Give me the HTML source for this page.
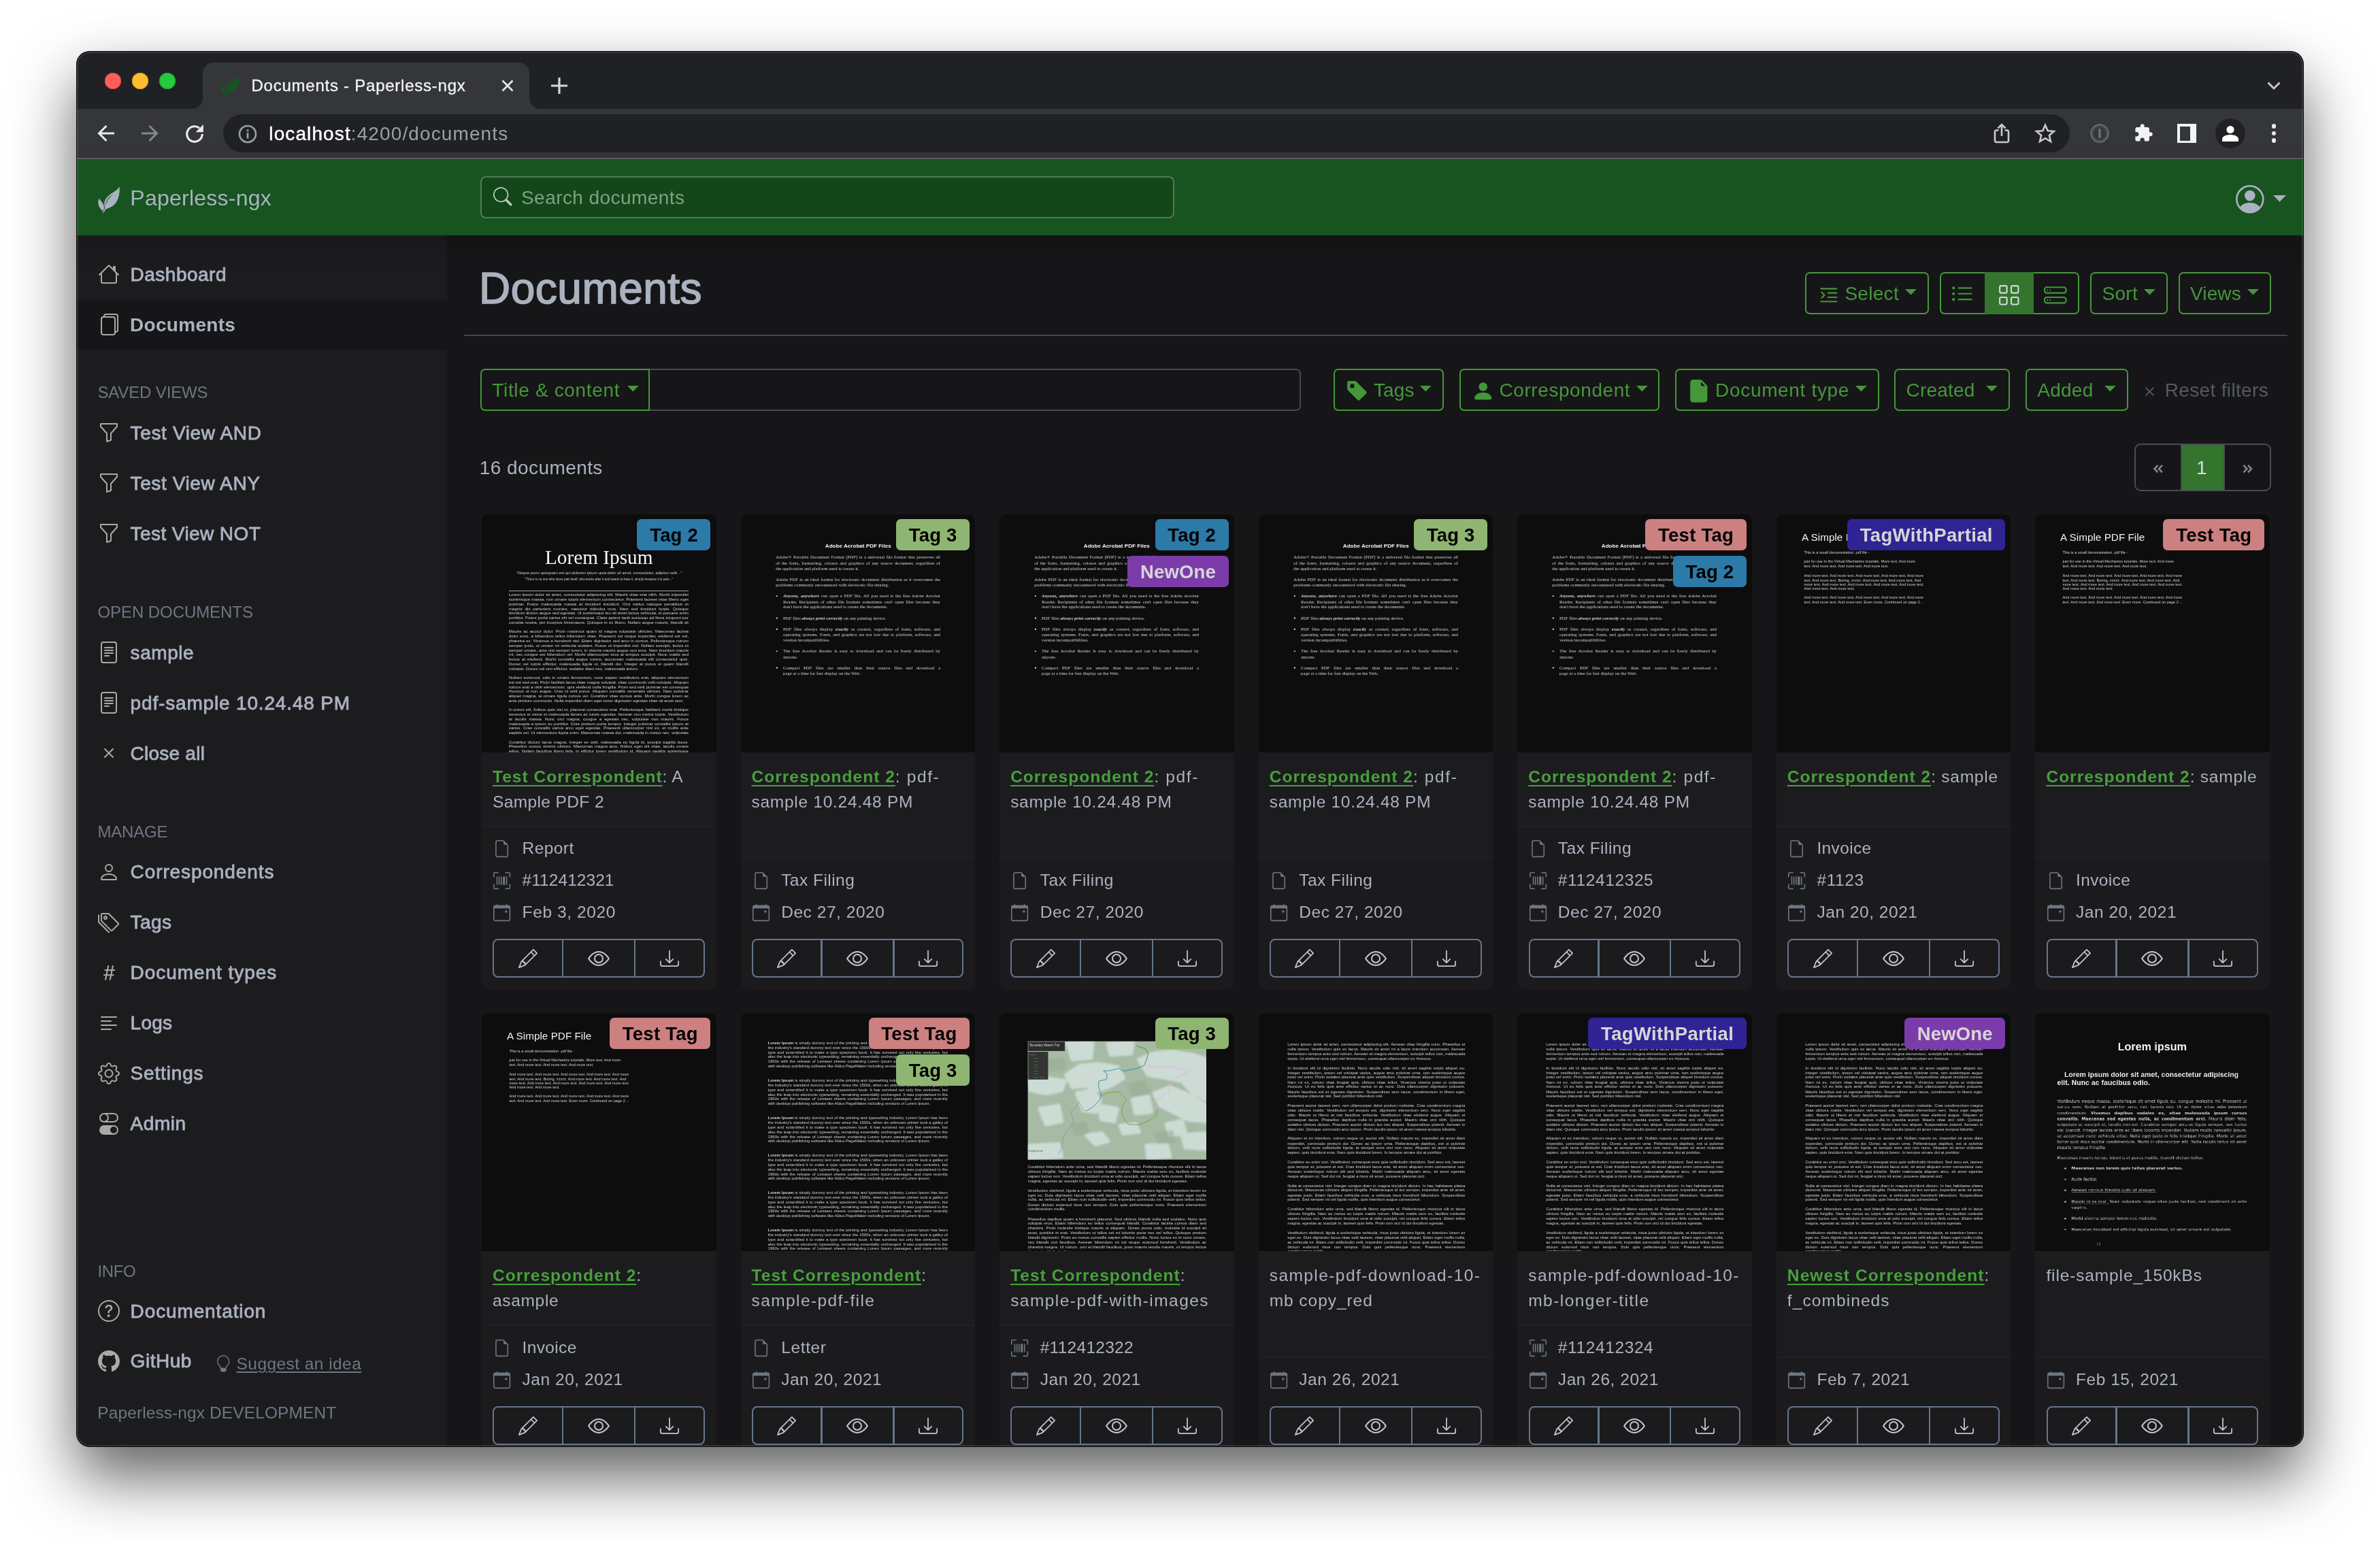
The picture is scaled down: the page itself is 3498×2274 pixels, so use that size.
<!DOCTYPE html>
<html lang="en"><head><meta charset="utf-8"><title>Documents - Paperless-ngx</title>
<style>
html,body{margin:0;padding:0}
body{width:3498px;height:2274px;overflow:hidden;background:#fff;position:relative;font-family:"Liberation Sans", sans-serif;}
#win{position:absolute;left:112px;top:75px;width:3274px;height:2052px;border-radius:20px;overflow:hidden;background:#161618;}
#shadow{position:absolute;left:112px;top:75px;width:3274px;height:2052px;border-radius:20px;box-shadow:0 44px 92px rgba(0,0,0,.62);}
#pg{will-change:transform;position:absolute;left:-112px;top:-75px;width:3498px;height:2274px;}
svg{display:block;overflow:visible}
.th{position:absolute;overflow:hidden;background:#0d0d0d}
.pgc{position:absolute;left:0;top:0;transform-origin:0 0;color:#d2d2d2}
.pgc p{margin:0;text-align:justify}
</style></head><body>
<div id="shadow"></div>
<div id="win"><div id="pg">
<div style="position:absolute;left:112px;top:75px;width:3274px;height:85px;background:#202124"></div><div style="position:absolute;left:112px;top:160px;width:3274px;height:72px;background:#35363a"></div><div style="position:absolute;left:112px;top:232px;width:3274px;height:2px;background:#5b5c60"></div><div style="position:absolute;left:298px;top:92px;width:480px;height:68px;background:#35363a;border-radius:16px 16px 0 0"></div><div style="position:absolute;left:282px;top:144px;width:16px;height:16px;background:radial-gradient(circle at 0 0, rgba(53,54,58,0) 15.5px, #35363a 16.5px)"></div><div style="position:absolute;left:778px;top:144px;width:16px;height:16px;background:radial-gradient(circle at 100% 0, rgba(53,54,58,0) 15.5px, #35363a 16.5px)"></div><div style="position:absolute;left:153.75px;top:106.75px;width:24.5px;height:24.5px;border-radius:50%;background:#fe5f57;box-shadow:inset 0 0 0 1px #e0443e"></div><div style="position:absolute;left:193.75px;top:106.75px;width:24.5px;height:24.5px;border-radius:50%;background:#febc2e;box-shadow:inset 0 0 0 1px #dea123"></div><div style="position:absolute;left:233.75px;top:106.75px;width:24.5px;height:24.5px;border-radius:50%;background:#28c840;box-shadow:inset 0 0 0 1px #1aab29"></div><svg style="position:absolute;left:324px;top:110.8px" width="28" height="31" viewBox="285 390 665 810" preserveAspectRatio="none"><path d="M940 395 C900 470 800 540 700 600 C590 670 500 760 480 880 C470 950 485 1000 497 1045 L428 1195 L447 1197 L532 1072 C620 1050 740 1000 820 900 C900 800 955 620 940 395 Z M320 750 C290 820 280 900 310 980 C340 1050 390 1100 432 1150 L470 1062 C480 1000 450 920 400 860 C370 820 340 780 320 750 Z" fill="#17541f"/><path d="M728 642 C620 700 532 800 520 965 C548 830 630 720 728 642 Z" fill="#35363a" stroke="#35363a" stroke-width="6"/></svg><div style="position:absolute;left:369.5px;top:109.70px;font-size:24px;line-height:31px;color:#f1f3f4;white-space:nowrap;letter-spacing:0.755px;-webkit-text-stroke:.35px #f1f3f4;">Documents - Paperless-ngx</div><svg style="position:absolute;left:736.8px;top:117px" width="18" height="18" viewBox="0 0 18 18" stroke="#e8eaed" stroke-width="2.6" fill="none"><path d="M1.5 1.5 L16.5 16.5 M16.5 1.5 L1.5 16.5"/></svg><svg style="position:absolute;left:810px;top:114px" width="24" height="24" viewBox="0 0 24 24" stroke="#d5d7da" stroke-width="3.2" fill="none"><path d="M12 0 V24 M0 12 H24"/></svg><svg style="position:absolute;left:3332px;top:120.3px" width="20" height="12" viewBox="0 0 20 12" stroke="#c4c6c9" stroke-width="3" fill="none"><path d="M1.5 1.5 L10 10 L18.5 1.5"/></svg><svg style="position:absolute;left:143px;top:183px" width="26" height="26" viewBox="0 0 26 26" stroke="#e8eaed" stroke-width="3" fill="none"><g ><path d="M25 13 H3 M13.5 2 L2.5 13 L13.5 24"/></g></svg><svg style="position:absolute;left:207.2px;top:183px" width="26" height="26" viewBox="0 0 26 26" stroke="#85878b" stroke-width="3" fill="none"><g transform="translate(26 0) scale(-1 1)"><path d="M25 13 H3 M13.5 2 L2.5 13 L13.5 24"/></g></svg><svg style="position:absolute;left:270.5px;top:181.5px" width="30" height="30" viewBox="0 0 28 28" fill="none"><path d="M24.5 14 A10.5 10.5 0 1 1 20.5 5.8" stroke="#e8eaed" stroke-width="2.9"/><path d="M26 1 V11.5 H15.5 Z" fill="#e8eaed"/></svg><div style="position:absolute;left:328px;top:168px;width:2714px;height:56px;background:#202124;border-radius:28px"></div><svg style="position:absolute;left:350.4px;top:182.5px" width="28" height="28" viewBox="0 0 28 28" fill="none"><circle cx="14" cy="14" r="12" stroke="#9aa0a6" stroke-width="2.6"/><rect x="12.6" y="12.2" width="2.8" height="8.4" fill="#9aa0a6"/><rect x="12.6" y="7.4" width="2.8" height="2.9" fill="#9aa0a6"/></svg><div style="position:absolute;left:395.3px;top:178.50px;font-size:28px;line-height:35px;color:#9aa0a6;white-space:nowrap;letter-spacing:1.11px;"><span style="color:#fff;-webkit-text-stroke:.45px #fff">localhost</span>:4200/documents</div><svg style="position:absolute;left:2930px;top:181px" width="24" height="30" viewBox="0 0 24 30" fill="none" stroke="#c8cacd" stroke-width="2.6"><path d="M7.5 10.5 H4.5 Q2 10.5 2 13 V25.5 Q2 28 4.5 28 H19.5 Q22 28 22 25.5 V13 Q22 10.5 19.5 10.5 H16.5 M12 19 V2.5 M6.5 7.5 L12 2 L17.5 7.5"/></svg><svg style="position:absolute;left:2991px;top:181px" width="30" height="30" viewBox="0 0 30 30" fill="none" stroke="#c8cacd" stroke-width="2.6" stroke-linejoin="miter"><path d="M15 2.8 L18.7 11.2 L27.8 12 L20.9 18 L23 27 L15 22.2 L7 27 L9.1 18 L2.2 12 L11.3 11.2 Z"/></svg><svg style="position:absolute;left:3071.6px;top:182px" width="28" height="28" viewBox="0 0 28 28" fill="none"><circle cx="14" cy="14" r="12.6" stroke="#6b6d71" stroke-width="2.2"/><circle cx="14" cy="14" r="10" stroke="#55575b" stroke-width="1.2"/><rect x="12.2" y="7" width="3.6" height="14" rx="1.5" fill="#6b6d71"/></svg><svg style="position:absolute;left:3136.4px;top:181px" width="29" height="29" viewBox="0 0 24 24" fill="#f1f3f4"><path d="M20.5 11H19V7c0-1.1-.9-2-2-2h-4V3.5C13 2.12 11.88 1 10.5 1S8 2.12 8 3.5V5H4c-1.1 0-1.99.9-1.99 2v3.8H3.5c1.49 0 2.7 1.21 2.7 2.7s-1.21 2.7-2.7 2.7H2V20c0 1.1.9 2 2 2h3.8v-1.5c0-1.49 1.21-2.7 2.7-2.7 1.49 0 2.7 1.21 2.7 2.7V22H17c1.1 0 2-.9 2-2v-4h1.5c1.38 0 2.500-1.120 2.500-2.500S21.880 11 20.500 11z"/></svg><div style="position:absolute;left:3200px;top:182px;width:28px;height:28px;background:#f1f3f4"></div><div style="position:absolute;left:3204px;top:185.5px;width:14.5px;height:21px;background:#35363a"></div><div style="position:absolute;left:3255.7px;top:174px;width:44px;height:44px;background:#202124;border-radius:50%"></div><svg style="position:absolute;left:3264.7px;top:183px" width="26" height="26" viewBox="0 0 26 26" fill="#fff"><circle cx="13" cy="7.5" r="5.6"/><path d="M1 25 V21.500 C1 17 8 15 13 15 S25 17 25 21.500 V25 Z"/></svg><div style="position:absolute;left:3338.6px;top:181.9px;width:6.8px;height:6.8px;background:#e8eaed;border-radius:50%"></div><div style="position:absolute;left:3338.6px;top:192.6px;width:6.8px;height:6.8px;background:#e8eaed;border-radius:50%"></div><div style="position:absolute;left:3338.6px;top:202.79999999999998px;width:6.8px;height:6.8px;background:#e8eaed;border-radius:50%"></div><div style="position:absolute;left:112px;top:346px;width:545.67px;height:1779px;background:#1c1c1f;box-shadow:inset -2px 0 0 rgba(0,0,0,.12)"></div><div style="position:absolute;left:112px;top:440px;width:545.67px;height:74px;background:#161618"></div><svg style="position:absolute;left:144px;top:387.0px;" width="32" height="32" viewBox="0 0 16 16" fill="#a9a9a9"><path fill-rule="evenodd" d="M2 13.5V7h1v6.5a.5.5 0 0 0 .5.5h9a.5.5 0 0 0 .5-.5V7h1v6.5a1.5 1.5 0 0 1-1.5 1.5h-9A1.5 1.5 0 0 1 2 13.5zm11-11V6l-2-2V2.5a.5.5 0 0 1 .5-.5h1a.5.5 0 0 1 .5.5z"/><path fill-rule="evenodd" d="M7.293 1.5a1 1 0 0 1 1.414 0l6.647 6.646a.5.5 0 0 1-.708.708L8 2.207 1.354 8.854a.5.5 0 1 1-.708-.708L7.293 1.5z"/></svg><div style="position:absolute;left:191.60000000000002px;top:385.80px;font-size:28px;line-height:35px;color:#abb2bf;white-space:nowrap;letter-spacing:0.491px;-webkit-text-stroke:.8px #abb2bf;">Dashboard</div><svg style="position:absolute;left:144px;top:461.0px;" width="32" height="32" viewBox="0 0 16 16" fill="#a9a9a9"><path d="M13 0H6a2 2 0 0 0-2 2 2 2 0 0 0-2 2v10a2 2 0 0 0 2 2h7a2 2 0 0 0 2-2 2 2 0 0 0 2-2V2a2 2 0 0 0-2-2zm0 13V4a2 2 0 0 0-2-2H5a1 1 0 0 1 1-1h7a1 1 0 0 1 1 1v10a1 1 0 0 1-1 1zM3 4a1 1 0 0 1 1-1h7a1 1 0 0 1 1 1v10a1 1 0 0 1-1 1H4a1 1 0 0 1-1-1V4z"/></svg><div style="position:absolute;left:191.10000000000002px;top:459.80px;font-size:28px;line-height:35px;color:#abb2bf;white-space:nowrap;font-weight:bold;letter-spacing:0.281px;">Documents</div><div style="position:absolute;left:143.4px;top:560.80px;font-size:24px;line-height:31px;color:#6d7783;white-space:nowrap;letter-spacing:-0.145px;">SAVED VIEWS</div><svg style="position:absolute;left:144px;top:619.7px;" width="32" height="32" viewBox="0 0 16 16" fill="#a9a9a9"><path d="M1.5 1.5A.5.5 0 0 1 2 1h12a.5.5 0 0 1 .5.5v2a.5.5 0 0 1-.128.334L10 8.692V13.5a.5.5 0 0 1-.342.474l-3 1A.5.5 0 0 1 6 14.5V8.692L1.628 3.834A.5.5 0 0 1 1.5 3.5v-2zm1 .5v1.308l4.372 4.858A.5.5 0 0 1 7 8.5v5.306l2-.666V8.5a.5.5 0 0 1 .128-.334L13.5 3.308V2h-11z"/></svg><div style="position:absolute;left:191.60000000000002px;top:618.50px;font-size:28px;line-height:35px;color:#abb2bf;white-space:nowrap;letter-spacing:0.633px;-webkit-text-stroke:.8px #abb2bf;">Test View AND</div><svg style="position:absolute;left:144px;top:693.7px;" width="32" height="32" viewBox="0 0 16 16" fill="#a9a9a9"><path d="M1.5 1.5A.5.5 0 0 1 2 1h12a.5.5 0 0 1 .5.5v2a.5.5 0 0 1-.128.334L10 8.692V13.5a.5.5 0 0 1-.342.474l-3 1A.5.5 0 0 1 6 14.5V8.692L1.628 3.834A.5.5 0 0 1 1.5 3.5v-2zm1 .5v1.308l4.372 4.858A.5.5 0 0 1 7 8.5v5.306l2-.666V8.5a.5.5 0 0 1 .128-.334L13.5 3.308V2h-11z"/></svg><div style="position:absolute;left:191.60000000000002px;top:692.50px;font-size:28px;line-height:35px;color:#abb2bf;white-space:nowrap;letter-spacing:0.598px;-webkit-text-stroke:.8px #abb2bf;">Test View ANY</div><svg style="position:absolute;left:144px;top:767.7px;" width="32" height="32" viewBox="0 0 16 16" fill="#a9a9a9"><path d="M1.5 1.5A.5.5 0 0 1 2 1h12a.5.5 0 0 1 .5.5v2a.5.5 0 0 1-.128.334L10 8.692V13.5a.5.5 0 0 1-.342.474l-3 1A.5.5 0 0 1 6 14.5V8.692L1.628 3.834A.5.5 0 0 1 1.5 3.5v-2zm1 .5v1.308l4.372 4.858A.5.5 0 0 1 7 8.5v5.306l2-.666V8.5a.5.5 0 0 1 .128-.334L13.5 3.308V2h-11z"/></svg><div style="position:absolute;left:191.60000000000002px;top:766.50px;font-size:28px;line-height:35px;color:#abb2bf;white-space:nowrap;letter-spacing:0.415px;-webkit-text-stroke:.8px #abb2bf;">Test View NOT</div><div style="position:absolute;left:143.4px;top:884.40px;font-size:24px;line-height:31px;color:#6d7783;white-space:nowrap;letter-spacing:-0.061px;">OPEN DOCUMENTS</div><svg style="position:absolute;left:144px;top:943.0px;" width="32" height="32" viewBox="0 0 16 16" fill="#a9a9a9"><path d="M5 4a.5.5 0 0 0 0 1h6a.5.5 0 0 0 0-1H5zm-.5 2.5A.5.5 0 0 1 5 6h6a.5.5 0 0 1 0 1H5a.5.5 0 0 1-.5-.5zM5 8a.5.5 0 0 0 0 1h6a.5.5 0 0 0 0-1H5zm0 2a.5.5 0 0 0 0 1h3a.5.5 0 0 0 0-1H5z"/><path d="M2 2a2 2 0 0 1 2-2h8a2 2 0 0 1 2 2v12a2 2 0 0 1-2 2H4a2 2 0 0 1-2-2V2zm10-1H4a1 1 0 0 0-1 1v12a1 1 0 0 0 1 1h8a1 1 0 0 0 1-1V2a1 1 0 0 0-1-1z"/></svg><div style="position:absolute;left:191.60000000000002px;top:941.80px;font-size:28px;line-height:35px;color:#abb2bf;white-space:nowrap;letter-spacing:0.556px;-webkit-text-stroke:.8px #abb2bf;">sample</div><svg style="position:absolute;left:144px;top:1017.0px;" width="32" height="32" viewBox="0 0 16 16" fill="#a9a9a9"><path d="M5 4a.5.5 0 0 0 0 1h6a.5.5 0 0 0 0-1H5zm-.5 2.5A.5.5 0 0 1 5 6h6a.5.5 0 0 1 0 1H5a.5.5 0 0 1-.5-.5zM5 8a.5.5 0 0 0 0 1h6a.5.5 0 0 0 0-1H5zm0 2a.5.5 0 0 0 0 1h3a.5.5 0 0 0 0-1H5z"/><path d="M2 2a2 2 0 0 1 2-2h8a2 2 0 0 1 2 2v12a2 2 0 0 1-2 2H4a2 2 0 0 1-2-2V2zm10-1H4a1 1 0 0 0-1 1v12a1 1 0 0 0 1 1h8a1 1 0 0 0 1-1V2a1 1 0 0 0-1-1z"/></svg><div style="position:absolute;left:191.60000000000002px;top:1015.80px;font-size:28px;line-height:35px;color:#abb2bf;white-space:nowrap;letter-spacing:0.833px;-webkit-text-stroke:.8px #abb2bf;">pdf-sample 10.24.48 PM</div><svg style="position:absolute;left:144px;top:1091.0px;" width="32" height="32" viewBox="0 0 16 16" fill="#a9a9a9"><path d="M4.646 4.646a.5.5 0 0 1 .708 0L8 7.293l2.646-2.647a.5.5 0 0 1 .708.708L8.707 8l2.647 2.646a.5.5 0 0 1-.708.708L8 8.707l-2.646 2.647a.5.5 0 0 1-.708-.708L7.293 8 4.646 5.354a.5.5 0 0 1 0-.708z"/></svg><div style="position:absolute;left:191.60000000000002px;top:1089.80px;font-size:28px;line-height:35px;color:#abb2bf;white-space:nowrap;letter-spacing:0.235px;-webkit-text-stroke:.8px #abb2bf;">Close all</div><div style="position:absolute;left:143.4px;top:1207.00px;font-size:24px;line-height:31px;color:#6d7783;white-space:nowrap;letter-spacing:-0.187px;">MANAGE</div><svg style="position:absolute;left:144px;top:1265.5px;" width="32" height="32" viewBox="0 0 16 16" fill="#a9a9a9"><path d="M8 8a3 3 0 1 0 0-6 3 3 0 0 0 0 6zm2-3a2 2 0 1 1-4 0 2 2 0 0 1 4 0zm4 8c0 1-1 1-1 1H3s-1 0-1-1 1-4 6-4 6 3 6 4zm-1-.004c-.001-.246-.154-.986-.832-1.664C11.516 10.68 10.289 10 8 10c-2.29 0-3.516.68-4.168 1.332-.678.678-.83 1.418-.832 1.664h10z"/></svg><div style="position:absolute;left:191.60000000000002px;top:1264.30px;font-size:28px;line-height:35px;color:#abb2bf;white-space:nowrap;letter-spacing:0.890px;-webkit-text-stroke:.8px #abb2bf;">Correspondents</div><svg style="position:absolute;left:144px;top:1339.6px;" width="32" height="32" viewBox="0 0 16 16" fill="#a9a9a9"><path d="M3 2v4.586l7 7L14.586 9l-7-7H3zM2 2a1 1 0 0 1 1-1h4.586a1 1 0 0 1 .707.293l7 7a1 1 0 0 1 0 1.414l-4.586 4.586a1 1 0 0 1-1.414 0l-7-7A1 1 0 0 1 2 6.586V2z"/><path d="M5.5 5a.5.5 0 1 1 0-1 .5.5 0 0 1 0 1zm0 1a1.5 1.5 0 1 0 0-3 1.5 1.5 0 0 0 0 3zM1 7.086a1 1 0 0 0 .293.707L8.75 15.25l-.043.043a1 1 0 0 1-1.414 0l-7-7A1 1 0 0 1 0 7.586V3a1 1 0 0 1 1-1v5.086z"/></svg><div style="position:absolute;left:191.60000000000002px;top:1338.40px;font-size:28px;line-height:35px;color:#abb2bf;white-space:nowrap;letter-spacing:0.389px;-webkit-text-stroke:.8px #abb2bf;">Tags</div><svg style="position:absolute;left:144px;top:1413.6px;" width="32" height="32" viewBox="0 0 16 16" fill="#a9a9a9"><path d="M8.39 12.648a1.32 1.32 0 0 0-.015.18c0 .305.21.508.5.508.266 0 .492-.172.555-.477l.554-2.703h1.204c.421 0 .617-.234.617-.547 0-.312-.188-.53-.617-.53h-.985l.516-2.524h1.265c.43 0 .618-.227.618-.547 0-.313-.188-.524-.618-.524h-1.046l.476-2.304a1.06 1.06 0 0 0 .016-.164.51.51 0 0 0-.516-.516.54.54 0 0 0-.539.43l-.523 2.554H7.617l.477-2.304c.008-.04.015-.118.015-.164a.512.512 0 0 0-.523-.516.539.539 0 0 0-.531.43L6.53 5.484H5.414c-.43 0-.617.22-.617.532 0 .312.187.539.617.539h.906l-.515 2.523H4.609c-.421 0-.609.219-.609.531 0 .313.188.547.61.547h.976l-.516 2.492c-.008.04-.015.125-.015.18 0 .305.21.508.5.508.265 0 .492-.172.554-.477l.555-2.703h2.242l-.515 2.492zm-1-6.109h2.266l-.515 2.563H6.859l.532-2.563z"/></svg><div style="position:absolute;left:191.60000000000002px;top:1412.40px;font-size:28px;line-height:35px;color:#abb2bf;white-space:nowrap;letter-spacing:0.949px;-webkit-text-stroke:.8px #abb2bf;">Document types</div><svg style="position:absolute;left:144px;top:1487.6px;" width="32" height="32" viewBox="0 0 16 16" fill="#a9a9a9"><path fill-rule="evenodd" d="M2 12.5a.5.5 0 0 1 .5-.5h7a.5.5 0 0 1 0 1h-7a.5.5 0 0 1-.5-.5zm0-3a.5.5 0 0 1 .5-.5h11a.5.5 0 0 1 0 1h-11a.5.5 0 0 1-.5-.5zm0-3a.5.5 0 0 1 .5-.5h7a.5.5 0 0 1 0 1h-7a.5.5 0 0 1-.5-.5zm0-3a.5.5 0 0 1 .5-.5h11a.5.5 0 0 1 0 1h-11a.5.5 0 0 1-.5-.5z"/></svg><div style="position:absolute;left:191.60000000000002px;top:1486.40px;font-size:28px;line-height:35px;color:#abb2bf;white-space:nowrap;letter-spacing:0.220px;-webkit-text-stroke:.8px #abb2bf;">Logs</div><svg style="position:absolute;left:144px;top:1561.6px;" width="32" height="32" viewBox="0 0 16 16" fill="#a9a9a9"><path d="M8 4.754a3.246 3.246 0 1 0 0 6.492 3.246 3.246 0 0 0 0-6.492zM5.754 8a2.246 2.246 0 1 1 4.492 0 2.246 2.246 0 0 1-4.492 0z"/><path d="M9.796 1.343c-.527-1.79-3.065-1.79-3.592 0l-.094.319a.873.873 0 0 1-1.255.52l-.292-.16c-1.64-.892-3.433.902-2.54 2.541l.159.292a.873.873 0 0 1-.52 1.255l-.319.094c-1.79.527-1.79 3.065 0 3.592l.319.094a.873.873 0 0 1 .52 1.255l-.16.292c-.892 1.64.901 3.434 2.541 2.54l.292-.159a.873.873 0 0 1 1.255.52l.094.319c.527 1.79 3.065 1.79 3.592 0l.094-.319a.873.873 0 0 1 1.255-.52l.292.16c1.64.893 3.434-.902 2.54-2.541l-.159-.292a.873.873 0 0 1 .52-1.255l.319-.094c1.79-.527 1.79-3.065 0-3.592l-.319-.094a.873.873 0 0 1-.52-1.255l.16-.292c.893-1.64-.902-3.433-2.541-2.54l-.292.159a.873.873 0 0 1-1.255-.52l-.094-.319zm-2.633.283c.246-.835 1.428-.835 1.674 0l.094.319a1.873 1.873 0 0 0 2.693 1.115l.291-.16c.764-.415 1.6.42 1.184 1.185l-.159.292a1.873 1.873 0 0 0 1.116 2.692l.318.094c.835.246.835 1.428 0 1.674l-.319.094a1.873 1.873 0 0 0-1.115 2.693l.16.291c.415.764-.42 1.6-1.185 1.184l-.291-.159a1.873 1.873 0 0 0-2.693 1.116l-.094.318c-.246.835-1.428.835-1.674 0l-.094-.319a1.873 1.873 0 0 0-2.692-1.115l-.292.16c-.764.415-1.6-.42-1.184-1.185l.159-.291A1.873 1.873 0 0 0 1.945 8.93l-.319-.094c-.835-.246-.835-1.428 0-1.674l.319-.094A1.873 1.873 0 0 0 3.06 4.377l-.16-.292c-.415-.764.42-1.6 1.185-1.184l.292.159a1.873 1.873 0 0 0 2.692-1.115l.094-.319z"/></svg><div style="position:absolute;left:191.60000000000002px;top:1560.40px;font-size:28px;line-height:35px;color:#abb2bf;white-space:nowrap;letter-spacing:0.828px;-webkit-text-stroke:.8px #abb2bf;">Settings</div><svg style="position:absolute;left:144px;top:1635.6px;" width="32" height="32" viewBox="0 0 16 16" fill="#a9a9a9"><path d="M4.5 9a3.5 3.5 0 1 0 0 7h7a3.5 3.5 0 1 0 0-7h-7zm7 6a2.5 2.5 0 1 1 0-5 2.5 2.5 0 0 1 0 5zm-7-14a2.5 2.5 0 1 0 0 5 2.5 2.5 0 0 0 0-5zm2.45 0A3.49 3.49 0 0 1 8 3.5 3.49 3.49 0 0 1 6.95 6h4.55a2.5 2.5 0 0 0 0-5H6.95zM4.5 0h7a3.5 3.5 0 1 1 0 7h-7a3.5 3.5 0 1 1 0-7z"/></svg><div style="position:absolute;left:191.60000000000002px;top:1634.40px;font-size:28px;line-height:35px;color:#abb2bf;white-space:nowrap;letter-spacing:0.546px;-webkit-text-stroke:.8px #abb2bf;">Admin</div><div style="position:absolute;left:143.4px;top:1853.10px;font-size:24px;line-height:31px;color:#6d7783;white-space:nowrap;letter-spacing:-0.357px;">INFO</div><svg style="position:absolute;left:144px;top:1910.9px;" width="32" height="32" viewBox="0 0 16 16" fill="#a9a9a9"><path d="M8 15A7 7 0 1 1 8 1a7 7 0 0 1 0 14zm0 1A8 8 0 1 0 8 0a8 8 0 0 0 0 16z"/><path d="M5.255 5.786a.237.237 0 0 0 .241.247h.825c.138 0 .248-.113.266-.25.09-.656.54-1.134 1.342-1.134.686 0 1.314.343 1.314 1.168 0 .635-.374.927-.965 1.371-.673.489-1.206 1.06-1.168 1.987l.003.217a.25.25 0 0 0 .25.246h.811a.25.25 0 0 0 .25-.25v-.105c0-.718.273-.927 1.01-1.486.609-.463 1.244-.977 1.244-2.056 0-1.511-1.276-2.241-2.673-2.241-1.267 0-2.655.59-2.75 2.286zm1.557 5.763c0 .533.425.927 1.01.927.609 0 1.028-.394 1.028-.927 0-.552-.42-.94-1.029-.94-.584 0-1.009.388-1.009.94z"/></svg><div style="position:absolute;left:191.60000000000002px;top:1909.70px;font-size:28px;line-height:35px;color:#abb2bf;white-space:nowrap;letter-spacing:0.874px;-webkit-text-stroke:.8px #abb2bf;">Documentation</div><svg style="position:absolute;left:144px;top:1984.6px;" width="32" height="32" viewBox="0 0 16 16" fill="#a9a9a9"><path d="M8 0C3.58 0 0 3.58 0 8c0 3.54 2.29 6.53 5.47 7.59.4.07.55-.17.55-.38 0-.19-.01-.82-.01-1.49-2.01.37-2.53-.49-2.69-.94-.09-.23-.48-.94-.82-1.13-.28-.15-.68-.52-.01-.53.63-.01 1.08.58 1.23.82.72 1.21 1.87.87 2.33.66.07-.52.28-.87.51-1.07-1.78-.2-3.64-.89-3.64-3.95 0-.87.31-1.59.82-2.15-.08-.2-.36-1.02.08-2.12 0 0 .67-.21 2.2.82.64-.18 1.32-.27 2-.27.68 0 1.36.09 2 .27 1.53-1.04 2.2-.82 2.2-.82.44 1.1.16 1.92.08 2.12.51.56.82 1.27.82 2.15 0 3.07-1.87 3.75-3.65 3.95.29.25.54.73.54 1.48 0 1.07-.01 1.93-.01 2.2 0 .21.15.46.55.38A8.012 8.012 0 0 0 16 8c0-4.42-3.58-8-8-8z"/></svg><div style="position:absolute;left:191.60000000000002px;top:1983.40px;font-size:28px;line-height:35px;color:#abb2bf;white-space:nowrap;letter-spacing:0.526px;-webkit-text-stroke:.8px #abb2bf;">GitHub</div><svg style="position:absolute;left:315.5px;top:1992.0px;" width="24.5" height="24.5" viewBox="0 0 16 16" fill="#6d7783"><path d="M2 6a6 6 0 1 1 10.174 4.31c-.203.196-.359.4-.453.619l-.762 1.769A.5.5 0 0 1 10.5 13a.5.5 0 0 1 0 1 .5.5 0 0 1 0 1l-.224.447a1 1 0 0 1-.894.553H6.618a1 1 0 0 1-.894-.553L5.5 15a.5.5 0 0 1 0-1 .5.5 0 0 1 0-1 .5.5 0 0 1-.46-.302l-.761-1.77a1.964 1.964 0 0 0-.453-.618A5.984 5.984 0 0 1 2 6zm6-5a5 5 0 0 0-3.479 8.592c.263.254.514.564.676.941L5.83 12h4.342l.632-1.467c.162-.377.413-.687.676-.941A5 5 0 0 0 8 1z"/></svg><div style="position:absolute;left:347.6px;top:1989.00px;font-size:24.5px;line-height:31px;color:#6d7783;white-space:nowrap;letter-spacing:0.434px;text-decoration:underline;text-decoration-thickness:2px;text-underline-offset:3px;">Suggest an idea</div><div style="position:absolute;left:143.3px;top:2060.60px;font-size:24.5px;line-height:31px;color:#6d7783;white-space:nowrap;letter-spacing:0.097px;">Paperless-ngx DEVELOPMENT</div><div style="position:absolute;left:112px;top:234px;width:3274px;height:112px;background:#17541f;box-shadow:0 16px 32px rgba(0,0,0,.15)"></div><svg style="position:absolute;left:143.8px;top:273.9px" width="32.2" height="39.3" viewBox="285 390 665 810" preserveAspectRatio="none"><path d="M940 395 C900 470 800 540 700 600 C590 670 500 760 480 880 C470 950 485 1000 497 1045 L428 1195 L447 1197 L532 1072 C620 1050 740 1000 820 900 C900 800 955 620 940 395 Z M320 750 C290 820 280 900 310 980 C340 1050 390 1100 432 1150 L470 1062 C480 1000 450 920 400 860 C370 820 340 780 320 750 Z" fill="#abb2bf"/><path d="M728 642 C620 700 532 800 520 965 C548 830 630 720 728 642 Z" fill="#17541f" stroke="#17541f" stroke-width="6"/></svg><div style="position:absolute;left:191.3px;top:270.70px;font-size:32px;line-height:40px;color:#abb2bf;white-space:nowrap;letter-spacing:0.242px;">Paperless-ngx</div><div style="position:absolute;left:706px;top:259px;width:1020px;height:62px;box-sizing:border-box;border:2px solid rgba(255,255,255,.27);border-radius:8px;background:rgba(0,0,0,.15)"></div><svg style="position:absolute;left:725.3px;top:274.7px;" width="27.5" height="27.5" viewBox="0 0 16 16" fill="#bccabd"><path d="M11.742 10.344a6.5 6.5 0 1 0-1.397 1.398h-.001c.03.04.062.078.098.115l3.85 3.85a1 1 0 0 0 1.415-1.414l-3.85-3.85a1.007 1.007 0 0 0-.115-.1zM12 6.5a5.5 5.5 0 1 1-11 0 5.5 5.5 0 0 1 11 0z"/></svg><div style="position:absolute;left:766.0px;top:272.60px;font-size:28px;line-height:35px;color:#7fa081;white-space:nowrap;letter-spacing:0.440px;">Search documents</div><svg style="position:absolute;left:3285.8999999999996px;top:272.4px;" width="41.6" height="41.6" viewBox="0 0 16 16" fill="#abb2bf"><path d="M11 6a3 3 0 1 1-6 0 3 3 0 0 1 6 0z"/><path fill-rule="evenodd" d="M0 8a8 8 0 1 1 16 0A8 8 0 0 1 0 8zm8-7a7 7 0 0 0-5.468 11.37C3.242 11.226 4.805 10 8 10s4.757 1.225 5.468 2.37A7 7 0 0 0 8 1z"/></svg><svg style="position:absolute;left:3340.7px;top:286.9px" width="19" height="9.6" viewBox="0 0 19 9.6" fill="#abb2bf"><path d="M0 0 H19 L9.5 9.6 Z"/></svg><div style="position:absolute;left:704.0999999999999px;top:385.80px;font-size:64px;line-height:76px;color:#abb2bf;white-space:nowrap;letter-spacing:0.478px;-webkit-text-stroke:1.6px #abb2bf;">Documents</div><div style="position:absolute;left:682px;top:492px;width:2680px;height:2px;background:#43454b"></div><div style="position:absolute;left:2653px;top:400.3px;width:182.0999999999999px;height:61.39999999999998px;box-sizing:border-box;border:2px solid #45973a;border-radius:7px;"></div><svg style="position:absolute;left:2670.6px;top:417.2px;" width="33.6" height="33.6" viewBox="0 0 16 16" fill="#45973a"><path d="M2 3.5a.5.5 0 0 1 .5-.5h11a.5.5 0 0 1 0 1h-11a.5.5 0 0 1-.5-.5zm.646 2.146a.5.5 0 0 1 .708 0l2 2a.5.5 0 0 1 0 .708l-2 2a.5.5 0 0 1-.708-.708L4.293 8 2.646 6.354a.5.5 0 0 1 0-.708zM7 6.5a.5.5 0 0 1 .5-.5h6a.5.5 0 0 1 0 1h-6a.5.5 0 0 1-.5-.5zm0 3a.5.5 0 0 1 .5-.5h6a.5.5 0 0 1 0 1h-6a.5.5 0 0 1-.5-.5zm-5 3a.5.5 0 0 1 .5-.5h11a.5.5 0 0 1 0 1h-11a.5.5 0 0 1-.5-.5z"/></svg><div style="position:absolute;left:2711.4px;top:414.40px;font-size:28px;line-height:35px;color:#45973a;white-space:nowrap;letter-spacing:0.296px;">Select</div><svg style="position:absolute;left:2800.3px;top:425.4px" width="16.8" height="8.4" viewBox="0 0 16.8 8.4" fill="#45973a"><path d="M0 0 H16.8 L8.4 8.4 Z"/></svg><div style="position:absolute;left:2851.2px;top:400.3px;width:204.80000000000018px;height:61.39999999999998px;box-sizing:border-box;border:2px solid #45973a;border-radius:7px;"></div><div style="position:absolute;left:2917.3px;top:400.3px;width:71.6px;height:61.39999999999998px;background:#34752e"></div><svg style="position:absolute;left:2867.0px;top:416.0px;" width="33.6" height="33.6" viewBox="0 0 16 16" fill="#45973a"><path fill-rule="evenodd" d="M5 11.5a.5.5 0 0 1 .5-.5h9a.5.5 0 0 1 0 1h-9a.5.5 0 0 1-.5-.5zm0-4a.5.5 0 0 1 .5-.5h9a.5.5 0 0 1 0 1h-9a.5.5 0 0 1-.5-.5zm0-4a.5.5 0 0 1 .5-.5h9a.5.5 0 0 1 0 1h-9a.5.5 0 0 1-.5-.5zm-3 1a1 1 0 1 0 0-2 1 1 0 0 0 0 2zm0 4a1 1 0 1 0 0-2 1 1 0 0 0 0 2zm0 4a1 1 0 1 0 0-2 1 1 0 0 0 0 2z"/></svg><svg style="position:absolute;left:2936.2999999999997px;top:416.59999999999997px;" width="33.6" height="33.6" viewBox="0 0 16 16" fill="#d3d8de"><path d="M1 2.5A1.5 1.5 0 0 1 2.5 1h3A1.5 1.5 0 0 1 7 2.5v3A1.5 1.5 0 0 1 5.5 7h-3A1.5 1.5 0 0 1 1 5.5v-3zM2.5 2a.5.5 0 0 0-.5.5v3a.5.5 0 0 0 .5.5h3a.5.5 0 0 0 .5-.5v-3a.5.5 0 0 0-.5-.5h-3zm6.5.5A1.5 1.5 0 0 1 10.5 1h3A1.5 1.5 0 0 1 15 2.5v3A1.5 1.5 0 0 1 13.5 7h-3A1.5 1.5 0 0 1 9 5.5v-3zm1.5-.5a.5.5 0 0 0-.5.5v3a.5.5 0 0 0 .5.5h3a.5.5 0 0 0 .5-.5v-3a.5.5 0 0 0-.5-.5h-3zM1 10.5A1.5 1.5 0 0 1 2.5 9h3A1.5 1.5 0 0 1 7 10.5v3A1.5 1.5 0 0 1 5.5 15h-3A1.5 1.5 0 0 1 1 13.5v-3zm1.5-.5a.5.5 0 0 0-.5.5v3a.5.5 0 0 0 .5.5h3a.5.5 0 0 0 .5-.5v-3a.5.5 0 0 0-.5-.5h-3zm6.5.5A1.5 1.5 0 0 1 10.5 9h3a1.5 1.5 0 0 1 1.5 1.5v3a1.5 1.5 0 0 1-1.5 1.5h-3A1.5 1.5 0 0 1 9 13.5v-3zm1.5-.5a.5.5 0 0 0-.5.5v3a.5.5 0 0 0 .5.5h3a.5.5 0 0 0 .5-.5v-3a.5.5 0 0 0-.5-.5h-3z"/></svg><svg style="position:absolute;left:3004.3999999999996px;top:416.59999999999997px;" width="33.6" height="33.6" viewBox="0 0 16 16" fill="#45973a"><path d="M14 10a1 1 0 0 1 1 1v1a1 1 0 0 1-1 1H2a1 1 0 0 1-1-1v-1a1 1 0 0 1 1-1h12zM2 9a2 2 0 0 0-2 2v1a2 2 0 0 0 2 2h12a2 2 0 0 0 2-2v-1a2 2 0 0 0-2-2H2z"/><path d="M5 11.5a.5.5 0 1 1-1 0 .5.5 0 0 1 1 0zm-2 0a.5.5 0 1 1-1 0 .5.5 0 0 1 1 0zM14 3a1 1 0 0 1 1 1v1a1 1 0 0 1-1 1H2a1 1 0 0 1-1-1V4a1 1 0 0 1 1-1h12zM2 2a2 2 0 0 0-2 2v1a2 2 0 0 0 2 2h12a2 2 0 0 0 2-2V4a2 2 0 0 0-2-2H2z"/><path d="M5 4.5a.5.5 0 1 1-1 0 .5.5 0 0 1 1 0zm-2 0a.5.5 0 1 1-1 0 .5.5 0 0 1 1 0z"/></svg><div style="position:absolute;left:3072px;top:400.3px;width:114px;height:61.39999999999998px;box-sizing:border-box;border:2px solid #45973a;border-radius:7px;"></div><div style="position:absolute;left:3089.6000000000004px;top:414.40px;font-size:28px;line-height:35px;color:#45973a;white-space:nowrap;letter-spacing:0.237px;">Sort</div><svg style="position:absolute;left:3151.3px;top:425.4px" width="16.8" height="8.4" viewBox="0 0 16.8 8.4" fill="#45973a"><path d="M0 0 H16.8 L8.4 8.4 Z"/></svg><div style="position:absolute;left:3202.1px;top:400.3px;width:135.80000000000018px;height:61.39999999999998px;box-sizing:border-box;border:2px solid #45973a;border-radius:7px;"></div><div style="position:absolute;left:3219.0px;top:414.40px;font-size:28px;line-height:35px;color:#45973a;white-space:nowrap;letter-spacing:0.123px;">Views</div><svg style="position:absolute;left:3302.5px;top:425.4px" width="16.8" height="8.4" viewBox="0 0 16.8 8.4" fill="#45973a"><path d="M0 0 H16.8 L8.4 8.4 Z"/></svg><div style="position:absolute;left:706.4px;top:542.2px;width:248.3px;height:61.39999999999998px;box-sizing:border-box;border:2px solid #45973a;border-radius:7px 0 0 7px"></div><div style="position:absolute;left:723.3px;top:555.80px;font-size:28px;line-height:35px;color:#45973a;white-space:nowrap;letter-spacing:0.657px;">Title &amp; content</div><svg style="position:absolute;left:921.8px;top:567px" width="16.8" height="8.4" viewBox="0 0 16.8 8.4" fill="#45973a"><path d="M0 0 H16.8 L8.4 8.4 Z"/></svg><div style="position:absolute;left:954.7px;top:542.2px;width:957.3px;height:61.39999999999998px;box-sizing:border-box;border:2px solid #47494f;border-left:none;border-radius:0 7px 7px 0"></div><div style="position:absolute;left:1960.3px;top:542.2px;width:161.50000000000023px;height:61.39999999999998px;box-sizing:border-box;border:2px solid #45973a;border-radius:7px;"></div><svg style="position:absolute;left:1978.3px;top:558.2px;" width="33.6" height="33.6" viewBox="0 0 16 16" fill="#45973a"><path d="M2 1a1 1 0 0 0-1 1v4.586a1 1 0 0 0 .293.707l7 7a1 1 0 0 0 1.414 0l4.586-4.586a1 1 0 0 0 0-1.414l-7-7A1 1 0 0 0 6.586 1H2zm4 3.5a1.5 1.5 0 1 1-3 0 1.5 1.5 0 0 1 3 0z"/></svg><div style="position:absolute;left:2019.0px;top:555.90px;font-size:28px;line-height:35px;color:#45973a;white-space:nowrap;letter-spacing:0.114px;">Tags</div><svg style="position:absolute;left:2087.3px;top:567px" width="16.8" height="8.4" viewBox="0 0 16.8 8.4" fill="#45973a"><path d="M0 0 H16.8 L8.4 8.4 Z"/></svg><div style="position:absolute;left:2145.1px;top:542.2px;width:294.4000000000001px;height:61.39999999999998px;box-sizing:border-box;border:2px solid #45973a;border-radius:7px;"></div><svg style="position:absolute;left:2163.1px;top:558.2px;" width="33.6" height="33.6" viewBox="0 0 16 16" fill="#45973a"><path d="M3 14s-1 0-1-1 1-4 6-4 6 3 6 4-1 1-1 1H3zm5-6a3 3 0 1 0 0-6 3 3 0 0 0 0 6z"/></svg><div style="position:absolute;left:2203.5px;top:555.90px;font-size:28px;line-height:35px;color:#45973a;white-space:nowrap;letter-spacing:0.574px;">Correspondent</div><svg style="position:absolute;left:2405.3px;top:567px" width="16.8" height="8.4" viewBox="0 0 16.8 8.4" fill="#45973a"><path d="M0 0 H16.8 L8.4 8.4 Z"/></svg><div style="position:absolute;left:2462.4px;top:542.2px;width:299.1999999999998px;height:61.39999999999998px;box-sizing:border-box;border:2px solid #45973a;border-radius:7px;"></div><svg style="position:absolute;left:2480.4px;top:558.2px;" width="33.6" height="33.6" viewBox="0 0 16 16" fill="#45973a"><path d="M4 0h5.293A1 1 0 0 1 10 .293L13.707 4a1 1 0 0 1 .293.707V14a2 2 0 0 1-2 2H4a2 2 0 0 1-2-2V2a2 2 0 0 1 2-2zm5.5 1.5v2a1 1 0 0 0 1 1h2l-3-3z"/></svg><div style="position:absolute;left:2521.1000000000004px;top:555.90px;font-size:28px;line-height:35px;color:#45973a;white-space:nowrap;letter-spacing:0.668px;">Document type</div><svg style="position:absolute;left:2727.4px;top:567px" width="16.8" height="8.4" viewBox="0 0 16.8 8.4" fill="#45973a"><path d="M0 0 H16.8 L8.4 8.4 Z"/></svg><div style="position:absolute;left:2784.3px;top:542.2px;width:169.39999999999964px;height:61.39999999999998px;box-sizing:border-box;border:2px solid #45973a;border-radius:7px;"></div><div style="position:absolute;left:2801.6000000000004px;top:555.90px;font-size:28px;line-height:35px;color:#45973a;white-space:nowrap;letter-spacing:0.198px;">Created</div><svg style="position:absolute;left:2918.9px;top:567px" width="16.8" height="8.4" viewBox="0 0 16.8 8.4" fill="#45973a"><path d="M0 0 H16.8 L8.4 8.4 Z"/></svg><div style="position:absolute;left:2977.3px;top:542.2px;width:150.39999999999964px;height:61.39999999999998px;box-sizing:border-box;border:2px solid #45973a;border-radius:7px;"></div><div style="position:absolute;left:2994.3px;top:555.90px;font-size:28px;line-height:35px;color:#45973a;white-space:nowrap;letter-spacing:0.246px;">Added</div><svg style="position:absolute;left:3092.9px;top:567px" width="16.8" height="8.4" viewBox="0 0 16.8 8.4" fill="#45973a"><path d="M0 0 H16.8 L8.4 8.4 Z"/></svg><svg style="position:absolute;left:3145.3999999999996px;top:561.0px;" width="29" height="29" viewBox="0 0 16 16" fill="#555962"><path d="M4.646 4.646a.5.5 0 0 1 .708 0L8 7.293l2.646-2.647a.5.5 0 0 1 .708.708L8.707 8l2.647 2.646a.5.5 0 0 1-.708.708L8 8.707l-2.646 2.647a.5.5 0 0 1-.708-.708L7.293 8 4.646 5.354a.5.5 0 0 1 0-.708z"/></svg><div style="position:absolute;left:3181.8px;top:555.90px;font-size:28px;line-height:35px;color:#555962;white-space:nowrap;letter-spacing:0.337px;">Reset filters</div><div style="position:absolute;left:704.8px;top:669.60px;font-size:28px;line-height:35px;color:#abb2bf;white-space:nowrap;letter-spacing:0.426px;">16 documents</div><div style="position:absolute;left:3137.2px;top:652.1px;width:200.9px;height:69.7px;box-sizing:border-box;border:2px solid #4a4c53;border-radius:9px"></div><div style="position:absolute;left:3205px;top:654.1px;width:2px;height:65.7px;background:#4a4c53"></div><div style="position:absolute;left:3268.2px;top:654.1px;width:2px;height:65.7px;background:#4a4c53"></div><div style="position:absolute;left:3207px;top:654.1px;width:61.2px;height:65.7px;background:#34752e"></div><div style="position:absolute;left:3228.0px;top:670.30px;font-size:28px;line-height:35px;color:#d8dde2;white-space:nowrap;">1</div><svg style="position:absolute;left:3164.75px;top:682.8px" width="14.5" height="12.4" viewBox="0 0 14.5 12.4" fill="none" stroke="#7c8591" stroke-width="2.6"><path d="M6.500 1 L1.500 6.2 L6.500 11.4 M13 1 L8 6.2 L13 11.4"/></svg><svg style="position:absolute;left:3295.55px;top:682.8px" width="14.5" height="12.4" viewBox="0 0 14.5 12.4" fill="none" stroke="#7c8591" stroke-width="2.6"><path d="M1.5 1 L6.5 6.2 L1.5 11.4 M8 1 L13 6.2 L8 11.4"/></svg><div style="position:absolute;left:708.00px;top:756px;width:344.57px;height:698.3px;background:#1c1c1f;border-radius:9px;overflow:hidden"><div class="th" style="left:0;top:0;width:344.57px;height:350px"><div class="pgc" style="width:612px;height:640px;transform:scale(0.5629)"><div style="position:absolute;left:0;top:81.2px;width:612px;text-align:center;font-family:'Liberation Serif',serif;font-size:52px;line-height:64px;color:#f4f4f4">Lorem Ipsum</div><div style="position:absolute;left:0;top:148.4px;width:612px;text-align:center;font-style:italic;font-size:10.3px;line-height:12px">"Neque porro quisquam est qui dolorem ipsum quia dolor sit amet, consectetur, adipisci velit..."</div><div style="position:absolute;left:0;top:164.8px;width:612px;text-align:center;font-size:8.3px;line-height:10px">"There is no one who loves pain itself, who seeks after it and wants to have it, simply because it is pain..."</div><div style="position:absolute;left:70.7px;top:199.0px;width:469.4px;height:1.6px;background:#999"></div><div style="position:absolute;left:70.7px;top:203.8px;width:469.4px;height:83.9px;overflow:hidden;font-size:11px;line-height:11.99px;text-align:justify">Lorem ipsum dolor sit amet, consectetur adipiscing elit. Mauris vitae erat nibh. Morbi imperdiet scelerisque massa, non ornare turpis elementum consectetur. Praesent laoreet vitae libero eget pulvinar. Fusce malesuada massa at tincidunt tincidunt. Orci varius natoque penatibus et magnis dis parturient montes, nascetur ridiculus mus. Nam sed tincidunt turpis. Quisque tincidunt dictum augue sed egestas. Ut scelerisque leo sit amet lectus vehicula, et posuere enim porttitor. Fusce porta varius elit vel consequat. Class aptent taciti sociosqu ad litora torquent per conubia nostra, per inceptos himenaeos. Quisque in ex libero. Nullam augue mauris, blandit sit amet neque eu, viverra congue est.</div><div style="position:absolute;left:70.7px;top:299.7px;width:469.4px;height:107.9px;overflow:hidden;font-size:11px;line-height:11.99px;text-align:justify">Mauris ac auctor dolor. Proin maximus quam id magna vulputate ultricies. Maecenas lacinia dolor eros, a bibendum tellus bibendum vitae. Praesent vel neque imperdiet, eleifend est vel, pharetra ex. Vivamus a hendrerit nisl. Etiam dignissim sed arcu in cursus. Pellentesque rutrum semper justo, ut ornare mi vehicula sodales. Fusce ut imperdiet nisl. Nullam suscipit, lectus et semper ornare, ante nisi semper lorem, in viverra mauris augue non eros. Nam tincidunt mauris mi, nec congue est bibendum vel. Morbi ullamcorper eros at tempus suscipit. Nunc mattis sed lectus at eleifend. Morbi convallis augue metus, accumsan malesuada elit consectetur quis. Donec vel turpis efficitur, malesuada ligula ut, blandit dui. Integer at purus et quam blandit volutpat. Donec vel orci efficitur, sodales diam nec, malesuada ipsum.</div><div style="position:absolute;left:70.7px;top:419.7px;width:469.4px;height:71.9px;overflow:hidden;font-size:11px;line-height:11.99px;text-align:justify">Nullam euismod, odio in ornare fermentum, nunc sapien vestibulum erat, aliquam elementum est est sed erat. Proin facilisis lacus vitae magna volutpat, vitae commodo velit volutpat. Aliquam rutrum erat a nibh elementum, quis eleifend nulla fringilla. Proin sed velit pulvinar est consequat rhoncus ut non augue. Cras id velit purus. Aliquam convallis venenatis ultrices. Nam pulvinar aliquet magna, at ornare ligula cursus vel. Curabitur vitae cursus ante. Morbi congue lorem ac ante pretium commodo. Nulla imperdiet diam eget tortor dignissim egestas vitae sit amet sem.</div><div style="position:absolute;left:70.7px;top:503.6px;width:469.4px;height:71.9px;overflow:hidden;font-size:11px;line-height:11.99px;text-align:justify">In purus elit, finibus quis nisi ut, placerat consectetur erat. Pellentesque habitant morbi tristique senectus et netus et malesuada fames ac turpis egestas. Aenean non metus turpis. Vestibulum at iaculis massa. Nunc orci magna, congue a egestas nec, vulputate non mauris. Fusce malesuada a ipsum eu porttitor. Cras pretium porta tempor. Integer pulvinar convallis ipsum at varius. Cras convallis varius arcu eget egestas. Praesent ullamcorper nisl ex, et mollis ante sagittis vel. Ut elementum ligula enim. Maecenas massa dui, malesuada in metus nec, vulputate efficitur nibh.</div><div style="position:absolute;left:70.7px;top:587.5px;width:469.4px;height:48.0px;overflow:hidden;font-size:11px;line-height:11.99px;text-align:justify">Curabitur dictum lacus magna. Integer ex velit, malesuada eu ligula id, suscipit sagittis lacus. Phasellus cursus viverra ultrices. Maecenas magna arcu, finibus eget elit vitae, iaculis ornare tellus. Nullam faucibus libero felis, in efficitur lorem vestibulum id. Aliquam sagittis scelerisque tellus, a</div></div></div><div style="position:absolute;left:228.47px;top:7.2px;width:108.00px;height:45.8px;border-radius:7px;background:#2c7aa8;color:#000;font-weight:bold;font-size:27.5px;line-height:45.8px;text-align:center;letter-spacing:0.163px;white-space:nowrap;text-indent:0.163px"><span style="position:relative;top:.6px">Tag 2</span></div><div style="position:absolute;left:16px;top:370.30px;font-size:24.5px;line-height:31px;white-space:nowrap;color:#abb2bf"><span style="font-weight:bold;color:#48a03c;text-decoration:underline;text-decoration-thickness:2px;text-underline-offset:3.5px;letter-spacing:1.035px">Test Correspondent</span><span style="letter-spacing:0.699px">: A</span></div><div style="position:absolute;left:16px;top:407.10px;font-size:24.5px;line-height:31px;white-space:nowrap;color:#abb2bf"><span style="letter-spacing:0.382px">Sample PDF 2</span></div><div style="position:absolute;left:0;top:457.5px;width:344.57px;height:240.8px;background:rgba(0,0,0,.035);border-top:2px solid rgba(255,255,255,.022)"></div><svg style="position:absolute;left:17.3px;top:479.0px;" width="25.2" height="25.2" viewBox="0 0 16 16" fill="#6d7783"><path d="M14 4.5V14a2 2 0 0 1-2 2H4a2 2 0 0 1-2-2V2a2 2 0 0 1 2-2h5.5L14 4.5zm-3 0A1.5 1.5 0 0 1 9.5 3V1H4a1 1 0 0 0-1 1v12a1 1 0 0 0 1 1h8a1 1 0 0 0 1-1V4.5h-2z"/></svg><div style="position:absolute;left:59.6px;top:475.10px;font-size:24.5px;line-height:31px;white-space:nowrap;color:#abb2bf;letter-spacing:0.427px">Report</div><svg style="position:absolute;left:17.3px;top:525.9px;" width="25.2" height="25.2" viewBox="0 0 16 16" fill="#6d7783"><path d="M1.5 1a.5.5 0 0 0-.5.5v3a.5.5 0 0 1-1 0v-3A1.5 1.5 0 0 1 1.5 0h3a.5.5 0 0 1 0 1h-3zM11 .5a.5.5 0 0 1 .5-.5h3A1.5 1.5 0 0 1 16 1.5v3a.5.5 0 0 1-1 0v-3a.5.5 0 0 0-.5-.5h-3a.5.5 0 0 1-.5-.5zM.5 11a.5.5 0 0 1 .5.5v3a.5.5 0 0 0 .5.5h3a.5.5 0 0 1 0 1h-3A1.5 1.5 0 0 1 0 14.5v-3a.5.5 0 0 1 .5-.5zm15 0a.5.5 0 0 1 .5.5v3a1.5 1.5 0 0 1-1.5 1.5h-3a.5.5 0 0 1 0-1h3a.5.5 0 0 0 .5-.5v-3a.5.5 0 0 1 .5-.5zM3 4.5a.5.5 0 0 1 1 0v7a.5.5 0 0 1-1 0v-7zm2 0a.5.5 0 0 1 1 0v7a.5.5 0 0 1-1 0v-7zm2 0a.5.5 0 0 1 1 0v7a.5.5 0 0 1-1 0v-7zm2 0a.5.5 0 0 1 .5-.5h1a.5.5 0 0 1 .5.5v7a.5.5 0 0 1-.5.5h-1a.5.5 0 0 1-.5-.5v-7zm3 0a.5.5 0 0 1 1 0v7a.5.5 0 0 1-1 0v-7z"/></svg><div style="position:absolute;left:59.6px;top:522.00px;font-size:24.5px;line-height:31px;white-space:nowrap;color:#abb2bf;letter-spacing:0.046px">#112412321</div><svg style="position:absolute;left:17.3px;top:572.8px;" width="25.2" height="25.2" viewBox="0 0 16 16" fill="#6d7783"><path d="M11 6.5a.5.5 0 0 1 .5-.5h1a.5.5 0 0 1 .5.5v1a.5.5 0 0 1-.5.5h-1a.5.5 0 0 1-.5-.5v-1z"/><path d="M3.5 0a.5.5 0 0 1 .5.5V1h8V.5a.5.5 0 0 1 1 0V1h1a2 2 0 0 1 2 2v11a2 2 0 0 1-2 2H2a2 2 0 0 1-2-2V3a2 2 0 0 1 2-2h1V.5a.5.5 0 0 1 .5-.5zM1 4v10a1 1 0 0 0 1 1h12a1 1 0 0 0 1-1V4H1z"/></svg><div style="position:absolute;left:59.6px;top:568.90px;font-size:24.5px;line-height:31px;white-space:nowrap;color:#abb2bf;letter-spacing:0.603px">Feb 3, 2020</div><div style="position:absolute;left:16.3px;top:624.4px;width:311.6px;height:56.5px;box-sizing:border-box;border:2px solid #67758b;border-radius:8px"></div><div style="position:absolute;left:117.9px;top:624.4px;width:2.4px;height:56.5px;background:#67758b"></div><div style="position:absolute;left:223.8px;top:624.4px;width:2.4px;height:56.5px;background:#67758b"></div><svg style="position:absolute;left:53.7px;top:638.9000000000001px;" width="28" height="28" viewBox="0 0 16 16" fill="#c3c7cd"><path d="M12.146.146a.5.5 0 0 1 .708 0l3 3a.5.5 0 0 1 0 .708l-10 10a.5.5 0 0 1-.168.11l-5 2a.5.5 0 0 1-.65-.65l2-5a.5.5 0 0 1 .11-.168l10-10zM11.207 2.5 13.5 4.793 14.793 3.5 12.5 1.207 11.207 2.5zm1.586 3L10.5 3.207 4 9.707V10h.5a.5.5 0 0 1 .5.5v.5h.5a.5.5 0 0 1 .5.5v.5h.293l6.5-6.5zm-9.761 5.175-.106.106-1.528 3.821 3.821-1.528.106-.106A.5.5 0 0 1 5 12.5V12h-.5a.5.5 0 0 1-.5-.5V11h-.5a.5.5 0 0 1-.468-.325z"/></svg><svg style="position:absolute;left:155.8px;top:636.9000000000001px;" width="32" height="32" viewBox="0 0 16 16" fill="#c3c7cd"><path d="M16 8s-3-5.5-8-5.5S0 8 0 8s3 5.5 8 5.5S16 8 16 8zM1.173 8a13.133 13.133 0 0 1 1.66-2.043C4.12 4.668 5.88 3.5 8 3.5c2.12 0 3.879 1.168 5.168 2.457A13.133 13.133 0 0 1 14.828 8c-.058.087-.122.183-.195.288-.335.48-.83 1.12-1.465 1.755C11.879 11.332 10.119 12.5 8 12.5c-2.12 0-3.879-1.168-5.168-2.457A13.134 13.134 0 0 1 1.172 8z"/><path d="M8 5.5a2.5 2.5 0 1 0 0 5 2.5 2.5 0 0 0 0-5zM4.5 8a3.5 3.5 0 1 1 7 0 3.5 3.5 0 0 1-7 0z"/></svg><svg style="position:absolute;left:261.9px;top:638.9000000000001px;" width="28" height="28" viewBox="0 0 16 16" fill="#c3c7cd"><path d="M.5 9.9a.5.5 0 0 1 .5.5v2.5a1 1 0 0 0 1 1h12a1 1 0 0 0 1-1v-2.5a.5.5 0 0 1 1 0v2.5a2 2 0 0 1-2 2H2a2 2 0 0 1-2-2v-2.5a.5.5 0 0 1 .5-.5z"/><path d="M7.646 11.854a.5.5 0 0 0 .708 0l3-3a.5.5 0 0 0-.708-.708L8.500 10.293V1.5a.5.5 0 0 0-1 0v8.793L5.354 8.146a.5.5 0 1 0-.708.708l3 3z"/></svg></div><div style="position:absolute;left:1088.57px;top:756px;width:344.57px;height:698.3px;background:#1c1c1f;border-radius:9px;overflow:hidden"><div class="th" style="left:0;top:0;width:344.57px;height:350px"><div class="pgc" style="width:612px;height:640px;transform:scale(0.5629)"><div style="position:absolute;left:0;top:73.7px;width:612px;text-align:center;font-weight:bold;font-size:14.4px;line-height:16px;color:#f4f4f4">Adobe Acrobat PDF Files</div><div style="position:absolute;left:91.1px;top:105.2px;width:429.4px;font-family:'Liberation Serif',serif;font-size:12px;line-height:14.42px;white-space:nowrap;text-align:justify;text-align-last:justify;">Adobe® Portable Document Format (PDF) is a universal file format that preserves all</div><div style="position:absolute;left:91.1px;top:119.7px;width:429.4px;font-family:'Liberation Serif',serif;font-size:12px;line-height:14.42px;white-space:nowrap;text-align:justify;text-align-last:justify;">of the fonts, formatting, colours and graphics of any source document, regardless of</div><div style="position:absolute;left:91.1px;top:134.1px;width:429.4px;font-family:'Liberation Serif',serif;font-size:12px;line-height:14.42px;white-space:nowrap;">the application and platform used to create it.</div><div style="position:absolute;left:91.1px;top:162.9px;width:429.4px;font-family:'Liberation Serif',serif;font-size:12px;line-height:14.42px;white-space:nowrap;text-align:justify;text-align-last:justify;">Adobe PDF is an ideal format for electronic document distribution as it overcomes the</div><div style="position:absolute;left:91.1px;top:177.3px;width:429.4px;font-family:'Liberation Serif',serif;font-size:12px;line-height:14.42px;white-space:nowrap;">problems commonly encountered with electronic file sharing.</div><div style="position:absolute;left:110.3px;top:206.2px;width:410.2px;font-family:'Liberation Serif',serif;font-size:12px;line-height:14.42px;white-space:nowrap;text-align:justify;text-align-last:justify;"><b><i>Anyone, anywhere</i></b> can open a PDF file. All you need is the free Adobe Acrobat</div><div style="position:absolute;left:92.1px;top:211.8px;width:3.6px;height:3.6px;border-radius:50%;background:#ddd"></div><div style="position:absolute;left:110.3px;top:220.6px;width:410.2px;font-family:'Liberation Serif',serif;font-size:12px;line-height:14.42px;white-space:nowrap;text-align:justify;text-align-last:justify;">Reader. Recipients of other file formats sometimes can't open files because they</div><div style="position:absolute;left:110.3px;top:235.0px;width:410.2px;font-family:'Liberation Serif',serif;font-size:12px;line-height:14.42px;white-space:nowrap;">don't have the applications used to create the documents.</div><div style="position:absolute;left:110.3px;top:263.8px;width:410.2px;font-family:'Liberation Serif',serif;font-size:12px;line-height:14.42px;white-space:nowrap;">PDF files <b><i>always print correctly</i></b> on any printing device.</div><div style="position:absolute;left:92.1px;top:269.4px;width:3.6px;height:3.6px;border-radius:50%;background:#ddd"></div><div style="position:absolute;left:110.3px;top:292.7px;width:410.2px;font-family:'Liberation Serif',serif;font-size:12px;line-height:14.42px;white-space:nowrap;text-align:justify;text-align-last:justify;">PDF files always display <b><i>exactly</i></b> as created, regardless of fonts, software, and</div><div style="position:absolute;left:92.1px;top:298.3px;width:3.6px;height:3.6px;border-radius:50%;background:#ddd"></div><div style="position:absolute;left:110.3px;top:307.1px;width:410.2px;font-family:'Liberation Serif',serif;font-size:12px;line-height:14.42px;white-space:nowrap;text-align:justify;text-align-last:justify;">operating systems. Fonts, and graphics are not lost due to platform, software, and</div><div style="position:absolute;left:110.3px;top:321.5px;width:410.2px;font-family:'Liberation Serif',serif;font-size:12px;line-height:14.42px;white-space:nowrap;">version incompatibilities.</div><div style="position:absolute;left:110.3px;top:350.3px;width:410.2px;font-family:'Liberation Serif',serif;font-size:12px;line-height:14.42px;white-space:nowrap;text-align:justify;text-align-last:justify;">The free Acrobat Reader is easy to download and can be freely distributed by</div><div style="position:absolute;left:92.1px;top:355.9px;width:3.6px;height:3.6px;border-radius:50%;background:#ddd"></div><div style="position:absolute;left:110.3px;top:364.7px;width:410.2px;font-family:'Liberation Serif',serif;font-size:12px;line-height:14.42px;white-space:nowrap;">anyone.</div><div style="position:absolute;left:110.3px;top:393.6px;width:410.2px;font-family:'Liberation Serif',serif;font-size:12px;line-height:14.42px;white-space:nowrap;text-align:justify;text-align-last:justify;">Compact PDF files are smaller than their source files and download a</div><div style="position:absolute;left:92.1px;top:399.2px;width:3.6px;height:3.6px;border-radius:50%;background:#ddd"></div><div style="position:absolute;left:110.3px;top:408.0px;width:410.2px;font-family:'Liberation Serif',serif;font-size:12px;line-height:14.42px;white-space:nowrap;">page at a time for fast display on the Web.</div></div></div><div style="position:absolute;left:228.47px;top:7.2px;width:108.00px;height:45.8px;border-radius:7px;background:#8fb572;color:#000;font-weight:bold;font-size:27.5px;line-height:45.8px;text-align:center;letter-spacing:0.163px;white-space:nowrap;text-indent:0.163px"><span style="position:relative;top:.6px">Tag 3</span></div><div style="position:absolute;left:16px;top:370.30px;font-size:24.5px;line-height:31px;white-space:nowrap;color:#abb2bf"><span style="font-weight:bold;color:#48a03c;text-decoration:underline;text-decoration-thickness:2px;text-underline-offset:3.5px;letter-spacing:1.018px">Correspondent 2</span><span style="letter-spacing:1.611px">: pdf-</span></div><div style="position:absolute;left:16px;top:407.10px;font-size:24.5px;line-height:31px;white-space:nowrap;color:#abb2bf"><span style="letter-spacing:0.716px">sample 10.24.48 PM</span></div><div style="position:absolute;left:0;top:504.4px;width:344.57px;height:193.9px;background:rgba(0,0,0,.035);border-top:2px solid rgba(255,255,255,.022)"></div><svg style="position:absolute;left:17.3px;top:525.9px;" width="25.2" height="25.2" viewBox="0 0 16 16" fill="#6d7783"><path d="M14 4.5V14a2 2 0 0 1-2 2H4a2 2 0 0 1-2-2V2a2 2 0 0 1 2-2h5.5L14 4.5zm-3 0A1.5 1.5 0 0 1 9.5 3V1H4a1 1 0 0 0-1 1v12a1 1 0 0 0 1 1h8a1 1 0 0 0 1-1V4.5h-2z"/></svg><div style="position:absolute;left:59.6px;top:522.00px;font-size:24.5px;line-height:31px;white-space:nowrap;color:#abb2bf;letter-spacing:0.466px">Tax Filing</div><svg style="position:absolute;left:17.3px;top:572.8px;" width="25.2" height="25.2" viewBox="0 0 16 16" fill="#6d7783"><path d="M11 6.5a.5.5 0 0 1 .5-.5h1a.5.5 0 0 1 .5.5v1a.5.5 0 0 1-.5.5h-1a.5.5 0 0 1-.5-.5v-1z"/><path d="M3.5 0a.5.5 0 0 1 .5.5V1h8V.5a.5.5 0 0 1 1 0V1h1a2 2 0 0 1 2 2v11a2 2 0 0 1-2 2H2a2 2 0 0 1-2-2V3a2 2 0 0 1 2-2h1V.5a.5.5 0 0 1 .5-.5zM1 4v10a1 1 0 0 0 1 1h12a1 1 0 0 0 1-1V4H1z"/></svg><div style="position:absolute;left:59.6px;top:568.90px;font-size:24.5px;line-height:31px;white-space:nowrap;color:#abb2bf;letter-spacing:0.547px">Dec 27, 2020</div><div style="position:absolute;left:16.3px;top:624.4px;width:311.6px;height:56.5px;box-sizing:border-box;border:2px solid #67758b;border-radius:8px"></div><div style="position:absolute;left:117.9px;top:624.4px;width:2.4px;height:56.5px;background:#67758b"></div><div style="position:absolute;left:223.8px;top:624.4px;width:2.4px;height:56.5px;background:#67758b"></div><svg style="position:absolute;left:53.7px;top:638.9px;" width="28" height="28" viewBox="0 0 16 16" fill="#c3c7cd"><path d="M12.146.146a.5.5 0 0 1 .708 0l3 3a.5.5 0 0 1 0 .708l-10 10a.5.5 0 0 1-.168.11l-5 2a.5.5 0 0 1-.65-.65l2-5a.5.5 0 0 1 .11-.168l10-10zM11.207 2.5 13.5 4.793 14.793 3.5 12.5 1.207 11.207 2.5zm1.586 3L10.5 3.207 4 9.707V10h.5a.5.5 0 0 1 .5.5v.5h.5a.5.5 0 0 1 .5.5v.5h.293l6.5-6.5zm-9.761 5.175-.106.106-1.528 3.821 3.821-1.528.106-.106A.5.5 0 0 1 5 12.5V12h-.5a.5.5 0 0 1-.5-.5V11h-.5a.5.5 0 0 1-.468-.325z"/></svg><svg style="position:absolute;left:155.8px;top:636.9px;" width="32" height="32" viewBox="0 0 16 16" fill="#c3c7cd"><path d="M16 8s-3-5.5-8-5.5S0 8 0 8s3 5.5 8 5.5S16 8 16 8zM1.173 8a13.133 13.133 0 0 1 1.66-2.043C4.12 4.668 5.88 3.5 8 3.5c2.12 0 3.879 1.168 5.168 2.457A13.133 13.133 0 0 1 14.828 8c-.058.087-.122.183-.195.288-.335.48-.83 1.12-1.465 1.755C11.879 11.332 10.119 12.5 8 12.5c-2.12 0-3.879-1.168-5.168-2.457A13.134 13.134 0 0 1 1.172 8z"/><path d="M8 5.5a2.5 2.5 0 1 0 0 5 2.5 2.5 0 0 0 0-5zM4.5 8a3.5 3.5 0 1 1 7 0 3.5 3.5 0 0 1-7 0z"/></svg><svg style="position:absolute;left:261.9px;top:638.9px;" width="28" height="28" viewBox="0 0 16 16" fill="#c3c7cd"><path d="M.5 9.9a.5.5 0 0 1 .5.5v2.5a1 1 0 0 0 1 1h12a1 1 0 0 0 1-1v-2.5a.5.5 0 0 1 1 0v2.5a2 2 0 0 1-2 2H2a2 2 0 0 1-2-2v-2.5a.5.5 0 0 1 .5-.5z"/><path d="M7.646 11.854a.5.5 0 0 0 .708 0l3-3a.5.5 0 0 0-.708-.708L8.500 10.293V1.5a.5.5 0 0 0-1 0v8.793L5.354 8.146a.5.5 0 1 0-.708.708l3 3z"/></svg></div><div style="position:absolute;left:1469.14px;top:756px;width:344.57px;height:698.3px;background:#1c1c1f;border-radius:9px;overflow:hidden"><div class="th" style="left:0;top:0;width:344.57px;height:350px"><div class="pgc" style="width:612px;height:640px;transform:scale(0.5629)"><div style="position:absolute;left:0;top:73.7px;width:612px;text-align:center;font-weight:bold;font-size:14.4px;line-height:16px;color:#f4f4f4">Adobe Acrobat PDF Files</div><div style="position:absolute;left:91.1px;top:105.2px;width:429.4px;font-family:'Liberation Serif',serif;font-size:12px;line-height:14.42px;white-space:nowrap;text-align:justify;text-align-last:justify;">Adobe® Portable Document Format (PDF) is a universal file format that preserves all</div><div style="position:absolute;left:91.1px;top:119.7px;width:429.4px;font-family:'Liberation Serif',serif;font-size:12px;line-height:14.42px;white-space:nowrap;text-align:justify;text-align-last:justify;">of the fonts, formatting, colours and graphics of any source document, regardless of</div><div style="position:absolute;left:91.1px;top:134.1px;width:429.4px;font-family:'Liberation Serif',serif;font-size:12px;line-height:14.42px;white-space:nowrap;">the application and platform used to create it.</div><div style="position:absolute;left:91.1px;top:162.9px;width:429.4px;font-family:'Liberation Serif',serif;font-size:12px;line-height:14.42px;white-space:nowrap;text-align:justify;text-align-last:justify;">Adobe PDF is an ideal format for electronic document distribution as it overcomes the</div><div style="position:absolute;left:91.1px;top:177.3px;width:429.4px;font-family:'Liberation Serif',serif;font-size:12px;line-height:14.42px;white-space:nowrap;">problems commonly encountered with electronic file sharing.</div><div style="position:absolute;left:110.3px;top:206.2px;width:410.2px;font-family:'Liberation Serif',serif;font-size:12px;line-height:14.42px;white-space:nowrap;text-align:justify;text-align-last:justify;"><b><i>Anyone, anywhere</i></b> can open a PDF file. All you need is the free Adobe Acrobat</div><div style="position:absolute;left:92.1px;top:211.8px;width:3.6px;height:3.6px;border-radius:50%;background:#ddd"></div><div style="position:absolute;left:110.3px;top:220.6px;width:410.2px;font-family:'Liberation Serif',serif;font-size:12px;line-height:14.42px;white-space:nowrap;text-align:justify;text-align-last:justify;">Reader. Recipients of other file formats sometimes can't open files because they</div><div style="position:absolute;left:110.3px;top:235.0px;width:410.2px;font-family:'Liberation Serif',serif;font-size:12px;line-height:14.42px;white-space:nowrap;">don't have the applications used to create the documents.</div><div style="position:absolute;left:110.3px;top:263.8px;width:410.2px;font-family:'Liberation Serif',serif;font-size:12px;line-height:14.42px;white-space:nowrap;">PDF files <b><i>always print correctly</i></b> on any printing device.</div><div style="position:absolute;left:92.1px;top:269.4px;width:3.6px;height:3.6px;border-radius:50%;background:#ddd"></div><div style="position:absolute;left:110.3px;top:292.7px;width:410.2px;font-family:'Liberation Serif',serif;font-size:12px;line-height:14.42px;white-space:nowrap;text-align:justify;text-align-last:justify;">PDF files always display <b><i>exactly</i></b> as created, regardless of fonts, software, and</div><div style="position:absolute;left:92.1px;top:298.3px;width:3.6px;height:3.6px;border-radius:50%;background:#ddd"></div><div style="position:absolute;left:110.3px;top:307.1px;width:410.2px;font-family:'Liberation Serif',serif;font-size:12px;line-height:14.42px;white-space:nowrap;text-align:justify;text-align-last:justify;">operating systems. Fonts, and graphics are not lost due to platform, software, and</div><div style="position:absolute;left:110.3px;top:321.5px;width:410.2px;font-family:'Liberation Serif',serif;font-size:12px;line-height:14.42px;white-space:nowrap;">version incompatibilities.</div><div style="position:absolute;left:110.3px;top:350.3px;width:410.2px;font-family:'Liberation Serif',serif;font-size:12px;line-height:14.42px;white-space:nowrap;text-align:justify;text-align-last:justify;">The free Acrobat Reader is easy to download and can be freely distributed by</div><div style="position:absolute;left:92.1px;top:355.9px;width:3.6px;height:3.6px;border-radius:50%;background:#ddd"></div><div style="position:absolute;left:110.3px;top:364.7px;width:410.2px;font-family:'Liberation Serif',serif;font-size:12px;line-height:14.42px;white-space:nowrap;">anyone.</div><div style="position:absolute;left:110.3px;top:393.6px;width:410.2px;font-family:'Liberation Serif',serif;font-size:12px;line-height:14.42px;white-space:nowrap;text-align:justify;text-align-last:justify;">Compact PDF files are smaller than their source files and download a</div><div style="position:absolute;left:92.1px;top:399.2px;width:3.6px;height:3.6px;border-radius:50%;background:#ddd"></div><div style="position:absolute;left:110.3px;top:408.0px;width:410.2px;font-family:'Liberation Serif',serif;font-size:12px;line-height:14.42px;white-space:nowrap;">page at a time for fast display on the Web.</div></div></div><div style="position:absolute;left:228.47px;top:7.2px;width:108.00px;height:45.8px;border-radius:7px;background:#2c7aa8;color:#000;font-weight:bold;font-size:27.5px;line-height:45.8px;text-align:center;letter-spacing:0.163px;white-space:nowrap;text-indent:0.163px"><span style="position:relative;top:.6px">Tag 2</span></div><div style="position:absolute;left:188.17px;top:61.1px;width:148.30px;height:45.8px;border-radius:7px;background:#7b3caa;color:#d6d6d6;font-weight:bold;font-size:27.5px;line-height:45.8px;text-align:center;letter-spacing:0.145px;white-space:nowrap;text-indent:0.145px"><span style="position:relative;top:.6px">NewOne</span></div><div style="position:absolute;left:16px;top:370.30px;font-size:24.5px;line-height:31px;white-space:nowrap;color:#abb2bf"><span style="font-weight:bold;color:#48a03c;text-decoration:underline;text-decoration-thickness:2px;text-underline-offset:3.5px;letter-spacing:1.018px">Correspondent 2</span><span style="letter-spacing:1.611px">: pdf-</span></div><div style="position:absolute;left:16px;top:407.10px;font-size:24.5px;line-height:31px;white-space:nowrap;color:#abb2bf"><span style="letter-spacing:0.716px">sample 10.24.48 PM</span></div><div style="position:absolute;left:0;top:504.4px;width:344.57px;height:193.9px;background:rgba(0,0,0,.035);border-top:2px solid rgba(255,255,255,.022)"></div><svg style="position:absolute;left:17.3px;top:525.9px;" width="25.2" height="25.2" viewBox="0 0 16 16" fill="#6d7783"><path d="M14 4.5V14a2 2 0 0 1-2 2H4a2 2 0 0 1-2-2V2a2 2 0 0 1 2-2h5.5L14 4.5zm-3 0A1.5 1.5 0 0 1 9.5 3V1H4a1 1 0 0 0-1 1v12a1 1 0 0 0 1 1h8a1 1 0 0 0 1-1V4.5h-2z"/></svg><div style="position:absolute;left:59.6px;top:522.00px;font-size:24.5px;line-height:31px;white-space:nowrap;color:#abb2bf;letter-spacing:0.466px">Tax Filing</div><svg style="position:absolute;left:17.3px;top:572.8px;" width="25.2" height="25.2" viewBox="0 0 16 16" fill="#6d7783"><path d="M11 6.5a.5.5 0 0 1 .5-.5h1a.5.5 0 0 1 .5.5v1a.5.5 0 0 1-.5.5h-1a.5.5 0 0 1-.5-.5v-1z"/><path d="M3.5 0a.5.5 0 0 1 .5.5V1h8V.5a.5.5 0 0 1 1 0V1h1a2 2 0 0 1 2 2v11a2 2 0 0 1-2 2H2a2 2 0 0 1-2-2V3a2 2 0 0 1 2-2h1V.5a.5.5 0 0 1 .5-.5zM1 4v10a1 1 0 0 0 1 1h12a1 1 0 0 0 1-1V4H1z"/></svg><div style="position:absolute;left:59.6px;top:568.90px;font-size:24.5px;line-height:31px;white-space:nowrap;color:#abb2bf;letter-spacing:0.547px">Dec 27, 2020</div><div style="position:absolute;left:16.3px;top:624.4px;width:311.6px;height:56.5px;box-sizing:border-box;border:2px solid #67758b;border-radius:8px"></div><div style="position:absolute;left:117.9px;top:624.4px;width:2.4px;height:56.5px;background:#67758b"></div><div style="position:absolute;left:223.8px;top:624.4px;width:2.4px;height:56.5px;background:#67758b"></div><svg style="position:absolute;left:53.7px;top:638.9px;" width="28" height="28" viewBox="0 0 16 16" fill="#c3c7cd"><path d="M12.146.146a.5.5 0 0 1 .708 0l3 3a.5.5 0 0 1 0 .708l-10 10a.5.5 0 0 1-.168.11l-5 2a.5.5 0 0 1-.65-.65l2-5a.5.5 0 0 1 .11-.168l10-10zM11.207 2.5 13.5 4.793 14.793 3.5 12.5 1.207 11.207 2.5zm1.586 3L10.5 3.207 4 9.707V10h.5a.5.5 0 0 1 .5.5v.5h.5a.5.5 0 0 1 .5.5v.5h.293l6.5-6.5zm-9.761 5.175-.106.106-1.528 3.821 3.821-1.528.106-.106A.5.5 0 0 1 5 12.5V12h-.5a.5.5 0 0 1-.5-.5V11h-.5a.5.5 0 0 1-.468-.325z"/></svg><svg style="position:absolute;left:155.8px;top:636.9px;" width="32" height="32" viewBox="0 0 16 16" fill="#c3c7cd"><path d="M16 8s-3-5.5-8-5.5S0 8 0 8s3 5.5 8 5.5S16 8 16 8zM1.173 8a13.133 13.133 0 0 1 1.66-2.043C4.12 4.668 5.88 3.5 8 3.5c2.12 0 3.879 1.168 5.168 2.457A13.133 13.133 0 0 1 14.828 8c-.058.087-.122.183-.195.288-.335.48-.83 1.12-1.465 1.755C11.879 11.332 10.119 12.5 8 12.5c-2.12 0-3.879-1.168-5.168-2.457A13.134 13.134 0 0 1 1.172 8z"/><path d="M8 5.5a2.5 2.5 0 1 0 0 5 2.5 2.5 0 0 0 0-5zM4.5 8a3.5 3.5 0 1 1 7 0 3.5 3.5 0 0 1-7 0z"/></svg><svg style="position:absolute;left:261.9px;top:638.9px;" width="28" height="28" viewBox="0 0 16 16" fill="#c3c7cd"><path d="M.5 9.9a.5.5 0 0 1 .5.5v2.5a1 1 0 0 0 1 1h12a1 1 0 0 0 1-1v-2.5a.5.5 0 0 1 1 0v2.5a2 2 0 0 1-2 2H2a2 2 0 0 1-2-2v-2.5a.5.5 0 0 1 .5-.5z"/><path d="M7.646 11.854a.5.5 0 0 0 .708 0l3-3a.5.5 0 0 0-.708-.708L8.500 10.293V1.5a.5.5 0 0 0-1 0v8.793L5.354 8.146a.5.5 0 1 0-.708.708l3 3z"/></svg></div><div style="position:absolute;left:1849.71px;top:756px;width:344.57px;height:698.3px;background:#1c1c1f;border-radius:9px;overflow:hidden"><div class="th" style="left:0;top:0;width:344.57px;height:350px"><div class="pgc" style="width:612px;height:640px;transform:scale(0.5629)"><div style="position:absolute;left:0;top:73.7px;width:612px;text-align:center;font-weight:bold;font-size:14.4px;line-height:16px;color:#f4f4f4">Adobe Acrobat PDF Files</div><div style="position:absolute;left:91.1px;top:105.2px;width:429.4px;font-family:'Liberation Serif',serif;font-size:12px;line-height:14.42px;white-space:nowrap;text-align:justify;text-align-last:justify;">Adobe® Portable Document Format (PDF) is a universal file format that preserves all</div><div style="position:absolute;left:91.1px;top:119.7px;width:429.4px;font-family:'Liberation Serif',serif;font-size:12px;line-height:14.42px;white-space:nowrap;text-align:justify;text-align-last:justify;">of the fonts, formatting, colours and graphics of any source document, regardless of</div><div style="position:absolute;left:91.1px;top:134.1px;width:429.4px;font-family:'Liberation Serif',serif;font-size:12px;line-height:14.42px;white-space:nowrap;">the application and platform used to create it.</div><div style="position:absolute;left:91.1px;top:162.9px;width:429.4px;font-family:'Liberation Serif',serif;font-size:12px;line-height:14.42px;white-space:nowrap;text-align:justify;text-align-last:justify;">Adobe PDF is an ideal format for electronic document distribution as it overcomes the</div><div style="position:absolute;left:91.1px;top:177.3px;width:429.4px;font-family:'Liberation Serif',serif;font-size:12px;line-height:14.42px;white-space:nowrap;">problems commonly encountered with electronic file sharing.</div><div style="position:absolute;left:110.3px;top:206.2px;width:410.2px;font-family:'Liberation Serif',serif;font-size:12px;line-height:14.42px;white-space:nowrap;text-align:justify;text-align-last:justify;"><b><i>Anyone, anywhere</i></b> can open a PDF file. All you need is the free Adobe Acrobat</div><div style="position:absolute;left:92.1px;top:211.8px;width:3.6px;height:3.6px;border-radius:50%;background:#ddd"></div><div style="position:absolute;left:110.3px;top:220.6px;width:410.2px;font-family:'Liberation Serif',serif;font-size:12px;line-height:14.42px;white-space:nowrap;text-align:justify;text-align-last:justify;">Reader. Recipients of other file formats sometimes can't open files because they</div><div style="position:absolute;left:110.3px;top:235.0px;width:410.2px;font-family:'Liberation Serif',serif;font-size:12px;line-height:14.42px;white-space:nowrap;">don't have the applications used to create the documents.</div><div style="position:absolute;left:110.3px;top:263.8px;width:410.2px;font-family:'Liberation Serif',serif;font-size:12px;line-height:14.42px;white-space:nowrap;">PDF files <b><i>always print correctly</i></b> on any printing device.</div><div style="position:absolute;left:92.1px;top:269.4px;width:3.6px;height:3.6px;border-radius:50%;background:#ddd"></div><div style="position:absolute;left:110.3px;top:292.7px;width:410.2px;font-family:'Liberation Serif',serif;font-size:12px;line-height:14.42px;white-space:nowrap;text-align:justify;text-align-last:justify;">PDF files always display <b><i>exactly</i></b> as created, regardless of fonts, software, and</div><div style="position:absolute;left:92.1px;top:298.3px;width:3.6px;height:3.6px;border-radius:50%;background:#ddd"></div><div style="position:absolute;left:110.3px;top:307.1px;width:410.2px;font-family:'Liberation Serif',serif;font-size:12px;line-height:14.42px;white-space:nowrap;text-align:justify;text-align-last:justify;">operating systems. Fonts, and graphics are not lost due to platform, software, and</div><div style="position:absolute;left:110.3px;top:321.5px;width:410.2px;font-family:'Liberation Serif',serif;font-size:12px;line-height:14.42px;white-space:nowrap;">version incompatibilities.</div><div style="position:absolute;left:110.3px;top:350.3px;width:410.2px;font-family:'Liberation Serif',serif;font-size:12px;line-height:14.42px;white-space:nowrap;text-align:justify;text-align-last:justify;">The free Acrobat Reader is easy to download and can be freely distributed by</div><div style="position:absolute;left:92.1px;top:355.9px;width:3.6px;height:3.6px;border-radius:50%;background:#ddd"></div><div style="position:absolute;left:110.3px;top:364.7px;width:410.2px;font-family:'Liberation Serif',serif;font-size:12px;line-height:14.42px;white-space:nowrap;">anyone.</div><div style="position:absolute;left:110.3px;top:393.6px;width:410.2px;font-family:'Liberation Serif',serif;font-size:12px;line-height:14.42px;white-space:nowrap;text-align:justify;text-align-last:justify;">Compact PDF files are smaller than their source files and download a</div><div style="position:absolute;left:92.1px;top:399.2px;width:3.6px;height:3.6px;border-radius:50%;background:#ddd"></div><div style="position:absolute;left:110.3px;top:408.0px;width:410.2px;font-family:'Liberation Serif',serif;font-size:12px;line-height:14.42px;white-space:nowrap;">page at a time for fast display on the Web.</div></div></div><div style="position:absolute;left:228.47px;top:7.2px;width:108.00px;height:45.8px;border-radius:7px;background:#8fb572;color:#000;font-weight:bold;font-size:27.5px;line-height:45.8px;text-align:center;letter-spacing:0.163px;white-space:nowrap;text-indent:0.163px"><span style="position:relative;top:.6px">Tag 3</span></div><div style="position:absolute;left:16px;top:370.30px;font-size:24.5px;line-height:31px;white-space:nowrap;color:#abb2bf"><span style="font-weight:bold;color:#48a03c;text-decoration:underline;text-decoration-thickness:2px;text-underline-offset:3.5px;letter-spacing:1.018px">Correspondent 2</span><span style="letter-spacing:1.611px">: pdf-</span></div><div style="position:absolute;left:16px;top:407.10px;font-size:24.5px;line-height:31px;white-space:nowrap;color:#abb2bf"><span style="letter-spacing:0.716px">sample 10.24.48 PM</span></div><div style="position:absolute;left:0;top:504.4px;width:344.57px;height:193.9px;background:rgba(0,0,0,.035);border-top:2px solid rgba(255,255,255,.022)"></div><svg style="position:absolute;left:17.3px;top:525.9px;" width="25.2" height="25.2" viewBox="0 0 16 16" fill="#6d7783"><path d="M14 4.5V14a2 2 0 0 1-2 2H4a2 2 0 0 1-2-2V2a2 2 0 0 1 2-2h5.5L14 4.5zm-3 0A1.5 1.5 0 0 1 9.5 3V1H4a1 1 0 0 0-1 1v12a1 1 0 0 0 1 1h8a1 1 0 0 0 1-1V4.5h-2z"/></svg><div style="position:absolute;left:59.6px;top:522.00px;font-size:24.5px;line-height:31px;white-space:nowrap;color:#abb2bf;letter-spacing:0.466px">Tax Filing</div><svg style="position:absolute;left:17.3px;top:572.8px;" width="25.2" height="25.2" viewBox="0 0 16 16" fill="#6d7783"><path d="M11 6.5a.5.5 0 0 1 .5-.5h1a.5.5 0 0 1 .5.5v1a.5.5 0 0 1-.5.5h-1a.5.5 0 0 1-.5-.5v-1z"/><path d="M3.5 0a.5.5 0 0 1 .5.5V1h8V.5a.5.5 0 0 1 1 0V1h1a2 2 0 0 1 2 2v11a2 2 0 0 1-2 2H2a2 2 0 0 1-2-2V3a2 2 0 0 1 2-2h1V.5a.5.5 0 0 1 .5-.5zM1 4v10a1 1 0 0 0 1 1h12a1 1 0 0 0 1-1V4H1z"/></svg><div style="position:absolute;left:59.6px;top:568.90px;font-size:24.5px;line-height:31px;white-space:nowrap;color:#abb2bf;letter-spacing:0.547px">Dec 27, 2020</div><div style="position:absolute;left:16.3px;top:624.4px;width:311.6px;height:56.5px;box-sizing:border-box;border:2px solid #67758b;border-radius:8px"></div><div style="position:absolute;left:117.9px;top:624.4px;width:2.4px;height:56.5px;background:#67758b"></div><div style="position:absolute;left:223.8px;top:624.4px;width:2.4px;height:56.5px;background:#67758b"></div><svg style="position:absolute;left:53.7px;top:638.9px;" width="28" height="28" viewBox="0 0 16 16" fill="#c3c7cd"><path d="M12.146.146a.5.5 0 0 1 .708 0l3 3a.5.5 0 0 1 0 .708l-10 10a.5.5 0 0 1-.168.11l-5 2a.5.5 0 0 1-.65-.65l2-5a.5.5 0 0 1 .11-.168l10-10zM11.207 2.5 13.5 4.793 14.793 3.5 12.5 1.207 11.207 2.5zm1.586 3L10.5 3.207 4 9.707V10h.5a.5.5 0 0 1 .5.5v.5h.5a.5.5 0 0 1 .5.5v.5h.293l6.5-6.5zm-9.761 5.175-.106.106-1.528 3.821 3.821-1.528.106-.106A.5.5 0 0 1 5 12.5V12h-.5a.5.5 0 0 1-.5-.5V11h-.5a.5.5 0 0 1-.468-.325z"/></svg><svg style="position:absolute;left:155.8px;top:636.9px;" width="32" height="32" viewBox="0 0 16 16" fill="#c3c7cd"><path d="M16 8s-3-5.5-8-5.5S0 8 0 8s3 5.5 8 5.5S16 8 16 8zM1.173 8a13.133 13.133 0 0 1 1.66-2.043C4.12 4.668 5.88 3.5 8 3.5c2.12 0 3.879 1.168 5.168 2.457A13.133 13.133 0 0 1 14.828 8c-.058.087-.122.183-.195.288-.335.48-.83 1.12-1.465 1.755C11.879 11.332 10.119 12.5 8 12.5c-2.12 0-3.879-1.168-5.168-2.457A13.134 13.134 0 0 1 1.172 8z"/><path d="M8 5.5a2.5 2.5 0 1 0 0 5 2.5 2.5 0 0 0 0-5zM4.5 8a3.5 3.5 0 1 1 7 0 3.5 3.5 0 0 1-7 0z"/></svg><svg style="position:absolute;left:261.9px;top:638.9px;" width="28" height="28" viewBox="0 0 16 16" fill="#c3c7cd"><path d="M.5 9.9a.5.5 0 0 1 .5.5v2.5a1 1 0 0 0 1 1h12a1 1 0 0 0 1-1v-2.5a.5.5 0 0 1 1 0v2.5a2 2 0 0 1-2 2H2a2 2 0 0 1-2-2v-2.5a.5.5 0 0 1 .5-.5z"/><path d="M7.646 11.854a.5.5 0 0 0 .708 0l3-3a.5.5 0 0 0-.708-.708L8.500 10.293V1.5a.5.5 0 0 0-1 0v8.793L5.354 8.146a.5.5 0 1 0-.708.708l3 3z"/></svg></div><div style="position:absolute;left:2230.28px;top:756px;width:344.57px;height:698.3px;background:#1c1c1f;border-radius:9px;overflow:hidden"><div class="th" style="left:0;top:0;width:344.57px;height:350px"><div class="pgc" style="width:612px;height:640px;transform:scale(0.5629)"><div style="position:absolute;left:0;top:73.7px;width:612px;text-align:center;font-weight:bold;font-size:14.4px;line-height:16px;color:#f4f4f4">Adobe Acrobat PDF Files</div><div style="position:absolute;left:91.1px;top:105.2px;width:429.4px;font-family:'Liberation Serif',serif;font-size:12px;line-height:14.42px;white-space:nowrap;text-align:justify;text-align-last:justify;">Adobe® Portable Document Format (PDF) is a universal file format that preserves all</div><div style="position:absolute;left:91.1px;top:119.7px;width:429.4px;font-family:'Liberation Serif',serif;font-size:12px;line-height:14.42px;white-space:nowrap;text-align:justify;text-align-last:justify;">of the fonts, formatting, colours and graphics of any source document, regardless of</div><div style="position:absolute;left:91.1px;top:134.1px;width:429.4px;font-family:'Liberation Serif',serif;font-size:12px;line-height:14.42px;white-space:nowrap;">the application and platform used to create it.</div><div style="position:absolute;left:91.1px;top:162.9px;width:429.4px;font-family:'Liberation Serif',serif;font-size:12px;line-height:14.42px;white-space:nowrap;text-align:justify;text-align-last:justify;">Adobe PDF is an ideal format for electronic document distribution as it overcomes the</div><div style="position:absolute;left:91.1px;top:177.3px;width:429.4px;font-family:'Liberation Serif',serif;font-size:12px;line-height:14.42px;white-space:nowrap;">problems commonly encountered with electronic file sharing.</div><div style="position:absolute;left:110.3px;top:206.2px;width:410.2px;font-family:'Liberation Serif',serif;font-size:12px;line-height:14.42px;white-space:nowrap;text-align:justify;text-align-last:justify;"><b><i>Anyone, anywhere</i></b> can open a PDF file. All you need is the free Adobe Acrobat</div><div style="position:absolute;left:92.1px;top:211.8px;width:3.6px;height:3.6px;border-radius:50%;background:#ddd"></div><div style="position:absolute;left:110.3px;top:220.6px;width:410.2px;font-family:'Liberation Serif',serif;font-size:12px;line-height:14.42px;white-space:nowrap;text-align:justify;text-align-last:justify;">Reader. Recipients of other file formats sometimes can't open files because they</div><div style="position:absolute;left:110.3px;top:235.0px;width:410.2px;font-family:'Liberation Serif',serif;font-size:12px;line-height:14.42px;white-space:nowrap;">don't have the applications used to create the documents.</div><div style="position:absolute;left:110.3px;top:263.8px;width:410.2px;font-family:'Liberation Serif',serif;font-size:12px;line-height:14.42px;white-space:nowrap;">PDF files <b><i>always print correctly</i></b> on any printing device.</div><div style="position:absolute;left:92.1px;top:269.4px;width:3.6px;height:3.6px;border-radius:50%;background:#ddd"></div><div style="position:absolute;left:110.3px;top:292.7px;width:410.2px;font-family:'Liberation Serif',serif;font-size:12px;line-height:14.42px;white-space:nowrap;text-align:justify;text-align-last:justify;">PDF files always display <b><i>exactly</i></b> as created, regardless of fonts, software, and</div><div style="position:absolute;left:92.1px;top:298.3px;width:3.6px;height:3.6px;border-radius:50%;background:#ddd"></div><div style="position:absolute;left:110.3px;top:307.1px;width:410.2px;font-family:'Liberation Serif',serif;font-size:12px;line-height:14.42px;white-space:nowrap;text-align:justify;text-align-last:justify;">operating systems. Fonts, and graphics are not lost due to platform, software, and</div><div style="position:absolute;left:110.3px;top:321.5px;width:410.2px;font-family:'Liberation Serif',serif;font-size:12px;line-height:14.42px;white-space:nowrap;">version incompatibilities.</div><div style="position:absolute;left:110.3px;top:350.3px;width:410.2px;font-family:'Liberation Serif',serif;font-size:12px;line-height:14.42px;white-space:nowrap;text-align:justify;text-align-last:justify;">The free Acrobat Reader is easy to download and can be freely distributed by</div><div style="position:absolute;left:92.1px;top:355.9px;width:3.6px;height:3.6px;border-radius:50%;background:#ddd"></div><div style="position:absolute;left:110.3px;top:364.7px;width:410.2px;font-family:'Liberation Serif',serif;font-size:12px;line-height:14.42px;white-space:nowrap;">anyone.</div><div style="position:absolute;left:110.3px;top:393.6px;width:410.2px;font-family:'Liberation Serif',serif;font-size:12px;line-height:14.42px;white-space:nowrap;text-align:justify;text-align-last:justify;">Compact PDF files are smaller than their source files and download a</div><div style="position:absolute;left:92.1px;top:399.2px;width:3.6px;height:3.6px;border-radius:50%;background:#ddd"></div><div style="position:absolute;left:110.3px;top:408.0px;width:410.2px;font-family:'Liberation Serif',serif;font-size:12px;line-height:14.42px;white-space:nowrap;">page at a time for fast display on the Web.</div></div></div><div style="position:absolute;left:187.97px;top:7.2px;width:148.50px;height:45.8px;border-radius:7px;background:#cc8080;color:#000;font-weight:bold;font-size:27.5px;line-height:45.8px;text-align:center;letter-spacing:0.263px;white-space:nowrap;text-indent:0.263px"><span style="position:relative;top:.6px">Test Tag</span></div><div style="position:absolute;left:228.47px;top:61.1px;width:108.00px;height:45.8px;border-radius:7px;background:#2c7aa8;color:#000;font-weight:bold;font-size:27.5px;line-height:45.8px;text-align:center;letter-spacing:0.163px;white-space:nowrap;text-indent:0.163px"><span style="position:relative;top:.6px">Tag 2</span></div><div style="position:absolute;left:16px;top:370.30px;font-size:24.5px;line-height:31px;white-space:nowrap;color:#abb2bf"><span style="font-weight:bold;color:#48a03c;text-decoration:underline;text-decoration-thickness:2px;text-underline-offset:3.5px;letter-spacing:1.018px">Correspondent 2</span><span style="letter-spacing:1.611px">: pdf-</span></div><div style="position:absolute;left:16px;top:407.10px;font-size:24.5px;line-height:31px;white-space:nowrap;color:#abb2bf"><span style="letter-spacing:0.716px">sample 10.24.48 PM</span></div><div style="position:absolute;left:0;top:457.5px;width:344.57px;height:240.8px;background:rgba(0,0,0,.035);border-top:2px solid rgba(255,255,255,.022)"></div><svg style="position:absolute;left:17.3px;top:479.0px;" width="25.2" height="25.2" viewBox="0 0 16 16" fill="#6d7783"><path d="M14 4.5V14a2 2 0 0 1-2 2H4a2 2 0 0 1-2-2V2a2 2 0 0 1 2-2h5.5L14 4.5zm-3 0A1.5 1.5 0 0 1 9.5 3V1H4a1 1 0 0 0-1 1v12a1 1 0 0 0 1 1h8a1 1 0 0 0 1-1V4.5h-2z"/></svg><div style="position:absolute;left:59.6px;top:475.10px;font-size:24.5px;line-height:31px;white-space:nowrap;color:#abb2bf;letter-spacing:0.466px">Tax Filing</div><svg style="position:absolute;left:17.3px;top:525.9px;" width="25.2" height="25.2" viewBox="0 0 16 16" fill="#6d7783"><path d="M1.5 1a.5.5 0 0 0-.5.5v3a.5.5 0 0 1-1 0v-3A1.5 1.5 0 0 1 1.5 0h3a.5.5 0 0 1 0 1h-3zM11 .5a.5.5 0 0 1 .5-.5h3A1.5 1.5 0 0 1 16 1.5v3a.5.5 0 0 1-1 0v-3a.5.5 0 0 0-.5-.5h-3a.5.5 0 0 1-.5-.5zM.5 11a.5.5 0 0 1 .5.5v3a.5.5 0 0 0 .5.5h3a.5.5 0 0 1 0 1h-3A1.5 1.5 0 0 1 0 14.5v-3a.5.5 0 0 1 .5-.5zm15 0a.5.5 0 0 1 .5.5v3a1.5 1.5 0 0 1-1.5 1.5h-3a.5.5 0 0 1 0-1h3a.5.5 0 0 0 .5-.5v-3a.5.5 0 0 1 .5-.5zM3 4.5a.5.5 0 0 1 1 0v7a.5.5 0 0 1-1 0v-7zm2 0a.5.5 0 0 1 1 0v7a.5.5 0 0 1-1 0v-7zm2 0a.5.5 0 0 1 1 0v7a.5.5 0 0 1-1 0v-7zm2 0a.5.5 0 0 1 .5-.5h1a.5.5 0 0 1 .5.5v7a.5.5 0 0 1-.5.5h-1a.5.5 0 0 1-.5-.5v-7zm3 0a.5.5 0 0 1 1 0v7a.5.5 0 0 1-1 0v-7z"/></svg><div style="position:absolute;left:59.6px;top:522.00px;font-size:24.5px;line-height:31px;white-space:nowrap;color:#abb2bf;letter-spacing:0.605px">#112412325</div><svg style="position:absolute;left:17.3px;top:572.8px;" width="25.2" height="25.2" viewBox="0 0 16 16" fill="#6d7783"><path d="M11 6.5a.5.5 0 0 1 .5-.5h1a.5.5 0 0 1 .5.5v1a.5.5 0 0 1-.5.5h-1a.5.5 0 0 1-.5-.5v-1z"/><path d="M3.5 0a.5.5 0 0 1 .5.5V1h8V.5a.5.5 0 0 1 1 0V1h1a2 2 0 0 1 2 2v11a2 2 0 0 1-2 2H2a2 2 0 0 1-2-2V3a2 2 0 0 1 2-2h1V.5a.5.5 0 0 1 .5-.5zM1 4v10a1 1 0 0 0 1 1h12a1 1 0 0 0 1-1V4H1z"/></svg><div style="position:absolute;left:59.6px;top:568.90px;font-size:24.5px;line-height:31px;white-space:nowrap;color:#abb2bf;letter-spacing:0.547px">Dec 27, 2020</div><div style="position:absolute;left:16.3px;top:624.4px;width:311.6px;height:56.5px;box-sizing:border-box;border:2px solid #67758b;border-radius:8px"></div><div style="position:absolute;left:117.9px;top:624.4px;width:2.4px;height:56.5px;background:#67758b"></div><div style="position:absolute;left:223.8px;top:624.4px;width:2.4px;height:56.5px;background:#67758b"></div><svg style="position:absolute;left:53.7px;top:638.9000000000001px;" width="28" height="28" viewBox="0 0 16 16" fill="#c3c7cd"><path d="M12.146.146a.5.5 0 0 1 .708 0l3 3a.5.5 0 0 1 0 .708l-10 10a.5.5 0 0 1-.168.11l-5 2a.5.5 0 0 1-.65-.65l2-5a.5.5 0 0 1 .11-.168l10-10zM11.207 2.5 13.5 4.793 14.793 3.5 12.5 1.207 11.207 2.5zm1.586 3L10.5 3.207 4 9.707V10h.5a.5.5 0 0 1 .5.5v.5h.5a.5.5 0 0 1 .5.5v.5h.293l6.5-6.5zm-9.761 5.175-.106.106-1.528 3.821 3.821-1.528.106-.106A.5.5 0 0 1 5 12.5V12h-.5a.5.5 0 0 1-.5-.5V11h-.5a.5.5 0 0 1-.468-.325z"/></svg><svg style="position:absolute;left:155.8px;top:636.9000000000001px;" width="32" height="32" viewBox="0 0 16 16" fill="#c3c7cd"><path d="M16 8s-3-5.5-8-5.5S0 8 0 8s3 5.5 8 5.5S16 8 16 8zM1.173 8a13.133 13.133 0 0 1 1.66-2.043C4.12 4.668 5.88 3.5 8 3.5c2.12 0 3.879 1.168 5.168 2.457A13.133 13.133 0 0 1 14.828 8c-.058.087-.122.183-.195.288-.335.48-.83 1.12-1.465 1.755C11.879 11.332 10.119 12.5 8 12.5c-2.12 0-3.879-1.168-5.168-2.457A13.134 13.134 0 0 1 1.172 8z"/><path d="M8 5.5a2.5 2.5 0 1 0 0 5 2.5 2.5 0 0 0 0-5zM4.5 8a3.5 3.5 0 1 1 7 0 3.5 3.5 0 0 1-7 0z"/></svg><svg style="position:absolute;left:261.9px;top:638.9000000000001px;" width="28" height="28" viewBox="0 0 16 16" fill="#c3c7cd"><path d="M.5 9.9a.5.5 0 0 1 .5.5v2.5a1 1 0 0 0 1 1h12a1 1 0 0 0 1-1v-2.5a.5.5 0 0 1 1 0v2.5a2 2 0 0 1-2 2H2a2 2 0 0 1-2-2v-2.5a.5.5 0 0 1 .5-.5z"/><path d="M7.646 11.854a.5.5 0 0 0 .708 0l3-3a.5.5 0 0 0-.708-.708L8.500 10.293V1.5a.5.5 0 0 0-1 0v8.793L5.354 8.146a.5.5 0 1 0-.708.708l3 3z"/></svg></div><div style="position:absolute;left:2610.86px;top:756px;width:344.57px;height:698.3px;background:#1c1c1f;border-radius:9px;overflow:hidden"><div class="th" style="left:0;top:0;width:344.57px;height:350px"><div class="pgc" style="width:612px;height:640px;transform:scale(0.5629)"><div style="position:absolute;left:65.73103570794102px;top:44.93px;font-size:27.2px;line-height:31.28px;white-space:nowrap;font-family:'Liberation Sans',sans-serif;color:#f0f0f0;">A Simple PDF File</div><div style="position:absolute;left:71.77118493515722px;top:94.36px;font-size:10px;line-height:11.50px;white-space:nowrap;font-family:'Liberation Sans',sans-serif;">This is a small demonstration .pdf file -</div><div style="position:absolute;left:71.77118493515722px;top:117.98px;font-size:10px;line-height:11.50px;white-space:nowrap;font-family:'Liberation Sans',sans-serif;">just for use in the Virtual Mechanics tutorials. More text. And more</div><div style="position:absolute;left:71.77118493515722px;top:129.89px;font-size:10px;line-height:11.50px;white-space:nowrap;font-family:'Liberation Sans',sans-serif;">text. And more text. And more text. And more text.</div><div style="position:absolute;left:71.77118493515722px;top:154.05px;font-size:10px;line-height:11.50px;white-space:nowrap;font-family:'Liberation Sans',sans-serif;">And more text. And more text. And more text. And more text. And more</div><div style="position:absolute;left:71.77118493515722px;top:165.77px;font-size:10px;line-height:11.50px;white-space:nowrap;font-family:'Liberation Sans',sans-serif;">text. And more text. Boring, zzzzz. And more text. And more text. And</div><div style="position:absolute;left:71.77118493515722px;top:177.67px;font-size:10px;line-height:11.50px;white-space:nowrap;font-family:'Liberation Sans',sans-serif;">more text. And more text. And more text. And more text. And more text.</div><div style="position:absolute;left:71.77118493515722px;top:189.40px;font-size:10px;line-height:11.50px;white-space:nowrap;font-family:'Liberation Sans',sans-serif;">And more text. And more text.</div><div style="position:absolute;left:71.77118493515722px;top:212.49px;font-size:10px;line-height:11.50px;white-space:nowrap;font-family:'Liberation Sans',sans-serif;">And more text. And more text. And more text. And more text. And more</div><div style="position:absolute;left:71.77118493515722px;top:224.40px;font-size:10px;line-height:11.50px;white-space:nowrap;font-family:'Liberation Sans',sans-serif;">text. And more text. And more text. Even more. Continued on page 2 ...</div></div></div><div style="position:absolute;left:103.97px;top:7.2px;width:232.50px;height:45.8px;border-radius:7px;background:#302494;color:#d6d6d6;font-weight:bold;font-size:27.5px;line-height:45.8px;text-align:center;letter-spacing:0.347px;white-space:nowrap;text-indent:0.347px"><span style="position:relative;top:.6px">TagWithPartial</span></div><div style="position:absolute;left:16px;top:370.30px;font-size:24.5px;line-height:31px;white-space:nowrap;color:#abb2bf"><span style="font-weight:bold;color:#48a03c;text-decoration:underline;text-decoration-thickness:2px;text-underline-offset:3.5px;letter-spacing:1.018px">Correspondent 2</span><span style="letter-spacing:0.763px">: sample</span></div><div style="position:absolute;left:0;top:457.5px;width:344.57px;height:240.8px;background:rgba(0,0,0,.035);border-top:2px solid rgba(255,255,255,.022)"></div><svg style="position:absolute;left:17.3px;top:479.0px;" width="25.2" height="25.2" viewBox="0 0 16 16" fill="#6d7783"><path d="M14 4.5V14a2 2 0 0 1-2 2H4a2 2 0 0 1-2-2V2a2 2 0 0 1 2-2h5.5L14 4.5zm-3 0A1.5 1.5 0 0 1 9.5 3V1H4a1 1 0 0 0-1 1v12a1 1 0 0 0 1 1h8a1 1 0 0 0 1-1V4.5h-2z"/></svg><div style="position:absolute;left:59.6px;top:475.10px;font-size:24.5px;line-height:31px;white-space:nowrap;color:#abb2bf;letter-spacing:0.353px">Invoice</div><svg style="position:absolute;left:17.3px;top:525.9px;" width="25.2" height="25.2" viewBox="0 0 16 16" fill="#6d7783"><path d="M1.5 1a.5.5 0 0 0-.5.5v3a.5.5 0 0 1-1 0v-3A1.5 1.5 0 0 1 1.5 0h3a.5.5 0 0 1 0 1h-3zM11 .5a.5.5 0 0 1 .5-.5h3A1.5 1.5 0 0 1 16 1.5v3a.5.5 0 0 1-1 0v-3a.5.5 0 0 0-.5-.5h-3a.5.5 0 0 1-.5-.5zM.5 11a.5.5 0 0 1 .5.5v3a.5.5 0 0 0 .5.5h3a.5.5 0 0 1 0 1h-3A1.5 1.5 0 0 1 0 14.5v-3a.5.5 0 0 1 .5-.5zm15 0a.5.5 0 0 1 .5.5v3a1.5 1.5 0 0 1-1.5 1.5h-3a.5.5 0 0 1 0-1h3a.5.5 0 0 0 .5-.5v-3a.5.5 0 0 1 .5-.5zM3 4.5a.5.5 0 0 1 1 0v7a.5.5 0 0 1-1 0v-7zm2 0a.5.5 0 0 1 1 0v7a.5.5 0 0 1-1 0v-7zm2 0a.5.5 0 0 1 1 0v7a.5.5 0 0 1-1 0v-7zm2 0a.5.5 0 0 1 .5-.5h1a.5.5 0 0 1 .5.5v7a.5.5 0 0 1-.5.5h-1a.5.5 0 0 1-.5-.5v-7zm3 0a.5.5 0 0 1 1 0v7a.5.5 0 0 1-1 0v-7z"/></svg><div style="position:absolute;left:59.6px;top:522.00px;font-size:24.5px;line-height:31px;white-space:nowrap;color:#abb2bf;letter-spacing:0.597px">#1123</div><svg style="position:absolute;left:17.3px;top:572.8px;" width="25.2" height="25.2" viewBox="0 0 16 16" fill="#6d7783"><path d="M11 6.5a.5.5 0 0 1 .5-.5h1a.5.5 0 0 1 .5.5v1a.5.5 0 0 1-.5.5h-1a.5.5 0 0 1-.5-.5v-1z"/><path d="M3.5 0a.5.5 0 0 1 .5.5V1h8V.5a.5.5 0 0 1 1 0V1h1a2 2 0 0 1 2 2v11a2 2 0 0 1-2 2H2a2 2 0 0 1-2-2V3a2 2 0 0 1 2-2h1V.5a.5.5 0 0 1 .5-.5zM1 4v10a1 1 0 0 0 1 1h12a1 1 0 0 0 1-1V4H1z"/></svg><div style="position:absolute;left:59.6px;top:568.90px;font-size:24.5px;line-height:31px;white-space:nowrap;color:#abb2bf;letter-spacing:0.531px">Jan 20, 2021</div><div style="position:absolute;left:16.3px;top:624.4px;width:311.6px;height:56.5px;box-sizing:border-box;border:2px solid #67758b;border-radius:8px"></div><div style="position:absolute;left:117.9px;top:624.4px;width:2.4px;height:56.5px;background:#67758b"></div><div style="position:absolute;left:223.8px;top:624.4px;width:2.4px;height:56.5px;background:#67758b"></div><svg style="position:absolute;left:53.7px;top:638.9000000000001px;" width="28" height="28" viewBox="0 0 16 16" fill="#c3c7cd"><path d="M12.146.146a.5.5 0 0 1 .708 0l3 3a.5.5 0 0 1 0 .708l-10 10a.5.5 0 0 1-.168.11l-5 2a.5.5 0 0 1-.65-.65l2-5a.5.5 0 0 1 .11-.168l10-10zM11.207 2.5 13.5 4.793 14.793 3.5 12.5 1.207 11.207 2.5zm1.586 3L10.5 3.207 4 9.707V10h.5a.5.5 0 0 1 .5.5v.5h.5a.5.5 0 0 1 .5.5v.5h.293l6.5-6.5zm-9.761 5.175-.106.106-1.528 3.821 3.821-1.528.106-.106A.5.5 0 0 1 5 12.5V12h-.5a.5.5 0 0 1-.5-.5V11h-.5a.5.5 0 0 1-.468-.325z"/></svg><svg style="position:absolute;left:155.8px;top:636.9000000000001px;" width="32" height="32" viewBox="0 0 16 16" fill="#c3c7cd"><path d="M16 8s-3-5.5-8-5.5S0 8 0 8s3 5.5 8 5.5S16 8 16 8zM1.173 8a13.133 13.133 0 0 1 1.66-2.043C4.12 4.668 5.88 3.5 8 3.5c2.12 0 3.879 1.168 5.168 2.457A13.133 13.133 0 0 1 14.828 8c-.058.087-.122.183-.195.288-.335.48-.83 1.12-1.465 1.755C11.879 11.332 10.119 12.5 8 12.5c-2.12 0-3.879-1.168-5.168-2.457A13.134 13.134 0 0 1 1.172 8z"/><path d="M8 5.5a2.5 2.5 0 1 0 0 5 2.5 2.5 0 0 0 0-5zM4.5 8a3.5 3.5 0 1 1 7 0 3.5 3.5 0 0 1-7 0z"/></svg><svg style="position:absolute;left:261.9px;top:638.9000000000001px;" width="28" height="28" viewBox="0 0 16 16" fill="#c3c7cd"><path d="M.5 9.9a.5.5 0 0 1 .5.5v2.5a1 1 0 0 0 1 1h12a1 1 0 0 0 1-1v-2.5a.5.5 0 0 1 1 0v2.5a2 2 0 0 1-2 2H2a2 2 0 0 1-2-2v-2.5a.5.5 0 0 1 .5-.5z"/><path d="M7.646 11.854a.5.5 0 0 0 .708 0l3-3a.5.5 0 0 0-.708-.708L8.500 10.293V1.5a.5.5 0 0 0-1 0v8.793L5.354 8.146a.5.5 0 1 0-.708.708l3 3z"/></svg></div><div style="position:absolute;left:2991.43px;top:756px;width:344.57px;height:698.3px;background:#1c1c1f;border-radius:9px;overflow:hidden"><div class="th" style="left:0;top:0;width:344.57px;height:350px"><div class="pgc" style="width:612px;height:640px;transform:scale(0.5629)"><div style="position:absolute;left:65.73103570794102px;top:44.93px;font-size:27.2px;line-height:31.28px;white-space:nowrap;font-family:'Liberation Sans',sans-serif;color:#f0f0f0;">A Simple PDF File</div><div style="position:absolute;left:71.77118493515722px;top:94.36px;font-size:10px;line-height:11.50px;white-space:nowrap;font-family:'Liberation Sans',sans-serif;">This is a small demonstration .pdf file -</div><div style="position:absolute;left:71.77118493515722px;top:117.98px;font-size:10px;line-height:11.50px;white-space:nowrap;font-family:'Liberation Sans',sans-serif;">just for use in the Virtual Mechanics tutorials. More text. And more</div><div style="position:absolute;left:71.77118493515722px;top:129.89px;font-size:10px;line-height:11.50px;white-space:nowrap;font-family:'Liberation Sans',sans-serif;">text. And more text. And more text. And more text.</div><div style="position:absolute;left:71.77118493515722px;top:154.05px;font-size:10px;line-height:11.50px;white-space:nowrap;font-family:'Liberation Sans',sans-serif;">And more text. And more text. And more text. And more text. And more</div><div style="position:absolute;left:71.77118493515722px;top:165.77px;font-size:10px;line-height:11.50px;white-space:nowrap;font-family:'Liberation Sans',sans-serif;">text. And more text. Boring, zzzzz. And more text. And more text. And</div><div style="position:absolute;left:71.77118493515722px;top:177.67px;font-size:10px;line-height:11.50px;white-space:nowrap;font-family:'Liberation Sans',sans-serif;">more text. And more text. And more text. And more text. And more text.</div><div style="position:absolute;left:71.77118493515722px;top:189.40px;font-size:10px;line-height:11.50px;white-space:nowrap;font-family:'Liberation Sans',sans-serif;">And more text. And more text.</div><div style="position:absolute;left:71.77118493515722px;top:212.49px;font-size:10px;line-height:11.50px;white-space:nowrap;font-family:'Liberation Sans',sans-serif;">And more text. And more text. And more text. And more text. And more</div><div style="position:absolute;left:71.77118493515722px;top:224.40px;font-size:10px;line-height:11.50px;white-space:nowrap;font-family:'Liberation Sans',sans-serif;">text. And more text. And more text. Even more. Continued on page 2 ...</div></div></div><div style="position:absolute;left:187.97px;top:7.2px;width:148.50px;height:45.8px;border-radius:7px;background:#cc8080;color:#000;font-weight:bold;font-size:27.5px;line-height:45.8px;text-align:center;letter-spacing:0.263px;white-space:nowrap;text-indent:0.263px"><span style="position:relative;top:.6px">Test Tag</span></div><div style="position:absolute;left:16px;top:370.30px;font-size:24.5px;line-height:31px;white-space:nowrap;color:#abb2bf"><span style="font-weight:bold;color:#48a03c;text-decoration:underline;text-decoration-thickness:2px;text-underline-offset:3.5px;letter-spacing:1.018px">Correspondent 2</span><span style="letter-spacing:0.763px">: sample</span></div><div style="position:absolute;left:0;top:504.4px;width:344.57px;height:193.9px;background:rgba(0,0,0,.035);border-top:2px solid rgba(255,255,255,.022)"></div><svg style="position:absolute;left:17.3px;top:525.9px;" width="25.2" height="25.2" viewBox="0 0 16 16" fill="#6d7783"><path d="M14 4.5V14a2 2 0 0 1-2 2H4a2 2 0 0 1-2-2V2a2 2 0 0 1 2-2h5.5L14 4.5zm-3 0A1.5 1.5 0 0 1 9.5 3V1H4a1 1 0 0 0-1 1v12a1 1 0 0 0 1 1h8a1 1 0 0 0 1-1V4.5h-2z"/></svg><div style="position:absolute;left:59.6px;top:522.00px;font-size:24.5px;line-height:31px;white-space:nowrap;color:#abb2bf;letter-spacing:0.353px">Invoice</div><svg style="position:absolute;left:17.3px;top:572.8px;" width="25.2" height="25.2" viewBox="0 0 16 16" fill="#6d7783"><path d="M11 6.5a.5.5 0 0 1 .5-.5h1a.5.5 0 0 1 .5.5v1a.5.5 0 0 1-.5.5h-1a.5.5 0 0 1-.5-.5v-1z"/><path d="M3.5 0a.5.5 0 0 1 .5.5V1h8V.5a.5.5 0 0 1 1 0V1h1a2 2 0 0 1 2 2v11a2 2 0 0 1-2 2H2a2 2 0 0 1-2-2V3a2 2 0 0 1 2-2h1V.5a.5.5 0 0 1 .5-.5zM1 4v10a1 1 0 0 0 1 1h12a1 1 0 0 0 1-1V4H1z"/></svg><div style="position:absolute;left:59.6px;top:568.90px;font-size:24.5px;line-height:31px;white-space:nowrap;color:#abb2bf;letter-spacing:0.531px">Jan 20, 2021</div><div style="position:absolute;left:16.3px;top:624.4px;width:311.6px;height:56.5px;box-sizing:border-box;border:2px solid #67758b;border-radius:8px"></div><div style="position:absolute;left:117.9px;top:624.4px;width:2.4px;height:56.5px;background:#67758b"></div><div style="position:absolute;left:223.8px;top:624.4px;width:2.4px;height:56.5px;background:#67758b"></div><svg style="position:absolute;left:53.7px;top:638.9px;" width="28" height="28" viewBox="0 0 16 16" fill="#c3c7cd"><path d="M12.146.146a.5.5 0 0 1 .708 0l3 3a.5.5 0 0 1 0 .708l-10 10a.5.5 0 0 1-.168.11l-5 2a.5.5 0 0 1-.65-.65l2-5a.5.5 0 0 1 .11-.168l10-10zM11.207 2.5 13.5 4.793 14.793 3.5 12.5 1.207 11.207 2.5zm1.586 3L10.5 3.207 4 9.707V10h.5a.5.5 0 0 1 .5.5v.5h.5a.5.5 0 0 1 .5.5v.5h.293l6.5-6.5zm-9.761 5.175-.106.106-1.528 3.821 3.821-1.528.106-.106A.5.5 0 0 1 5 12.5V12h-.5a.5.5 0 0 1-.5-.5V11h-.5a.5.5 0 0 1-.468-.325z"/></svg><svg style="position:absolute;left:155.8px;top:636.9px;" width="32" height="32" viewBox="0 0 16 16" fill="#c3c7cd"><path d="M16 8s-3-5.5-8-5.5S0 8 0 8s3 5.5 8 5.5S16 8 16 8zM1.173 8a13.133 13.133 0 0 1 1.66-2.043C4.12 4.668 5.88 3.5 8 3.5c2.12 0 3.879 1.168 5.168 2.457A13.133 13.133 0 0 1 14.828 8c-.058.087-.122.183-.195.288-.335.48-.83 1.12-1.465 1.755C11.879 11.332 10.119 12.5 8 12.5c-2.12 0-3.879-1.168-5.168-2.457A13.134 13.134 0 0 1 1.172 8z"/><path d="M8 5.5a2.5 2.5 0 1 0 0 5 2.5 2.5 0 0 0 0-5zM4.5 8a3.5 3.5 0 1 1 7 0 3.5 3.5 0 0 1-7 0z"/></svg><svg style="position:absolute;left:261.9px;top:638.9px;" width="28" height="28" viewBox="0 0 16 16" fill="#c3c7cd"><path d="M.5 9.9a.5.5 0 0 1 .5.5v2.5a1 1 0 0 0 1 1h12a1 1 0 0 0 1-1v-2.5a.5.5 0 0 1 1 0v2.5a2 2 0 0 1-2 2H2a2 2 0 0 1-2-2v-2.5a.5.5 0 0 1 .5-.5z"/><path d="M7.646 11.854a.5.5 0 0 0 .708 0l3-3a.5.5 0 0 0-.708-.708L8.500 10.293V1.5a.5.5 0 0 0-1 0v8.793L5.354 8.146a.5.5 0 1 0-.708.708l3 3z"/></svg></div><div style="position:absolute;left:708.00px;top:1489px;width:344.57px;height:651.4px;background:#1c1c1f;border-radius:9px;overflow:hidden"><div class="th" style="left:0;top:0;width:344.57px;height:350px"><div class="pgc" style="width:612px;height:640px;transform:scale(0.5629)"><div style="position:absolute;left:65.73103570794102px;top:44.93px;font-size:27.2px;line-height:31.28px;white-space:nowrap;font-family:'Liberation Sans',sans-serif;color:#f0f0f0;">A Simple PDF File</div><div style="position:absolute;left:71.77118493515722px;top:94.36px;font-size:10px;line-height:11.50px;white-space:nowrap;font-family:'Liberation Sans',sans-serif;">This is a small demonstration .pdf file -</div><div style="position:absolute;left:71.77118493515722px;top:117.98px;font-size:10px;line-height:11.50px;white-space:nowrap;font-family:'Liberation Sans',sans-serif;">just for use in the Virtual Mechanics tutorials. More text. And more</div><div style="position:absolute;left:71.77118493515722px;top:129.89px;font-size:10px;line-height:11.50px;white-space:nowrap;font-family:'Liberation Sans',sans-serif;">text. And more text. And more text. And more text.</div><div style="position:absolute;left:71.77118493515722px;top:154.05px;font-size:10px;line-height:11.50px;white-space:nowrap;font-family:'Liberation Sans',sans-serif;">And more text. And more text. And more text. And more text. And more</div><div style="position:absolute;left:71.77118493515722px;top:165.77px;font-size:10px;line-height:11.50px;white-space:nowrap;font-family:'Liberation Sans',sans-serif;">text. And more text. Boring, zzzzz. And more text. And more text. And</div><div style="position:absolute;left:71.77118493515722px;top:177.67px;font-size:10px;line-height:11.50px;white-space:nowrap;font-family:'Liberation Sans',sans-serif;">more text. And more text. And more text. And more text. And more text.</div><div style="position:absolute;left:71.77118493515722px;top:189.40px;font-size:10px;line-height:11.50px;white-space:nowrap;font-family:'Liberation Sans',sans-serif;">And more text. And more text.</div><div style="position:absolute;left:71.77118493515722px;top:212.49px;font-size:10px;line-height:11.50px;white-space:nowrap;font-family:'Liberation Sans',sans-serif;">And more text. And more text. And more text. And more text. And more</div><div style="position:absolute;left:71.77118493515722px;top:224.40px;font-size:10px;line-height:11.50px;white-space:nowrap;font-family:'Liberation Sans',sans-serif;">text. And more text. And more text. Even more. Continued on page 2 ...</div></div></div><div style="position:absolute;left:187.97px;top:7.2px;width:148.50px;height:45.8px;border-radius:7px;background:#cc8080;color:#000;font-weight:bold;font-size:27.5px;line-height:45.8px;text-align:center;letter-spacing:0.263px;white-space:nowrap;text-indent:0.263px"><span style="position:relative;top:.6px">Test Tag</span></div><div style="position:absolute;left:16px;top:370.30px;font-size:24.5px;line-height:31px;white-space:nowrap;color:#abb2bf"><span style="font-weight:bold;color:#48a03c;text-decoration:underline;text-decoration-thickness:2px;text-underline-offset:3.5px;letter-spacing:1.018px">Correspondent 2</span><span style="letter-spacing:0.194px">:</span></div><div style="position:absolute;left:16px;top:407.10px;font-size:24.5px;line-height:31px;white-space:nowrap;color:#abb2bf"><span style="letter-spacing:0.670px">asample</span></div><div style="position:absolute;left:0;top:458.3px;width:344.57px;height:193.1px;background:rgba(0,0,0,.035);border-top:2px solid rgba(255,255,255,.022)"></div><svg style="position:absolute;left:17.3px;top:479.8px;" width="25.2" height="25.2" viewBox="0 0 16 16" fill="#6d7783"><path d="M14 4.5V14a2 2 0 0 1-2 2H4a2 2 0 0 1-2-2V2a2 2 0 0 1 2-2h5.5L14 4.5zm-3 0A1.5 1.5 0 0 1 9.5 3V1H4a1 1 0 0 0-1 1v12a1 1 0 0 0 1 1h8a1 1 0 0 0 1-1V4.5h-2z"/></svg><div style="position:absolute;left:59.6px;top:475.90px;font-size:24.5px;line-height:31px;white-space:nowrap;color:#abb2bf;letter-spacing:0.353px">Invoice</div><svg style="position:absolute;left:17.3px;top:526.7px;" width="25.2" height="25.2" viewBox="0 0 16 16" fill="#6d7783"><path d="M11 6.5a.5.5 0 0 1 .5-.5h1a.5.5 0 0 1 .5.5v1a.5.5 0 0 1-.5.5h-1a.5.5 0 0 1-.5-.5v-1z"/><path d="M3.5 0a.5.5 0 0 1 .5.5V1h8V.5a.5.5 0 0 1 1 0V1h1a2 2 0 0 1 2 2v11a2 2 0 0 1-2 2H2a2 2 0 0 1-2-2V3a2 2 0 0 1 2-2h1V.5a.5.5 0 0 1 .5-.5zM1 4v10a1 1 0 0 0 1 1h12a1 1 0 0 0 1-1V4H1z"/></svg><div style="position:absolute;left:59.6px;top:522.80px;font-size:24.5px;line-height:31px;white-space:nowrap;color:#abb2bf;letter-spacing:0.531px">Jan 20, 2021</div><div style="position:absolute;left:16.3px;top:578.3px;width:311.6px;height:56.5px;box-sizing:border-box;border:2px solid #67758b;border-radius:8px"></div><div style="position:absolute;left:117.9px;top:578.3px;width:2.4px;height:56.5px;background:#67758b"></div><div style="position:absolute;left:223.8px;top:578.3px;width:2.4px;height:56.5px;background:#67758b"></div><svg style="position:absolute;left:53.7px;top:592.8000000000001px;" width="28" height="28" viewBox="0 0 16 16" fill="#c3c7cd"><path d="M12.146.146a.5.5 0 0 1 .708 0l3 3a.5.5 0 0 1 0 .708l-10 10a.5.5 0 0 1-.168.11l-5 2a.5.5 0 0 1-.65-.65l2-5a.5.5 0 0 1 .11-.168l10-10zM11.207 2.5 13.5 4.793 14.793 3.5 12.5 1.207 11.207 2.5zm1.586 3L10.5 3.207 4 9.707V10h.5a.5.5 0 0 1 .5.5v.5h.5a.5.5 0 0 1 .5.5v.5h.293l6.5-6.5zm-9.761 5.175-.106.106-1.528 3.821 3.821-1.528.106-.106A.5.5 0 0 1 5 12.5V12h-.5a.5.5 0 0 1-.5-.5V11h-.5a.5.5 0 0 1-.468-.325z"/></svg><svg style="position:absolute;left:155.8px;top:590.8000000000001px;" width="32" height="32" viewBox="0 0 16 16" fill="#c3c7cd"><path d="M16 8s-3-5.5-8-5.5S0 8 0 8s3 5.5 8 5.5S16 8 16 8zM1.173 8a13.133 13.133 0 0 1 1.66-2.043C4.12 4.668 5.88 3.5 8 3.5c2.12 0 3.879 1.168 5.168 2.457A13.133 13.133 0 0 1 14.828 8c-.058.087-.122.183-.195.288-.335.48-.83 1.12-1.465 1.755C11.879 11.332 10.119 12.5 8 12.5c-2.12 0-3.879-1.168-5.168-2.457A13.134 13.134 0 0 1 1.172 8z"/><path d="M8 5.5a2.5 2.5 0 1 0 0 5 2.5 2.5 0 0 0 0-5zM4.5 8a3.5 3.5 0 1 1 7 0 3.5 3.5 0 0 1-7 0z"/></svg><svg style="position:absolute;left:261.9px;top:592.8000000000001px;" width="28" height="28" viewBox="0 0 16 16" fill="#c3c7cd"><path d="M.5 9.9a.5.5 0 0 1 .5.5v2.5a1 1 0 0 0 1 1h12a1 1 0 0 0 1-1v-2.5a.5.5 0 0 1 1 0v2.5a2 2 0 0 1-2 2H2a2 2 0 0 1-2-2v-2.5a.5.5 0 0 1 .5-.5z"/><path d="M7.646 11.854a.5.5 0 0 0 .708 0l3-3a.5.5 0 0 0-.708-.708L8.500 10.293V1.5a.5.5 0 0 0-1 0v8.793L5.354 8.146a.5.5 0 1 0-.708.708l3 3z"/></svg></div><div style="position:absolute;left:1088.57px;top:1489px;width:344.57px;height:651.4px;background:#1c1c1f;border-radius:9px;overflow:hidden"><div class="th" style="left:0;top:0;width:344.57px;height:350px"><div class="pgc" style="width:612px;height:640px;transform:scale(0.5629)"><div style="position:absolute;left:70.5px;top:71.9px;width:469.5px;font-size:10.6px;line-height:12.08px;text-align:justify"><b>Lorem Ipsum</b> is simply dummy text of the printing and typesetting industry. Lorem Ipsum has been the industry's standard dummy text ever since the 1500s, when an unknown printer took a galley of type and scrambled it to make a type specimen book. It has survived not only five centuries, but also the leap into electronic typesetting, remaining essentially unchanged. It was popularised in the 1960s with the release of Letraset sheets containing Lorem Ipsum passages, and more recently with desktop publishing software like Aldus PageMaker including versions of Lorem Ipsum.</div><div style="position:absolute;left:70.5px;top:169.7px;width:469.5px;font-size:10.6px;line-height:12.08px;text-align:justify"><b>Lorem Ipsum</b> is simply dummy text of the printing and typesetting industry. Lorem Ipsum has been the industry's standard dummy text ever since the 1500s, when an unknown printer took a galley of type and scrambled it to make a type specimen book. It has survived not only five centuries, but also the leap into electronic typesetting, remaining essentially unchanged. It was popularised in the 1960s with the release of Letraset sheets containing Lorem Ipsum passages, and more recently with desktop publishing software like Aldus PageMaker including versions of Lorem Ipsum.</div><div style="position:absolute;left:70.5px;top:267.5px;width:469.5px;font-size:10.6px;line-height:12.08px;text-align:justify"><b>Lorem Ipsum</b> is simply dummy text of the printing and typesetting industry. Lorem Ipsum has been the industry's standard dummy text ever since the 1500s, when an unknown printer took a galley of type and scrambled it to make a type specimen book. It has survived not only five centuries, but also the leap into electronic typesetting, remaining essentially unchanged. It was popularised in the 1960s with the release of Letraset sheets containing Lorem Ipsum passages, and more recently with desktop publishing software like Aldus PageMaker including versions of Lorem Ipsum.</div><div style="position:absolute;left:70.5px;top:365.3px;width:469.5px;font-size:10.6px;line-height:12.08px;text-align:justify"><b>Lorem Ipsum</b> is simply dummy text of the printing and typesetting industry. Lorem Ipsum has been the industry's standard dummy text ever since the 1500s, when an unknown printer took a galley of type and scrambled it to make a type specimen book. It has survived not only five centuries, but also the leap into electronic typesetting, remaining essentially unchanged. It was popularised in the 1960s with the release of Letraset sheets containing Lorem Ipsum passages, and more recently with desktop publishing software like Aldus PageMaker including versions of Lorem Ipsum.</div><div style="position:absolute;left:70.5px;top:463.1px;width:469.5px;font-size:10.6px;line-height:12.08px;text-align:justify"><b>Lorem Ipsum</b> is simply dummy text of the printing and typesetting industry. Lorem Ipsum has been the industry's standard dummy text ever since the 1500s, when an unknown printer took a galley of type and scrambled it to make a type specimen book. It has survived not only five centuries, but also the leap into electronic typesetting, remaining essentially unchanged. It was popularised in the 1960s with the release of Letraset sheets containing Lorem Ipsum passages, and more recently with desktop publishing software like Aldus PageMaker including versions of Lorem Ipsum.</div><div style="position:absolute;left:70.5px;top:560.9px;width:469.5px;font-size:10.6px;line-height:12.08px;text-align:justify"><b>Lorem Ipsum</b> is simply dummy text of the printing and typesetting industry. Lorem Ipsum has been the industry's standard dummy text ever since the 1500s, when an unknown printer took a galley of type and scrambled it to make a type specimen book. It has survived not only five centuries, but also the leap into electronic typesetting, remaining essentially unchanged. It was popularised in the 1960s with the release of Letraset sheets containing Lorem Ipsum passages, and more recently with desktop publishing software like Aldus PageMaker including versions of Lorem Ipsum.</div></div></div><div style="position:absolute;left:187.97px;top:7.2px;width:148.50px;height:45.8px;border-radius:7px;background:#cc8080;color:#000;font-weight:bold;font-size:27.5px;line-height:45.8px;text-align:center;letter-spacing:0.263px;white-space:nowrap;text-indent:0.263px"><span style="position:relative;top:.6px">Test Tag</span></div><div style="position:absolute;left:228.47px;top:61.1px;width:108.00px;height:45.8px;border-radius:7px;background:#8fb572;color:#000;font-weight:bold;font-size:27.5px;line-height:45.8px;text-align:center;letter-spacing:0.163px;white-space:nowrap;text-indent:0.163px"><span style="position:relative;top:.6px">Tag 3</span></div><div style="position:absolute;left:16px;top:370.30px;font-size:24.5px;line-height:31px;white-space:nowrap;color:#abb2bf"><span style="font-weight:bold;color:#48a03c;text-decoration:underline;text-decoration-thickness:2px;text-underline-offset:3.5px;letter-spacing:1.035px">Test Correspondent</span><span style="letter-spacing:0.194px">:</span></div><div style="position:absolute;left:16px;top:407.10px;font-size:24.5px;line-height:31px;white-space:nowrap;color:#abb2bf"><span style="letter-spacing:1.408px">sample-pdf-file</span></div><div style="position:absolute;left:0;top:458.3px;width:344.57px;height:193.1px;background:rgba(0,0,0,.035);border-top:2px solid rgba(255,255,255,.022)"></div><svg style="position:absolute;left:17.3px;top:479.8px;" width="25.2" height="25.2" viewBox="0 0 16 16" fill="#6d7783"><path d="M14 4.5V14a2 2 0 0 1-2 2H4a2 2 0 0 1-2-2V2a2 2 0 0 1 2-2h5.5L14 4.5zm-3 0A1.5 1.5 0 0 1 9.5 3V1H4a1 1 0 0 0-1 1v12a1 1 0 0 0 1 1h8a1 1 0 0 0 1-1V4.5h-2z"/></svg><div style="position:absolute;left:59.6px;top:475.90px;font-size:24.5px;line-height:31px;white-space:nowrap;color:#abb2bf;letter-spacing:0.641px">Letter</div><svg style="position:absolute;left:17.3px;top:526.7px;" width="25.2" height="25.2" viewBox="0 0 16 16" fill="#6d7783"><path d="M11 6.5a.5.5 0 0 1 .5-.5h1a.5.5 0 0 1 .5.5v1a.5.5 0 0 1-.5.5h-1a.5.5 0 0 1-.5-.5v-1z"/><path d="M3.5 0a.5.5 0 0 1 .5.5V1h8V.5a.5.5 0 0 1 1 0V1h1a2 2 0 0 1 2 2v11a2 2 0 0 1-2 2H2a2 2 0 0 1-2-2V3a2 2 0 0 1 2-2h1V.5a.5.5 0 0 1 .5-.5zM1 4v10a1 1 0 0 0 1 1h12a1 1 0 0 0 1-1V4H1z"/></svg><div style="position:absolute;left:59.6px;top:522.80px;font-size:24.5px;line-height:31px;white-space:nowrap;color:#abb2bf;letter-spacing:0.531px">Jan 20, 2021</div><div style="position:absolute;left:16.3px;top:578.3px;width:311.6px;height:56.5px;box-sizing:border-box;border:2px solid #67758b;border-radius:8px"></div><div style="position:absolute;left:117.9px;top:578.3px;width:2.4px;height:56.5px;background:#67758b"></div><div style="position:absolute;left:223.8px;top:578.3px;width:2.4px;height:56.5px;background:#67758b"></div><svg style="position:absolute;left:53.7px;top:592.8000000000001px;" width="28" height="28" viewBox="0 0 16 16" fill="#c3c7cd"><path d="M12.146.146a.5.5 0 0 1 .708 0l3 3a.5.5 0 0 1 0 .708l-10 10a.5.5 0 0 1-.168.11l-5 2a.5.5 0 0 1-.65-.65l2-5a.5.5 0 0 1 .11-.168l10-10zM11.207 2.5 13.5 4.793 14.793 3.5 12.5 1.207 11.207 2.5zm1.586 3L10.5 3.207 4 9.707V10h.5a.5.5 0 0 1 .5.5v.5h.5a.5.5 0 0 1 .5.5v.5h.293l6.5-6.5zm-9.761 5.175-.106.106-1.528 3.821 3.821-1.528.106-.106A.5.5 0 0 1 5 12.5V12h-.5a.5.5 0 0 1-.5-.5V11h-.5a.5.5 0 0 1-.468-.325z"/></svg><svg style="position:absolute;left:155.8px;top:590.8000000000001px;" width="32" height="32" viewBox="0 0 16 16" fill="#c3c7cd"><path d="M16 8s-3-5.5-8-5.5S0 8 0 8s3 5.5 8 5.5S16 8 16 8zM1.173 8a13.133 13.133 0 0 1 1.66-2.043C4.12 4.668 5.88 3.5 8 3.5c2.12 0 3.879 1.168 5.168 2.457A13.133 13.133 0 0 1 14.828 8c-.058.087-.122.183-.195.288-.335.48-.83 1.12-1.465 1.755C11.879 11.332 10.119 12.5 8 12.5c-2.12 0-3.879-1.168-5.168-2.457A13.134 13.134 0 0 1 1.172 8z"/><path d="M8 5.5a2.5 2.5 0 1 0 0 5 2.5 2.5 0 0 0 0-5zM4.5 8a3.5 3.5 0 1 1 7 0 3.5 3.5 0 0 1-7 0z"/></svg><svg style="position:absolute;left:261.9px;top:592.8000000000001px;" width="28" height="28" viewBox="0 0 16 16" fill="#c3c7cd"><path d="M.5 9.9a.5.5 0 0 1 .5.5v2.5a1 1 0 0 0 1 1h12a1 1 0 0 0 1-1v-2.5a.5.5 0 0 1 1 0v2.5a2 2 0 0 1-2 2H2a2 2 0 0 1-2-2v-2.5a.5.5 0 0 1 .5-.5z"/><path d="M7.646 11.854a.5.5 0 0 0 .708 0l3-3a.5.5 0 0 0-.708-.708L8.500 10.293V1.5a.5.5 0 0 0-1 0v8.793L5.354 8.146a.5.5 0 1 0-.708.708l3 3z"/></svg></div><div style="position:absolute;left:1469.14px;top:1489px;width:344.57px;height:651.4px;background:#1c1c1f;border-radius:9px;overflow:hidden"><div class="th" style="left:0;top:0;width:344.57px;height:350px"><div class="pgc" style="width:612px;height:640px;transform:scale(0.5629)"><div style="position:absolute;left:73.5px;top:74.4px;width:466.9px;height:308.2px;background:#a6bba4;overflow:hidden"><svg width="100%" height="100%" viewBox="182 182 1156 766" preserveAspectRatio="none"><defs><filter id="mb" x="-10%" y="-10%" width="120%" height="120%"><feGaussianBlur stdDeviation="8"/></filter></defs><g fill="#d3e0dc" stroke="#d3e0dc" stroke-width="26" stroke-linejoin="round" opacity=".88" filter="url(#mb)"><path d="M430 400 L520 340 L640 330 L760 350 L800 420 L720 470 L640 500 L560 470 L470 480 Z"/><path d="M900 300 L1000 260 L1120 250 L1250 270 L1338 300 L1338 560 L1250 520 L1180 440 L1080 420 L960 400 Z"/><path d="M1000 520 L1100 480 L1200 520 L1338 600 L1338 700 L1220 690 L1120 640 L1040 600 Z"/><path d="M190 440 L300 420 L420 440 L400 500 L300 520 L200 500 Z"/><path d="M500 520 L600 500 L650 560 L620 640 L540 630 Z"/><path d="M560 790 L660 780 L700 830 L620 850 Z"/><path d="M780 730 L880 720 L900 770 L800 780 Z"/><path d="M950 860 L1080 850 L1100 930 L960 940 Z"/><path d="M1180 790 L1338 780 L1338 880 L1200 870 Z"/><path d="M190 860 L380 850 L400 930 L190 945 Z"/><path d="M440 195 L600 190 L590 290 L470 300 Z"/><path d="M640 600 L760 620 L740 700 L660 690 Z"/><path d="M860 560 L960 540 L980 640 L880 650 Z"/><path d="M260 620 L380 600 L400 700 L300 720 Z"/><path d="M1080 720 L1180 700 L1200 780 L1100 790 Z"/><path d="M700 200 L860 190 L850 260 L720 270 Z"/></g><g fill="#94ab92" opacity=".55" filter="url(#mb)"><path d="M820 460 L940 430 L980 520 L860 540 Z"/><path d="M300 300 L420 290 L430 370 L320 380 Z"/><path d="M1000 780 L1120 760 L1140 840 L1020 850 Z"/><path d="M460 720 L560 700 L580 780 L480 800 Z"/></g><rect x="185" y="185" width="236" height="60" fill="#2b2d2b"/><rect x="185" y="250" width="128" height="180" fill="#323532"/><text x="195" y="216" font-size="20" fill="#ddd" font-family="Liberation Sans, sans-serif">Boundary Waters Trip</text><text x="193" y="274" font-size="11" fill="#bbb" font-family="Liberation Sans, sans-serif">Legend</text><g font-size="11" fill="#999" font-family="Liberation Sans, sans-serif"><text x="222" y="296">Day 1</text><text x="222" y="316">Day 2</text><text x="222" y="336">Day 3</text><text x="222" y="356">Day 4</text><text x="222" y="376">Day 5</text><text x="222" y="396">Day 6</text><text x="222" y="416">Entry Point 24</text></g><text x="186" y="900" font-size="16" fill="#555" font-family="Liberation Sans, sans-serif">Google Earth</text><g fill="none" stroke-width="4" stroke-linejoin="round"><path d="M885 212 L940 230 L960 260 L950 300 L935 335" stroke="#2e8b2e"/><path d="M935 338 L880 360 L800 375 L770 358 L700 375 L670 372 L695 395 L690 430 L640 440 L640 480 L655 520 L650 560 L600 610 L560 635" stroke="#2f8a98"/><path d="M935 338 L1010 350 L1100 345 L1220 370 L1215 385 L1150 410 L1100 470 L1095 500 L1060 530 L1040 555 L1010 560 L985 590 L990 610 L1020 625" stroke="#e9a6f2"/><path d="M655 535 L700 515 L770 510 L820 560 L790 610 L790 660 L830 720 L900 725 L960 700 L1010 665 L1020 625" stroke="#7c9a34"/><path d="M515 575 L500 600 L460 640 L480 700 L440 760 L410 800 L405 870 L380 910" stroke="#8585a8" stroke-width="3"/><path d="M515 575 L540 630 L560 635" stroke="#c98a8a" stroke-width="3"/></g></svg></div><div style="position:absolute;left:73.5px;top:395.0px;width:466.9px;height:49.4px;overflow:hidden;font-size:10.9px;line-height:12.35px;text-align:justify">Curabitur bibendum ante urna, sed blandit libero egestas id. Pellentesque rhoncus elit in lacus ultrices fringilla. Nam ac metus eu turpis mattis rutrum. Mauris mattis sem ex, facilisis molestie sapien luctus non. Vestibulum tincidunt urna at odio suscipit, vel congue felis cursus. Etiam tellus magna, egestas ac suscipit in, laoreet quis felis. Proin non orci id dui tincidunt egestas.</div><div style="position:absolute;left:73.5px;top:456.7px;width:466.9px;height:61.7px;overflow:hidden;font-size:10.9px;line-height:12.35px;text-align:justify">Vestibulum eleifend, ligula a scelerisque vehicula, risus justo ultricies ligula, et interdum lorem ex eget ex. Duis dignissim lacus vitae velit laoreet, vitae placerat velit aliquet. Etiam eget mollis nulla, ac vehicula mi. Etiam non sollicitudin velit, imperdiet commodo mi. Fusce quis tellus tellus. Donec dictum euismod risus non tempus. Duis quis pellentesque nunc. Praesent elementum condimentum mollis.</div><div style="position:absolute;left:73.5px;top:530.8px;width:466.9px;height:111.1px;overflow:hidden;font-size:10.9px;line-height:12.35px;text-align:justify">Phasellus dapibus quam a hendrerit placerat. Sed ultrices blandit nulla sed sodales. Nunc quis volutpat eros. Etiam bibendum eu tellus consequat blandit. Curabitur lacinia cursus diam sed pharetra. Proin molestie tristique mauris ut aliquam. Donec purus odio, molestie id suscipit sit amet, porttitor in erat. Vestibulum ut tellus vel mi lobortis porta nec vel tellus. Quisque pretium blandit dignissim. Proin eu metus convallis sapien efficitur mollis. Nunc luctus ex in nunc ornare, nec blandit orci faucibus. Aenean bibendum mi vel neque euismod hendrerit. Vestibulum ac pharetra magna. Ut rutrum, orci at blandit faucibus, justo mauris iaculis mauris, ut tempor lectus dignissim. Nulla facilisi.</div></div></div><div style="position:absolute;left:228.47px;top:7.2px;width:108.00px;height:45.8px;border-radius:7px;background:#8fb572;color:#000;font-weight:bold;font-size:27.5px;line-height:45.8px;text-align:center;letter-spacing:0.163px;white-space:nowrap;text-indent:0.163px"><span style="position:relative;top:.6px">Tag 3</span></div><div style="position:absolute;left:16px;top:370.30px;font-size:24.5px;line-height:31px;white-space:nowrap;color:#abb2bf"><span style="font-weight:bold;color:#48a03c;text-decoration:underline;text-decoration-thickness:2px;text-underline-offset:3.5px;letter-spacing:1.035px">Test Correspondent</span><span style="letter-spacing:0.194px">:</span></div><div style="position:absolute;left:16px;top:407.10px;font-size:24.5px;line-height:31px;white-space:nowrap;color:#abb2bf"><span style="letter-spacing:1.447px">sample-pdf-with-images</span></div><div style="position:absolute;left:0;top:458.3px;width:344.57px;height:193.1px;background:rgba(0,0,0,.035);border-top:2px solid rgba(255,255,255,.022)"></div><svg style="position:absolute;left:17.3px;top:479.8px;" width="25.2" height="25.2" viewBox="0 0 16 16" fill="#6d7783"><path d="M1.5 1a.5.5 0 0 0-.5.5v3a.5.5 0 0 1-1 0v-3A1.5 1.5 0 0 1 1.5 0h3a.5.5 0 0 1 0 1h-3zM11 .5a.5.5 0 0 1 .5-.5h3A1.5 1.5 0 0 1 16 1.5v3a.5.5 0 0 1-1 0v-3a.5.5 0 0 0-.5-.5h-3a.5.5 0 0 1-.5-.5zM.5 11a.5.5 0 0 1 .5.5v3a.5.5 0 0 0 .5.5h3a.5.5 0 0 1 0 1h-3A1.5 1.5 0 0 1 0 14.5v-3a.5.5 0 0 1 .5-.5zm15 0a.5.5 0 0 1 .5.5v3a1.5 1.5 0 0 1-1.5 1.5h-3a.5.5 0 0 1 0-1h3a.5.5 0 0 0 .5-.5v-3a.5.5 0 0 1 .5-.5zM3 4.5a.5.5 0 0 1 1 0v7a.5.5 0 0 1-1 0v-7zm2 0a.5.5 0 0 1 1 0v7a.5.5 0 0 1-1 0v-7zm2 0a.5.5 0 0 1 1 0v7a.5.5 0 0 1-1 0v-7zm2 0a.5.5 0 0 1 .5-.5h1a.5.5 0 0 1 .5.5v7a.5.5 0 0 1-.5.5h-1a.5.5 0 0 1-.5-.5v-7zm3 0a.5.5 0 0 1 1 0v7a.5.5 0 0 1-1 0v-7z"/></svg><div style="position:absolute;left:59.6px;top:475.90px;font-size:24.5px;line-height:31px;white-space:nowrap;color:#abb2bf;letter-spacing:0.276px">#112412322</div><svg style="position:absolute;left:17.3px;top:526.7px;" width="25.2" height="25.2" viewBox="0 0 16 16" fill="#6d7783"><path d="M11 6.5a.5.5 0 0 1 .5-.5h1a.5.5 0 0 1 .5.5v1a.5.5 0 0 1-.5.5h-1a.5.5 0 0 1-.5-.5v-1z"/><path d="M3.5 0a.5.5 0 0 1 .5.5V1h8V.5a.5.5 0 0 1 1 0V1h1a2 2 0 0 1 2 2v11a2 2 0 0 1-2 2H2a2 2 0 0 1-2-2V3a2 2 0 0 1 2-2h1V.5a.5.5 0 0 1 .5-.5zM1 4v10a1 1 0 0 0 1 1h12a1 1 0 0 0 1-1V4H1z"/></svg><div style="position:absolute;left:59.6px;top:522.80px;font-size:24.5px;line-height:31px;white-space:nowrap;color:#abb2bf;letter-spacing:0.531px">Jan 20, 2021</div><div style="position:absolute;left:16.3px;top:578.3px;width:311.6px;height:56.5px;box-sizing:border-box;border:2px solid #67758b;border-radius:8px"></div><div style="position:absolute;left:117.9px;top:578.3px;width:2.4px;height:56.5px;background:#67758b"></div><div style="position:absolute;left:223.8px;top:578.3px;width:2.4px;height:56.5px;background:#67758b"></div><svg style="position:absolute;left:53.7px;top:592.8000000000001px;" width="28" height="28" viewBox="0 0 16 16" fill="#c3c7cd"><path d="M12.146.146a.5.5 0 0 1 .708 0l3 3a.5.5 0 0 1 0 .708l-10 10a.5.5 0 0 1-.168.11l-5 2a.5.5 0 0 1-.65-.65l2-5a.5.5 0 0 1 .11-.168l10-10zM11.207 2.5 13.5 4.793 14.793 3.5 12.5 1.207 11.207 2.5zm1.586 3L10.5 3.207 4 9.707V10h.5a.5.5 0 0 1 .5.5v.5h.5a.5.5 0 0 1 .5.5v.5h.293l6.5-6.5zm-9.761 5.175-.106.106-1.528 3.821 3.821-1.528.106-.106A.5.5 0 0 1 5 12.5V12h-.5a.5.5 0 0 1-.5-.5V11h-.5a.5.5 0 0 1-.468-.325z"/></svg><svg style="position:absolute;left:155.8px;top:590.8000000000001px;" width="32" height="32" viewBox="0 0 16 16" fill="#c3c7cd"><path d="M16 8s-3-5.5-8-5.5S0 8 0 8s3 5.5 8 5.5S16 8 16 8zM1.173 8a13.133 13.133 0 0 1 1.66-2.043C4.12 4.668 5.88 3.5 8 3.5c2.12 0 3.879 1.168 5.168 2.457A13.133 13.133 0 0 1 14.828 8c-.058.087-.122.183-.195.288-.335.48-.83 1.12-1.465 1.755C11.879 11.332 10.119 12.5 8 12.5c-2.12 0-3.879-1.168-5.168-2.457A13.134 13.134 0 0 1 1.172 8z"/><path d="M8 5.5a2.5 2.5 0 1 0 0 5 2.5 2.5 0 0 0 0-5zM4.5 8a3.5 3.5 0 1 1 7 0 3.5 3.5 0 0 1-7 0z"/></svg><svg style="position:absolute;left:261.9px;top:592.8000000000001px;" width="28" height="28" viewBox="0 0 16 16" fill="#c3c7cd"><path d="M.5 9.9a.5.5 0 0 1 .5.5v2.5a1 1 0 0 0 1 1h12a1 1 0 0 0 1-1v-2.5a.5.5 0 0 1 1 0v2.5a2 2 0 0 1-2 2H2a2 2 0 0 1-2-2v-2.5a.5.5 0 0 1 .5-.5z"/><path d="M7.646 11.854a.5.5 0 0 0 .708 0l3-3a.5.5 0 0 0-.708-.708L8.500 10.293V1.5a.5.5 0 0 0-1 0v8.793L5.354 8.146a.5.5 0 1 0-.708.708l3 3z"/></svg></div><div style="position:absolute;left:1849.71px;top:1489px;width:344.57px;height:651.4px;background:#1c1c1f;border-radius:9px;overflow:hidden"><div class="th" style="left:0;top:0;width:344.57px;height:350px"><div class="pgc" style="width:612px;height:640px;transform:scale(0.5629)"><div style="position:absolute;left:75.0px;top:75.1px;width:464.2px;height:49.7px;overflow:hidden;font-size:10.7px;line-height:12.44px;text-align:justify">Lorem ipsum dolor sit amet, consectetur adipiscing elit. Aenean vitae fringilla nunc. Phasellus et nulla ipsum. Vestibulum quis ex lacus. Mauris sit amet mi a lacus interdum accumsan. Aenean fermentum tempus ante sed rutrum. Aenean et magna elementum, suscipit tellus non, malesuada turpis. Ut eleifend urna eget nisl fermentum, consequat ullamcorper ex rhoncus.</div><div style="position:absolute;left:75.0px;top:136.6px;width:464.2px;height:87.0px;overflow:hidden;font-size:10.7px;line-height:12.44px;text-align:justify">In tincidunt elit id dignissim facilisis. Nunc iaculis odio nisl, sit amet sagittis turpis aliquet eu. Integer vestibulum, ipsum vel volutpat varius, augue arcu pulvinar urna, non scelerisque augue justo vel enim. Proin sodales placerat ante quis vestibulum. Suspendisse aliquet tincidunt cursus. Nam mi ex, rutrum vitae feugiat quis, ultrices vitae tellus. Vivamus viverra justo ut vulputate rhoncus. Ut eu felis quis ante efficitur varius et ac nunc. Duis ullamcorper dignissim posuere. Mauris faucibus est et egestas dignissim. Suspendisse sem lacus, condimentum in libero eget, scelerisque placerat nisl. Sed porttitor bibendum nisl.</div><div style="position:absolute;left:75.0px;top:235.1px;width:464.2px;height:74.6px;overflow:hidden;font-size:10.7px;line-height:12.44px;text-align:justify">Praesent auctor laoreet sem, non ullamcorper dolor pretium molestie. Cras condimentum magna vitae ultrices mattis. Vestibulum vel tempus est, dignissim elementum sem. Nunc eget sagittis odio. Mauris ut libero at nisi faucibus vehicula. Vestibulum vitae eleifend augue. Aliquam et consequat lacus. Phasellus dapibus nulla in gravida auctor. Mauris vitae orci nibh. Quisque sodales ultrices dictum. Praesent auctor dictum leo nec aliquet. Suspendisse potenti. Aenean in diam nisi. Quisque commodo arcu ipsum. Proin iaculis ipsum sit amet massa tempus lobortis.</div><div style="position:absolute;left:75.0px;top:321.1px;width:464.2px;height:49.7px;overflow:hidden;font-size:10.7px;line-height:12.44px;text-align:justify">Aliquam et ex interdum, rutrum neque ut, auctor elit. Nullam mauris ex, imperdiet sit amet diam imperdiet, commodo pretium dui. Donec ac ipsum urna. Pellentesque dapibus, est ut pulvinar dictum, velit nunc sollicitudin ligula, at semper eros orci non nunc. Aliquam sit amet vulputate sapien, quis tincidunt eros. Nam quis tincidunt lorem. In tempus ornare dui at porttitor.</div><div style="position:absolute;left:75.0px;top:382.6px;width:464.2px;height:49.7px;overflow:hidden;font-size:10.7px;line-height:12.44px;text-align:justify">Curabitur eu enim orci. Vestibulum consequat eros quis sollicitudin tincidunt. Sed arcu est, laoreet quis tempor et, posuere et est. Cras tincidunt lacus erat, sit amet aliquam enim consectetur nec. Aenean scelerisque rutrum elit sed lobortis. Morbi malesuada aliquam arcu, sit amet egestas neque aliquam ut. Sed dui mi, feugiat a risus sit amet, posuere placerat orci.</div><div style="position:absolute;left:75.0px;top:443.7px;width:464.2px;height:49.7px;overflow:hidden;font-size:10.7px;line-height:12.44px;text-align:justify">Nulla at consectetur nisl. Integer congue diam in magna tincidunt dictum. In hac habitasse platea dictumst. Maecenas ultricies aliquet fringilla. Pellentesque id leo semper, imperdiet ante sit amet, egestas justo. Etiam faucibus vehicula eros, a vehicula risus hendrerit bibendum. Suspendisse potenti. Sed semper mi vel ligula mollis, quis interdum augue consectetur.</div><div style="position:absolute;left:75.0px;top:505.2px;width:464.2px;height:49.7px;overflow:hidden;font-size:10.7px;line-height:12.44px;text-align:justify">Curabitur bibendum ante urna, sed blandit libero egestas id. Pellentesque rhoncus elit in lacus ultrices fringilla. Nam ac metus eu turpis mattis rutrum. Mauris mattis sem ex, facilisis molestie sapien luctus non. Vestibulum tincidunt urna at odio suscipit, vel congue felis cursus. Etiam tellus magna, egestas ac suscipit in, laoreet quis felis. Proin non orci id dui tincidunt egestas.</div><div style="position:absolute;left:75.0px;top:566.7px;width:464.2px;height:62.2px;overflow:hidden;font-size:10.7px;line-height:12.44px;text-align:justify">Vestibulum eleifend, ligula a scelerisque vehicula, risus justo ultricies ligula, et interdum lorem ex eget ex. Duis dignissim lacus vitae velit laoreet, vitae placerat velit aliquet. Etiam eget mollis nulla, ac vehicula mi. Etiam non sollicitudin velit, imperdiet commodo mi. Fusce quis tellus tellus. Donec dictum euismod risus non tempus. Duis quis pellentesque nunc. Praesent elementum condimentum mollis.</div></div></div><div style="position:absolute;left:16px;top:370.30px;font-size:24.5px;line-height:31px;white-space:nowrap;color:#abb2bf"><span style="letter-spacing:1.429px">sample-pdf-download-10-</span></div><div style="position:absolute;left:16px;top:407.10px;font-size:24.5px;line-height:31px;white-space:nowrap;color:#abb2bf"><span style="letter-spacing:0.942px">mb copy_red</span></div><div style="position:absolute;left:0;top:505.2px;width:344.57px;height:146.2px;background:rgba(0,0,0,.035);border-top:2px solid rgba(255,255,255,.022)"></div><svg style="position:absolute;left:17.3px;top:526.6999999999999px;" width="25.2" height="25.2" viewBox="0 0 16 16" fill="#6d7783"><path d="M11 6.5a.5.5 0 0 1 .5-.5h1a.5.5 0 0 1 .5.5v1a.5.5 0 0 1-.5.5h-1a.5.5 0 0 1-.5-.5v-1z"/><path d="M3.5 0a.5.5 0 0 1 .5.5V1h8V.5a.5.5 0 0 1 1 0V1h1a2 2 0 0 1 2 2v11a2 2 0 0 1-2 2H2a2 2 0 0 1-2-2V3a2 2 0 0 1 2-2h1V.5a.5.5 0 0 1 .5-.5zM1 4v10a1 1 0 0 0 1 1h12a1 1 0 0 0 1-1V4H1z"/></svg><div style="position:absolute;left:59.6px;top:522.80px;font-size:24.5px;line-height:31px;white-space:nowrap;color:#abb2bf;letter-spacing:0.531px">Jan 26, 2021</div><div style="position:absolute;left:16.3px;top:578.3px;width:311.6px;height:56.5px;box-sizing:border-box;border:2px solid #67758b;border-radius:8px"></div><div style="position:absolute;left:117.9px;top:578.3px;width:2.4px;height:56.5px;background:#67758b"></div><div style="position:absolute;left:223.8px;top:578.3px;width:2.4px;height:56.5px;background:#67758b"></div><svg style="position:absolute;left:53.7px;top:592.8000000000001px;" width="28" height="28" viewBox="0 0 16 16" fill="#c3c7cd"><path d="M12.146.146a.5.5 0 0 1 .708 0l3 3a.5.5 0 0 1 0 .708l-10 10a.5.5 0 0 1-.168.11l-5 2a.5.5 0 0 1-.65-.65l2-5a.5.5 0 0 1 .11-.168l10-10zM11.207 2.5 13.5 4.793 14.793 3.5 12.5 1.207 11.207 2.5zm1.586 3L10.5 3.207 4 9.707V10h.5a.5.5 0 0 1 .5.5v.5h.5a.5.5 0 0 1 .5.5v.5h.293l6.5-6.5zm-9.761 5.175-.106.106-1.528 3.821 3.821-1.528.106-.106A.5.5 0 0 1 5 12.5V12h-.5a.5.5 0 0 1-.5-.5V11h-.5a.5.5 0 0 1-.468-.325z"/></svg><svg style="position:absolute;left:155.8px;top:590.8000000000001px;" width="32" height="32" viewBox="0 0 16 16" fill="#c3c7cd"><path d="M16 8s-3-5.5-8-5.5S0 8 0 8s3 5.5 8 5.5S16 8 16 8zM1.173 8a13.133 13.133 0 0 1 1.66-2.043C4.12 4.668 5.88 3.5 8 3.5c2.12 0 3.879 1.168 5.168 2.457A13.133 13.133 0 0 1 14.828 8c-.058.087-.122.183-.195.288-.335.48-.83 1.12-1.465 1.755C11.879 11.332 10.119 12.5 8 12.5c-2.12 0-3.879-1.168-5.168-2.457A13.134 13.134 0 0 1 1.172 8z"/><path d="M8 5.5a2.5 2.5 0 1 0 0 5 2.5 2.5 0 0 0 0-5zM4.5 8a3.5 3.5 0 1 1 7 0 3.5 3.5 0 0 1-7 0z"/></svg><svg style="position:absolute;left:261.9px;top:592.8000000000001px;" width="28" height="28" viewBox="0 0 16 16" fill="#c3c7cd"><path d="M.5 9.9a.5.5 0 0 1 .5.5v2.5a1 1 0 0 0 1 1h12a1 1 0 0 0 1-1v-2.5a.5.5 0 0 1 1 0v2.5a2 2 0 0 1-2 2H2a2 2 0 0 1-2-2v-2.5a.5.5 0 0 1 .5-.5z"/><path d="M7.646 11.854a.5.5 0 0 0 .708 0l3-3a.5.5 0 0 0-.708-.708L8.500 10.293V1.5a.5.5 0 0 0-1 0v8.793L5.354 8.146a.5.5 0 1 0-.708.708l3 3z"/></svg></div><div style="position:absolute;left:2230.28px;top:1489px;width:344.57px;height:651.4px;background:#1c1c1f;border-radius:9px;overflow:hidden"><div class="th" style="left:0;top:0;width:344.57px;height:350px"><div class="pgc" style="width:612px;height:640px;transform:scale(0.5629)"><div style="position:absolute;left:75.0px;top:75.1px;width:464.2px;height:49.7px;overflow:hidden;font-size:10.7px;line-height:12.44px;text-align:justify">Lorem ipsum dolor sit amet, consectetur adipiscing elit. Aenean vitae fringilla nunc. Phasellus et nulla ipsum. Vestibulum quis ex lacus. Mauris sit amet mi a lacus interdum accumsan. Aenean fermentum tempus ante sed rutrum. Aenean et magna elementum, suscipit tellus non, malesuada turpis. Ut eleifend urna eget nisl fermentum, consequat ullamcorper ex rhoncus.</div><div style="position:absolute;left:75.0px;top:136.6px;width:464.2px;height:87.0px;overflow:hidden;font-size:10.7px;line-height:12.44px;text-align:justify">In tincidunt elit id dignissim facilisis. Nunc iaculis odio nisl, sit amet sagittis turpis aliquet eu. Integer vestibulum, ipsum vel volutpat varius, augue arcu pulvinar urna, non scelerisque augue justo vel enim. Proin sodales placerat ante quis vestibulum. Suspendisse aliquet tincidunt cursus. Nam mi ex, rutrum vitae feugiat quis, ultrices vitae tellus. Vivamus viverra justo ut vulputate rhoncus. Ut eu felis quis ante efficitur varius et ac nunc. Duis ullamcorper dignissim posuere. Mauris faucibus est et egestas dignissim. Suspendisse sem lacus, condimentum in libero eget, scelerisque placerat nisl. Sed porttitor bibendum nisl.</div><div style="position:absolute;left:75.0px;top:235.1px;width:464.2px;height:74.6px;overflow:hidden;font-size:10.7px;line-height:12.44px;text-align:justify">Praesent auctor laoreet sem, non ullamcorper dolor pretium molestie. Cras condimentum magna vitae ultrices mattis. Vestibulum vel tempus est, dignissim elementum sem. Nunc eget sagittis odio. Mauris ut libero at nisi faucibus vehicula. Vestibulum vitae eleifend augue. Aliquam et consequat lacus. Phasellus dapibus nulla in gravida auctor. Mauris vitae orci nibh. Quisque sodales ultrices dictum. Praesent auctor dictum leo nec aliquet. Suspendisse potenti. Aenean in diam nisi. Quisque commodo arcu ipsum. Proin iaculis ipsum sit amet massa tempus lobortis.</div><div style="position:absolute;left:75.0px;top:321.1px;width:464.2px;height:49.7px;overflow:hidden;font-size:10.7px;line-height:12.44px;text-align:justify">Aliquam et ex interdum, rutrum neque ut, auctor elit. Nullam mauris ex, imperdiet sit amet diam imperdiet, commodo pretium dui. Donec ac ipsum urna. Pellentesque dapibus, est ut pulvinar dictum, velit nunc sollicitudin ligula, at semper eros orci non nunc. Aliquam sit amet vulputate sapien, quis tincidunt eros. Nam quis tincidunt lorem. In tempus ornare dui at porttitor.</div><div style="position:absolute;left:75.0px;top:382.6px;width:464.2px;height:49.7px;overflow:hidden;font-size:10.7px;line-height:12.44px;text-align:justify">Curabitur eu enim orci. Vestibulum consequat eros quis sollicitudin tincidunt. Sed arcu est, laoreet quis tempor et, posuere et est. Cras tincidunt lacus erat, sit amet aliquam enim consectetur nec. Aenean scelerisque rutrum elit sed lobortis. Morbi malesuada aliquam arcu, sit amet egestas neque aliquam ut. Sed dui mi, feugiat a risus sit amet, posuere placerat orci.</div><div style="position:absolute;left:75.0px;top:443.7px;width:464.2px;height:49.7px;overflow:hidden;font-size:10.7px;line-height:12.44px;text-align:justify">Nulla at consectetur nisl. Integer congue diam in magna tincidunt dictum. In hac habitasse platea dictumst. Maecenas ultricies aliquet fringilla. Pellentesque id leo semper, imperdiet ante sit amet, egestas justo. Etiam faucibus vehicula eros, a vehicula risus hendrerit bibendum. Suspendisse potenti. Sed semper mi vel ligula mollis, quis interdum augue consectetur.</div><div style="position:absolute;left:75.0px;top:505.2px;width:464.2px;height:49.7px;overflow:hidden;font-size:10.7px;line-height:12.44px;text-align:justify">Curabitur bibendum ante urna, sed blandit libero egestas id. Pellentesque rhoncus elit in lacus ultrices fringilla. Nam ac metus eu turpis mattis rutrum. Mauris mattis sem ex, facilisis molestie sapien luctus non. Vestibulum tincidunt urna at odio suscipit, vel congue felis cursus. Etiam tellus magna, egestas ac suscipit in, laoreet quis felis. Proin non orci id dui tincidunt egestas.</div><div style="position:absolute;left:75.0px;top:566.7px;width:464.2px;height:62.2px;overflow:hidden;font-size:10.7px;line-height:12.44px;text-align:justify">Vestibulum eleifend, ligula a scelerisque vehicula, risus justo ultricies ligula, et interdum lorem ex eget ex. Duis dignissim lacus vitae velit laoreet, vitae placerat velit aliquet. Etiam eget mollis nulla, ac vehicula mi. Etiam non sollicitudin velit, imperdiet commodo mi. Fusce quis tellus tellus. Donec dictum euismod risus non tempus. Duis quis pellentesque nunc. Praesent elementum condimentum mollis.</div></div></div><div style="position:absolute;left:103.97px;top:7.2px;width:232.50px;height:45.8px;border-radius:7px;background:#302494;color:#d6d6d6;font-weight:bold;font-size:27.5px;line-height:45.8px;text-align:center;letter-spacing:0.347px;white-space:nowrap;text-indent:0.347px"><span style="position:relative;top:.6px">TagWithPartial</span></div><div style="position:absolute;left:16px;top:370.30px;font-size:24.5px;line-height:31px;white-space:nowrap;color:#abb2bf"><span style="letter-spacing:1.429px">sample-pdf-download-10-</span></div><div style="position:absolute;left:16px;top:407.10px;font-size:24.5px;line-height:31px;white-space:nowrap;color:#abb2bf"><span style="letter-spacing:1.447px">mb-longer-title</span></div><div style="position:absolute;left:0;top:458.3px;width:344.57px;height:193.1px;background:rgba(0,0,0,.035);border-top:2px solid rgba(255,255,255,.022)"></div><svg style="position:absolute;left:17.3px;top:479.8px;" width="25.2" height="25.2" viewBox="0 0 16 16" fill="#6d7783"><path d="M1.5 1a.5.5 0 0 0-.5.5v3a.5.5 0 0 1-1 0v-3A1.5 1.5 0 0 1 1.5 0h3a.5.5 0 0 1 0 1h-3zM11 .5a.5.5 0 0 1 .5-.5h3A1.5 1.5 0 0 1 16 1.5v3a.5.5 0 0 1-1 0v-3a.5.5 0 0 0-.5-.5h-3a.5.5 0 0 1-.5-.5zM.5 11a.5.5 0 0 1 .5.5v3a.5.5 0 0 0 .5.5h3a.5.5 0 0 1 0 1h-3A1.5 1.5 0 0 1 0 14.5v-3a.5.5 0 0 1 .5-.5zm15 0a.5.5 0 0 1 .5.5v3a1.5 1.5 0 0 1-1.5 1.5h-3a.5.5 0 0 1 0-1h3a.5.5 0 0 0 .5-.5v-3a.5.5 0 0 1 .5-.5zM3 4.5a.5.5 0 0 1 1 0v7a.5.5 0 0 1-1 0v-7zm2 0a.5.5 0 0 1 1 0v7a.5.5 0 0 1-1 0v-7zm2 0a.5.5 0 0 1 1 0v7a.5.5 0 0 1-1 0v-7zm2 0a.5.5 0 0 1 .5-.5h1a.5.5 0 0 1 .5.5v7a.5.5 0 0 1-.5.5h-1a.5.5 0 0 1-.5-.5v-7zm3 0a.5.5 0 0 1 1 0v7a.5.5 0 0 1-1 0v-7z"/></svg><div style="position:absolute;left:59.6px;top:475.90px;font-size:24.5px;line-height:31px;white-space:nowrap;color:#abb2bf;letter-spacing:0.605px">#112412324</div><svg style="position:absolute;left:17.3px;top:526.7px;" width="25.2" height="25.2" viewBox="0 0 16 16" fill="#6d7783"><path d="M11 6.5a.5.5 0 0 1 .5-.5h1a.5.5 0 0 1 .5.5v1a.5.5 0 0 1-.5.5h-1a.5.5 0 0 1-.5-.5v-1z"/><path d="M3.5 0a.5.5 0 0 1 .5.5V1h8V.5a.5.5 0 0 1 1 0V1h1a2 2 0 0 1 2 2v11a2 2 0 0 1-2 2H2a2 2 0 0 1-2-2V3a2 2 0 0 1 2-2h1V.5a.5.5 0 0 1 .5-.5zM1 4v10a1 1 0 0 0 1 1h12a1 1 0 0 0 1-1V4H1z"/></svg><div style="position:absolute;left:59.6px;top:522.80px;font-size:24.5px;line-height:31px;white-space:nowrap;color:#abb2bf;letter-spacing:0.531px">Jan 26, 2021</div><div style="position:absolute;left:16.3px;top:578.3px;width:311.6px;height:56.5px;box-sizing:border-box;border:2px solid #67758b;border-radius:8px"></div><div style="position:absolute;left:117.9px;top:578.3px;width:2.4px;height:56.5px;background:#67758b"></div><div style="position:absolute;left:223.8px;top:578.3px;width:2.4px;height:56.5px;background:#67758b"></div><svg style="position:absolute;left:53.7px;top:592.8000000000001px;" width="28" height="28" viewBox="0 0 16 16" fill="#c3c7cd"><path d="M12.146.146a.5.5 0 0 1 .708 0l3 3a.5.5 0 0 1 0 .708l-10 10a.5.5 0 0 1-.168.11l-5 2a.5.5 0 0 1-.65-.65l2-5a.5.5 0 0 1 .11-.168l10-10zM11.207 2.5 13.5 4.793 14.793 3.5 12.5 1.207 11.207 2.5zm1.586 3L10.5 3.207 4 9.707V10h.5a.5.5 0 0 1 .5.5v.5h.5a.5.5 0 0 1 .5.5v.5h.293l6.5-6.5zm-9.761 5.175-.106.106-1.528 3.821 3.821-1.528.106-.106A.5.5 0 0 1 5 12.5V12h-.5a.5.5 0 0 1-.5-.5V11h-.5a.5.5 0 0 1-.468-.325z"/></svg><svg style="position:absolute;left:155.8px;top:590.8000000000001px;" width="32" height="32" viewBox="0 0 16 16" fill="#c3c7cd"><path d="M16 8s-3-5.5-8-5.5S0 8 0 8s3 5.5 8 5.5S16 8 16 8zM1.173 8a13.133 13.133 0 0 1 1.66-2.043C4.12 4.668 5.88 3.5 8 3.5c2.12 0 3.879 1.168 5.168 2.457A13.133 13.133 0 0 1 14.828 8c-.058.087-.122.183-.195.288-.335.48-.83 1.12-1.465 1.755C11.879 11.332 10.119 12.5 8 12.5c-2.12 0-3.879-1.168-5.168-2.457A13.134 13.134 0 0 1 1.172 8z"/><path d="M8 5.5a2.5 2.5 0 1 0 0 5 2.5 2.5 0 0 0 0-5zM4.5 8a3.5 3.5 0 1 1 7 0 3.5 3.5 0 0 1-7 0z"/></svg><svg style="position:absolute;left:261.9px;top:592.8000000000001px;" width="28" height="28" viewBox="0 0 16 16" fill="#c3c7cd"><path d="M.5 9.9a.5.5 0 0 1 .5.5v2.5a1 1 0 0 0 1 1h12a1 1 0 0 0 1-1v-2.5a.5.5 0 0 1 1 0v2.5a2 2 0 0 1-2 2H2a2 2 0 0 1-2-2v-2.5a.5.5 0 0 1 .5-.5z"/><path d="M7.646 11.854a.5.5 0 0 0 .708 0l3-3a.5.5 0 0 0-.708-.708L8.500 10.293V1.5a.5.5 0 0 0-1 0v8.793L5.354 8.146a.5.5 0 1 0-.708.708l3 3z"/></svg></div><div style="position:absolute;left:2610.86px;top:1489px;width:344.57px;height:651.4px;background:#1c1c1f;border-radius:9px;overflow:hidden"><div class="th" style="left:0;top:0;width:344.57px;height:350px"><div class="pgc" style="width:612px;height:640px;transform:scale(0.5629)"><div style="position:absolute;left:75.0px;top:75.1px;width:464.2px;height:49.7px;overflow:hidden;font-size:10.7px;line-height:12.44px;text-align:justify">Lorem ipsum dolor sit amet, consectetur adipiscing elit. Aenean vitae fringilla nunc. Phasellus et nulla ipsum. Vestibulum quis ex lacus. Mauris sit amet mi a lacus interdum accumsan. Aenean fermentum tempus ante sed rutrum. Aenean et magna elementum, suscipit tellus non, malesuada turpis. Ut eleifend urna eget nisl fermentum, consequat ullamcorper ex rhoncus.</div><div style="position:absolute;left:75.0px;top:136.6px;width:464.2px;height:87.0px;overflow:hidden;font-size:10.7px;line-height:12.44px;text-align:justify">In tincidunt elit id dignissim facilisis. Nunc iaculis odio nisl, sit amet sagittis turpis aliquet eu. Integer vestibulum, ipsum vel volutpat varius, augue arcu pulvinar urna, non scelerisque augue justo vel enim. Proin sodales placerat ante quis vestibulum. Suspendisse aliquet tincidunt cursus. Nam mi ex, rutrum vitae feugiat quis, ultrices vitae tellus. Vivamus viverra justo ut vulputate rhoncus. Ut eu felis quis ante efficitur varius et ac nunc. Duis ullamcorper dignissim posuere. Mauris faucibus est et egestas dignissim. Suspendisse sem lacus, condimentum in libero eget, scelerisque placerat nisl. Sed porttitor bibendum nisl.</div><div style="position:absolute;left:75.0px;top:235.1px;width:464.2px;height:74.6px;overflow:hidden;font-size:10.7px;line-height:12.44px;text-align:justify">Praesent auctor laoreet sem, non ullamcorper dolor pretium molestie. Cras condimentum magna vitae ultrices mattis. Vestibulum vel tempus est, dignissim elementum sem. Nunc eget sagittis odio. Mauris ut libero at nisi faucibus vehicula. Vestibulum vitae eleifend augue. Aliquam et consequat lacus. Phasellus dapibus nulla in gravida auctor. Mauris vitae orci nibh. Quisque sodales ultrices dictum. Praesent auctor dictum leo nec aliquet. Suspendisse potenti. Aenean in diam nisi. Quisque commodo arcu ipsum. Proin iaculis ipsum sit amet massa tempus lobortis.</div><div style="position:absolute;left:75.0px;top:321.1px;width:464.2px;height:49.7px;overflow:hidden;font-size:10.7px;line-height:12.44px;text-align:justify">Aliquam et ex interdum, rutrum neque ut, auctor elit. Nullam mauris ex, imperdiet sit amet diam imperdiet, commodo pretium dui. Donec ac ipsum urna. Pellentesque dapibus, est ut pulvinar dictum, velit nunc sollicitudin ligula, at semper eros orci non nunc. Aliquam sit amet vulputate sapien, quis tincidunt eros. Nam quis tincidunt lorem. In tempus ornare dui at porttitor.</div><div style="position:absolute;left:75.0px;top:382.6px;width:464.2px;height:49.7px;overflow:hidden;font-size:10.7px;line-height:12.44px;text-align:justify">Curabitur eu enim orci. Vestibulum consequat eros quis sollicitudin tincidunt. Sed arcu est, laoreet quis tempor et, posuere et est. Cras tincidunt lacus erat, sit amet aliquam enim consectetur nec. Aenean scelerisque rutrum elit sed lobortis. Morbi malesuada aliquam arcu, sit amet egestas neque aliquam ut. Sed dui mi, feugiat a risus sit amet, posuere placerat orci.</div><div style="position:absolute;left:75.0px;top:443.7px;width:464.2px;height:49.7px;overflow:hidden;font-size:10.7px;line-height:12.44px;text-align:justify">Nulla at consectetur nisl. Integer congue diam in magna tincidunt dictum. In hac habitasse platea dictumst. Maecenas ultricies aliquet fringilla. Pellentesque id leo semper, imperdiet ante sit amet, egestas justo. Etiam faucibus vehicula eros, a vehicula risus hendrerit bibendum. Suspendisse potenti. Sed semper mi vel ligula mollis, quis interdum augue consectetur.</div><div style="position:absolute;left:75.0px;top:505.2px;width:464.2px;height:49.7px;overflow:hidden;font-size:10.7px;line-height:12.44px;text-align:justify">Curabitur bibendum ante urna, sed blandit libero egestas id. Pellentesque rhoncus elit in lacus ultrices fringilla. Nam ac metus eu turpis mattis rutrum. Mauris mattis sem ex, facilisis molestie sapien luctus non. Vestibulum tincidunt urna at odio suscipit, vel congue felis cursus. Etiam tellus magna, egestas ac suscipit in, laoreet quis felis. Proin non orci id dui tincidunt egestas.</div><div style="position:absolute;left:75.0px;top:566.7px;width:464.2px;height:62.2px;overflow:hidden;font-size:10.7px;line-height:12.44px;text-align:justify">Vestibulum eleifend, ligula a scelerisque vehicula, risus justo ultricies ligula, et interdum lorem ex eget ex. Duis dignissim lacus vitae velit laoreet, vitae placerat velit aliquet. Etiam eget mollis nulla, ac vehicula mi. Etiam non sollicitudin velit, imperdiet commodo mi. Fusce quis tellus tellus. Donec dictum euismod risus non tempus. Duis quis pellentesque nunc. Praesent elementum condimentum mollis.</div></div></div><div style="position:absolute;left:188.17px;top:7.2px;width:148.30px;height:45.8px;border-radius:7px;background:#7b3caa;color:#d6d6d6;font-weight:bold;font-size:27.5px;line-height:45.8px;text-align:center;letter-spacing:0.145px;white-space:nowrap;text-indent:0.145px"><span style="position:relative;top:.6px">NewOne</span></div><div style="position:absolute;left:16px;top:370.30px;font-size:24.5px;line-height:31px;white-space:nowrap;color:#abb2bf"><span style="font-weight:bold;color:#48a03c;text-decoration:underline;text-decoration-thickness:2px;text-underline-offset:3.5px;letter-spacing:1.075px">Newest Correspondent</span><span style="letter-spacing:0.194px">:</span></div><div style="position:absolute;left:16px;top:407.10px;font-size:24.5px;line-height:31px;white-space:nowrap;color:#abb2bf"><span style="letter-spacing:1.080px">f_combineds</span></div><div style="position:absolute;left:0;top:505.2px;width:344.57px;height:146.2px;background:rgba(0,0,0,.035);border-top:2px solid rgba(255,255,255,.022)"></div><svg style="position:absolute;left:17.3px;top:526.6999999999999px;" width="25.2" height="25.2" viewBox="0 0 16 16" fill="#6d7783"><path d="M11 6.5a.5.5 0 0 1 .5-.5h1a.5.5 0 0 1 .5.5v1a.5.5 0 0 1-.5.5h-1a.5.5 0 0 1-.5-.5v-1z"/><path d="M3.5 0a.5.5 0 0 1 .5.5V1h8V.5a.5.5 0 0 1 1 0V1h1a2 2 0 0 1 2 2v11a2 2 0 0 1-2 2H2a2 2 0 0 1-2-2V3a2 2 0 0 1 2-2h1V.5a.5.5 0 0 1 .5-.5zM1 4v10a1 1 0 0 0 1 1h12a1 1 0 0 0 1-1V4H1z"/></svg><div style="position:absolute;left:59.6px;top:522.80px;font-size:24.5px;line-height:31px;white-space:nowrap;color:#abb2bf;letter-spacing:0.535px">Feb 7, 2021</div><div style="position:absolute;left:16.3px;top:578.3px;width:311.6px;height:56.5px;box-sizing:border-box;border:2px solid #67758b;border-radius:8px"></div><div style="position:absolute;left:117.9px;top:578.3px;width:2.4px;height:56.5px;background:#67758b"></div><div style="position:absolute;left:223.8px;top:578.3px;width:2.4px;height:56.5px;background:#67758b"></div><svg style="position:absolute;left:53.7px;top:592.8000000000001px;" width="28" height="28" viewBox="0 0 16 16" fill="#c3c7cd"><path d="M12.146.146a.5.5 0 0 1 .708 0l3 3a.5.5 0 0 1 0 .708l-10 10a.5.5 0 0 1-.168.11l-5 2a.5.5 0 0 1-.65-.65l2-5a.5.5 0 0 1 .11-.168l10-10zM11.207 2.5 13.5 4.793 14.793 3.5 12.5 1.207 11.207 2.5zm1.586 3L10.5 3.207 4 9.707V10h.5a.5.5 0 0 1 .5.5v.5h.5a.5.5 0 0 1 .5.5v.5h.293l6.5-6.5zm-9.761 5.175-.106.106-1.528 3.821 3.821-1.528.106-.106A.5.5 0 0 1 5 12.5V12h-.5a.5.5 0 0 1-.5-.5V11h-.5a.5.5 0 0 1-.468-.325z"/></svg><svg style="position:absolute;left:155.8px;top:590.8000000000001px;" width="32" height="32" viewBox="0 0 16 16" fill="#c3c7cd"><path d="M16 8s-3-5.5-8-5.5S0 8 0 8s3 5.5 8 5.5S16 8 16 8zM1.173 8a13.133 13.133 0 0 1 1.66-2.043C4.12 4.668 5.88 3.5 8 3.5c2.12 0 3.879 1.168 5.168 2.457A13.133 13.133 0 0 1 14.828 8c-.058.087-.122.183-.195.288-.335.48-.83 1.12-1.465 1.755C11.879 11.332 10.119 12.5 8 12.5c-2.12 0-3.879-1.168-5.168-2.457A13.134 13.134 0 0 1 1.172 8z"/><path d="M8 5.5a2.5 2.5 0 1 0 0 5 2.5 2.5 0 0 0 0-5zM4.5 8a3.5 3.5 0 1 1 7 0 3.5 3.5 0 0 1-7 0z"/></svg><svg style="position:absolute;left:261.9px;top:592.8000000000001px;" width="28" height="28" viewBox="0 0 16 16" fill="#c3c7cd"><path d="M.5 9.9a.5.5 0 0 1 .5.5v2.5a1 1 0 0 0 1 1h12a1 1 0 0 0 1-1v-2.5a.5.5 0 0 1 1 0v2.5a2 2 0 0 1-2 2H2a2 2 0 0 1-2-2v-2.5a.5.5 0 0 1 .5-.5z"/><path d="M7.646 11.854a.5.5 0 0 0 .708 0l3-3a.5.5 0 0 0-.708-.708L8.500 10.293V1.5a.5.5 0 0 0-1 0v8.793L5.354 8.146a.5.5 0 1 0-.708.708l3 3z"/></svg></div><div style="position:absolute;left:2991.43px;top:1489px;width:344.57px;height:651.4px;background:#1c1c1f;border-radius:9px;overflow:hidden"><div class="th" style="left:0;top:0;width:344.57px;height:350px"><div class="pgc" style="width:612px;height:640px;transform:scale(0.5629)"><div style="position:absolute;left:0;top:71.1px;width:612px;text-align:center;font-weight:bold;font-size:28.7px;line-height:34px;color:#f4f4f4">Lorem ipsum</div><div style="position:absolute;left:76.39012257949904px;top:150.15px;font-size:18.5px;line-height:21.27px;white-space:nowrap;font-family:'Liberation Sans',sans-serif;width:454.7877065198082px;text-align:justify;text-align-last:justify;color:#f0f0f0;"><b>Lorem ipsum dolor sit amet, consectetur adipiscing</b></div><div style="position:absolute;left:57.73672055427252px;top:170.93px;font-size:18.5px;line-height:21.27px;white-space:nowrap;font-family:'Liberation Sans',sans-serif;color:#f0f0f0;letter-spacing:.1px;"><b>elit. Nunc ac faucibus odio.</b></div><div style="position:absolute;left:57.7px;top:223.2px;width:495.6px;font-family:'DejaVu Sans',sans-serif;font-size:10.75px;line-height:15.15px;text-align:justify">Vestibulum neque massa, scelerisque sit amet ligula eu, congue molestie mi. Praesent ut varius sem. Nullam at porttitor arcu, nec lacinia nisi. Ut ac dolor vitae odio interdum condimentum. <b>Vivamus dapibus sodales ex, vitae malesuada ipsum cursus convallis. Maecenas sed egestas nulla, ac condimentum orci.</b> Mauris diam felis, vulputate ac suscipit et, iaculis non est. Curabitur semper arcu ac ligula semper, nec luctus nisl blandit. Integer lacinia ante ac libero lobortis imperdiet. <i>Nullam mollis convallis ipsum, ac accumsan nunc vehicula vitae.</i> Nulla eget justo in felis tristique fringilla. Morbi sit amet tortor quis risus auctor condimentum. Morbi in ullamcorper elit. Nulla iaculis tellus sit amet mauris tempus fringilla.</div><div style="position:absolute;left:57.73672055427252px;top:372.75px;font-size:10.75px;line-height:12.36px;white-space:nowrap;font-family:'DejaVu Sans',sans-serif;">Maecenas mauris lectus, lobortis et purus mattis, blandit dictum tellus.</div><div style="position:absolute;left:94.86587315686623px;top:400.11px;font-size:10.75px;line-height:12.36px;white-space:nowrap;font-family:'DejaVu Sans',sans-serif;"><b>Maecenas non lorem quis tellus placerat varius.</b></div><div style="position:absolute;left:77.3px;top:404.3px;width:3.6px;height:3.6px;border-radius:50%;background:#ddd"></div><div style="position:absolute;left:94.86587315686623px;top:428.71px;font-size:10.75px;line-height:12.36px;white-space:nowrap;font-family:'DejaVu Sans',sans-serif;"><i>Nulla facilisi.</i></div><div style="position:absolute;left:77.3px;top:432.9px;width:3.6px;height:3.6px;border-radius:50%;background:#ddd"></div><div style="position:absolute;left:94.86587315686623px;top:457.13px;font-size:10.75px;line-height:12.36px;white-space:nowrap;font-family:'DejaVu Sans',sans-serif;"><u>Aenean congue fringilla justo ut aliquam. </u></div><div style="position:absolute;left:77.3px;top:461.3px;width:3.6px;height:3.6px;border-radius:50%;background:#ddd"></div><div style="position:absolute;left:94.86587315686623px;top:486.98px;font-size:10.75px;line-height:12.36px;white-space:nowrap;font-family:'DejaVu Sans',sans-serif;width:458.51838692485353px;text-align:justify;text-align-last:justify;"><u>Mauris id ex erat. </u>Nunc vulputate neque vitae justo facilisis, non condimentum ante</div><div style="position:absolute;left:77.3px;top:491.2px;width:3.6px;height:3.6px;border-radius:50%;background:#ddd"></div><div style="position:absolute;left:94.86587315686623px;top:503.32px;font-size:10.75px;line-height:12.36px;white-space:nowrap;font-family:'DejaVu Sans',sans-serif;">sagittis.</div><div style="position:absolute;left:94.86587315686623px;top:531.21px;font-size:10.75px;line-height:12.36px;white-space:nowrap;font-family:'DejaVu Sans',sans-serif;">Morbi viverra semper lorem nec molestie.</div><div style="position:absolute;left:77.3px;top:535.4px;width:3.6px;height:3.6px;border-radius:50%;background:#ddd"></div><div style="position:absolute;left:94.86587315686623px;top:559.64px;font-size:10.75px;line-height:12.36px;white-space:nowrap;font-family:'DejaVu Sans',sans-serif;">Maecenas tincidunt est efficitur ligula euismod, sit amet ornare est vulputate.</div><div style="position:absolute;left:77.3px;top:563.8px;width:3.6px;height:3.6px;border-radius:50%;background:#ddd"></div><div style="position:absolute;left:160.24160596908865px;top:599.73px;font-size:9px;line-height:10.35px;white-space:nowrap;font-family:'DejaVu Sans',sans-serif;color:#aaa;">12</div></div></div><div style="position:absolute;left:16px;top:370.30px;font-size:24.5px;line-height:31px;white-space:nowrap;color:#abb2bf"><span style="letter-spacing:0.866px">file-sample_150kBs</span></div><div style="position:absolute;left:0;top:505.2px;width:344.57px;height:146.2px;background:rgba(0,0,0,.035);border-top:2px solid rgba(255,255,255,.022)"></div><svg style="position:absolute;left:17.3px;top:526.6999999999999px;" width="25.2" height="25.2" viewBox="0 0 16 16" fill="#6d7783"><path d="M11 6.5a.5.5 0 0 1 .5-.5h1a.5.5 0 0 1 .5.5v1a.5.5 0 0 1-.5.5h-1a.5.5 0 0 1-.5-.5v-1z"/><path d="M3.5 0a.5.5 0 0 1 .5.5V1h8V.5a.5.5 0 0 1 1 0V1h1a2 2 0 0 1 2 2v11a2 2 0 0 1-2 2H2a2 2 0 0 1-2-2V3a2 2 0 0 1 2-2h1V.5a.5.5 0 0 1 .5-.5zM1 4v10a1 1 0 0 0 1 1h12a1 1 0 0 0 1-1V4H1z"/></svg><div style="position:absolute;left:59.6px;top:522.80px;font-size:24.5px;line-height:31px;white-space:nowrap;color:#abb2bf;letter-spacing:0.541px">Feb 15, 2021</div><div style="position:absolute;left:16.3px;top:578.3px;width:311.6px;height:56.5px;box-sizing:border-box;border:2px solid #67758b;border-radius:8px"></div><div style="position:absolute;left:117.9px;top:578.3px;width:2.4px;height:56.5px;background:#67758b"></div><div style="position:absolute;left:223.8px;top:578.3px;width:2.4px;height:56.5px;background:#67758b"></div><svg style="position:absolute;left:53.7px;top:592.8000000000001px;" width="28" height="28" viewBox="0 0 16 16" fill="#c3c7cd"><path d="M12.146.146a.5.5 0 0 1 .708 0l3 3a.5.5 0 0 1 0 .708l-10 10a.5.5 0 0 1-.168.11l-5 2a.5.5 0 0 1-.65-.65l2-5a.5.5 0 0 1 .11-.168l10-10zM11.207 2.5 13.5 4.793 14.793 3.5 12.5 1.207 11.207 2.5zm1.586 3L10.5 3.207 4 9.707V10h.5a.5.5 0 0 1 .5.5v.5h.5a.5.5 0 0 1 .5.5v.5h.293l6.5-6.5zm-9.761 5.175-.106.106-1.528 3.821 3.821-1.528.106-.106A.5.5 0 0 1 5 12.5V12h-.5a.5.5 0 0 1-.5-.5V11h-.5a.5.5 0 0 1-.468-.325z"/></svg><svg style="position:absolute;left:155.8px;top:590.8000000000001px;" width="32" height="32" viewBox="0 0 16 16" fill="#c3c7cd"><path d="M16 8s-3-5.5-8-5.5S0 8 0 8s3 5.5 8 5.5S16 8 16 8zM1.173 8a13.133 13.133 0 0 1 1.66-2.043C4.12 4.668 5.88 3.5 8 3.5c2.12 0 3.879 1.168 5.168 2.457A13.133 13.133 0 0 1 14.828 8c-.058.087-.122.183-.195.288-.335.48-.83 1.12-1.465 1.755C11.879 11.332 10.119 12.5 8 12.5c-2.12 0-3.879-1.168-5.168-2.457A13.134 13.134 0 0 1 1.172 8z"/><path d="M8 5.5a2.5 2.5 0 1 0 0 5 2.5 2.5 0 0 0 0-5zM4.5 8a3.5 3.5 0 1 1 7 0 3.5 3.5 0 0 1-7 0z"/></svg><svg style="position:absolute;left:261.9px;top:592.8000000000001px;" width="28" height="28" viewBox="0 0 16 16" fill="#c3c7cd"><path d="M.5 9.9a.5.5 0 0 1 .5.5v2.5a1 1 0 0 0 1 1h12a1 1 0 0 0 1-1v-2.5a.5.5 0 0 1 1 0v2.5a2 2 0 0 1-2 2H2a2 2 0 0 1-2-2v-2.5a.5.5 0 0 1 .5-.5z"/><path d="M7.646 11.854a.5.5 0 0 0 .708 0l3-3a.5.5 0 0 0-.708-.708L8.500 10.293V1.5a.5.5 0 0 0-1 0v8.793L5.354 8.146a.5.5 0 1 0-.708.708l3 3z"/></svg></div>
</div><div style="position:absolute;left:0;top:0;width:3274px;height:2052px;border-radius:20px;box-shadow:inset 0 0 0 1.2px rgba(0,0,0,.9),inset 0 0 0 2.4px rgba(255,255,255,.2);pointer-events:none"></div></div>
</body></html>
